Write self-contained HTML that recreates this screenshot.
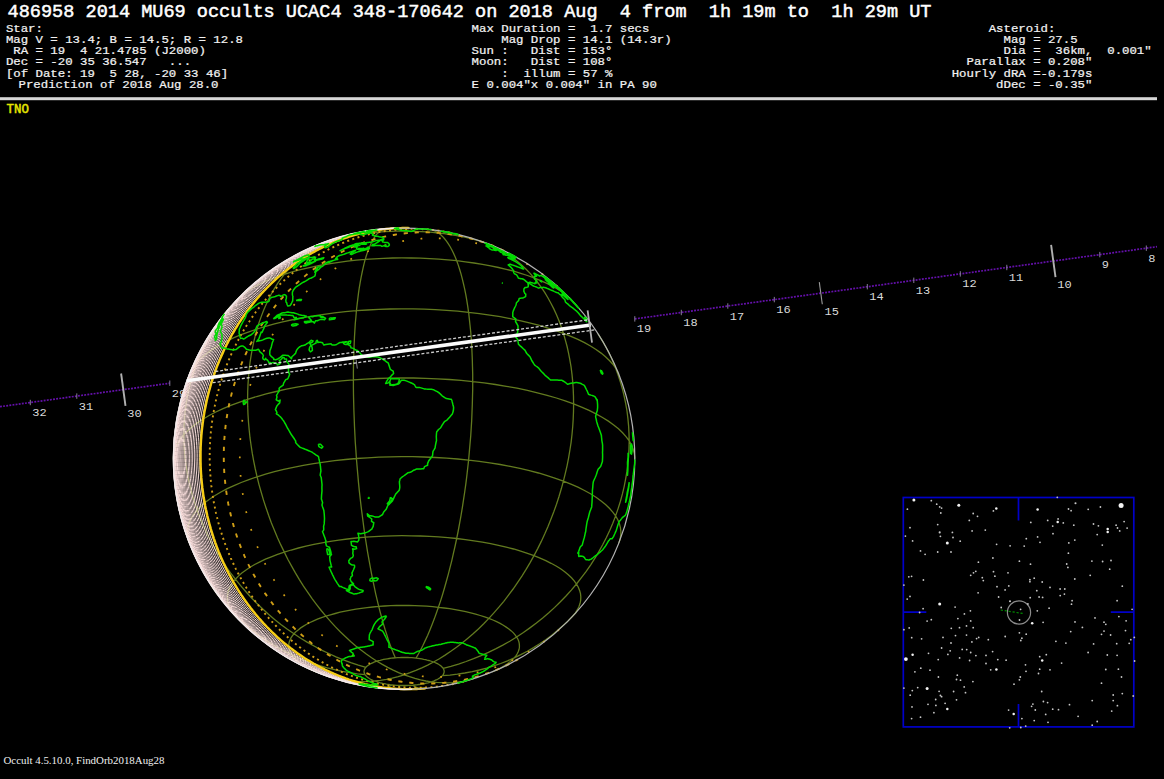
<!DOCTYPE html>
<html><head><meta charset="utf-8"><title>486958 2014 MU69 occults UCAC4 348-170642</title>
<style>
html,body{margin:0;padding:0;background:#000;}
body{width:1164px;height:779px;position:relative;overflow:hidden;color:#fff;}
svg{position:absolute;left:0;top:0;}
</style></head><body>
<svg width="1164" height="779" viewBox="0 0 1164 779">
<g stroke="#6410aa" stroke-width="1.7" stroke-dasharray="1.9 1.25" fill="none">
<path d="M0 406.7 L169.8 383.2"/>
<path d="M634.8 318.9 L1157 246.7"/>
</g>
<g fill="none"><path d="M1146.3 245.5 L1146.3 250.9" stroke="#857d96" stroke-width="1"/><path d="M1099.8 251.9 L1099.8 257.3" stroke="#857d96" stroke-width="1"/><path d="M1051.1 244.9 L1055.5 277.2" stroke="#b0b0b0" stroke-width="1.9"/><path d="M1006.8 264.8 L1006.8 270.2" stroke="#857d96" stroke-width="1"/><path d="M960.3 271.2 L960.3 276.6" stroke="#857d96" stroke-width="1"/><path d="M913.8 277.6 L913.8 283" stroke="#857d96" stroke-width="1"/><path d="M867.3 284 L867.3 289.4" stroke="#857d96" stroke-width="1"/><path d="M819.3 282.1 L822.3 304.3" stroke="#9a9a9a" stroke-width="1.1"/><path d="M774.3 296.9 L774.3 302.3" stroke="#857d96" stroke-width="1"/><path d="M727.8 303.3 L727.8 308.7" stroke="#857d96" stroke-width="1"/><path d="M681.3 309.8 L681.3 315.2" stroke="#857d96" stroke-width="1"/><path d="M634.8 316.2 L634.8 321.6" stroke="#857d96" stroke-width="1"/><path d="M169.8 380.5 L169.8 385.9" stroke="#857d96" stroke-width="1"/><path d="M121.1 373.5 L125.5 405.8" stroke="#b0b0b0" stroke-width="1.9"/><path d="M76.8 393.4 L76.8 398.8" stroke="#857d96" stroke-width="1"/><path d="M30.3 399.8 L30.3 405.2" stroke="#857d96" stroke-width="1"/></g>
<g font-family="'Liberation Mono',monospace" font-size="12px" fill="#dadada"><text transform="translate(1148.2 261.7) scale(1 0.9)">8</text><text transform="translate(1101.7 268.1) scale(1 0.9)">9</text><text transform="translate(1057.3 288.3) scale(1 0.9)">10</text><text transform="translate(1008.7 281) scale(1 0.9)">11</text><text transform="translate(962.2 287.4) scale(1 0.9)">12</text><text transform="translate(915.7 293.8) scale(1 0.9)">13</text><text transform="translate(869.2 300.2) scale(1 0.9)">14</text><text transform="translate(824.6 314.8) scale(1 0.9)">15</text><text transform="translate(776.2 313.1) scale(1 0.9)">16</text><text transform="translate(729.7 319.5) scale(1 0.9)">17</text><text transform="translate(683.2 326) scale(1 0.9)">18</text><text transform="translate(636.7 332.4) scale(1 0.9)">19</text><text transform="translate(171.7 396.7) scale(1 0.9)">29</text><text transform="translate(127.3 416.9) scale(1 0.9)">30</text><text transform="translate(78.7 409.6) scale(1 0.9)">31</text><text transform="translate(32.2 416) scale(1 0.9)">32</text></g>
<path d="M374.7 681 L373.3 680.5 L372 679.9 L370.8 679.3 L369.7 678.7 L368.6 678 L367.7 677.4 L366.9 676.7 L366.2 676 L365.5 675.3 L365 674.6 L364.6 673.9 L364.3 673.1 L364 671.7 L364.2 670.2 L364.8 668.8 L365.3 668 L365.9 667.3 L366.5 666.6 L367.3 666 L368.2 665.3 L369.2 664.6 L370.2 664 L371.4 663.4 L372.7 662.8 L374 662.2 L375.4 661.7 L376.9 661.2 L378.5 660.7 L380.2 660.3 L381.9 659.8 L383.6 659.4 L385.5 659.1 L387.4 658.8 L389.3 658.5 L391.3 658.2 L393.3 658 L395.3 657.8 L397.4 657.7 L399.4 657.6 L401.5 657.5 L403.6 657.5 L405.7 657.5 L407.8 657.5 L409.9 657.6 L411.9 657.7 L414 657.9 L416 658.1 L418 658.3 L419.9 658.6 L421.8 658.9 L423.7 659.3 L425.5 659.6 L427.2 660.1 L428.9 660.5 L430.5 661 L432.1 661.5 L433.5 662 L434.9 662.5 L436.2 663.1 L437.4 663.7 L438.5 664.3 L439.6 665 L440.5 665.6 L441.3 666.3 L442 667 L442.7 667.7 L443.2 668.4 L443.6 669.1 L443.9 669.9 L444.2 671.3 L444 672.8 L443.4 674.3 L442.9 675 L442.3 675.7 L441.7 676.4 L440.9 677.1 L440 677.7 L439 678.4 L438 679 L436.8 679.6 L435.5 680.2 L434.2 680.8 L432.8 681.3 L431.3 681.8 L429.7 682.3 L428 682.8 L426.3 683.2 L424.6 683.6 L422.7 683.9 L420.8 684.3 L418.9 684.5 L416.9 684.8 L414.9 685 L412.9 685.2 L410.8 685.3 L408.8 685.4 L406.7 685.5 L404.6 685.5 L402.5 685.5 L400.4 685.5 L398.3 685.4 L396.3 685.3 L394.2 685.1 L392.2 684.9 L390.2 684.7 L388.3 684.4 L386.4 684.1 L384.5 683.7 L382.7 683.4 L381 683 L379.3 682.5 L377.7 682 L376.1 681.5 L374.7 681M316.2 672 L315.3 671.6 L311.6 670 L308.1 668.3 L304.9 666.5 L302 664.6 L299.3 662.7 L296.9 660.8 L294.8 658.8 L293.1 656.8 L291.6 654.7 L290.4 652.6 L289.5 650.6 L289 648.4 L288.8 646.3 L288.8 644.2 L289.2 642.1 L290 640 L291 637.9 L292.3 635.9 L294 633.8 L295.9 631.8 L298.2 629.9 L300.7 627.9 L303.5 626.1 L306.6 624.3 L310 622.5 L313.6 620.8 L317.4 619.2 L321.5 617.6 L325.9 616.2 L330.4 614.8 L335.2 613.5 L340.1 612.2 L345.2 611.1 L350.5 610.1 L355.9 609.1 L361.4 608.3 L367.1 607.6 L372.9 607 L378.7 606.4 L384.7 606 L390.6 605.7 L396.7 605.5 L402.7 605.4 L408.7 605.5 L414.8 605.6 L420.8 605.9 L426.7 606.2 L432.6 606.7 L438.4 607.3 L444.1 608 L449.7 608.7 L455.2 609.6 L460.6 610.6 L465.7 611.7 L470.8 612.9 L475.6 614.1 L480.2 615.5 L484.7 616.9 L488.9 618.4 L492.9 620 L496.6 621.7 L500.1 623.4 L503.3 625.2 L506.2 627.1 L508.9 629 L511.3 630.9 L513.4 632.9 L515.1 634.9 L516.6 637 L517.8 639 L518.7 641.1 L519.2 643.2 L519.4 645.3 L519.4 647.5 L519 649.6 L518.2 651.7 L517.2 653.8 L515.9 655.8 L514.2 657.9 L512.3 659.9 L510 661.8 L507.5 663.7 L504.7 665.6 L501.6 667.4 L498.2 669.2 L494.6 670.9 L492 672M236.3 617 L234 614.3 L231.7 611.2 L229.9 608 L228.6 604.8 L227.7 601.6 L227.4 598.4 L227.5 595.1 L228.1 591.9 L229.2 588.7 L230.8 585.5 L232.8 582.3 L235.4 579.2 L238.4 576.1 L241.8 573.1 L245.7 570.2 L250 567.3 L254.7 564.5 L259.9 561.8 L265.4 559.2 L271.3 556.8 L277.6 554.4 L284.3 552.1 L291.2 550 L298.5 548 L306 546.1 L313.9 544.4 L322 542.8 L330.3 541.4 L338.8 540.1 L347.4 539 L356.3 538 L365.2 537.2 L374.3 536.6 L383.5 536.1 L392.7 535.8 L401.9 535.7 L411.2 535.8 L420.4 536 L429.6 536.4 L438.7 536.9 L447.8 537.6 L456.7 538.5 L465.4 539.6 L474 540.8 L482.4 542.1 L490.6 543.6 L498.5 545.3 L506.2 547.1 L513.6 549 L520.7 551.1 L527.5 553.3 L534 555.6 L540.1 558.1 L545.8 560.6 L551.1 563.3 L556.1 566 L560.6 568.8 L564.7 571.7 L568.3 574.7 L571.5 577.8 L574.2 580.9 L576.5 584 L578.3 587.2 L579.6 590.4 L580.5 593.6 L580.8 596.8 L580.7 600.1 L580.1 603.3 L579 606.5 L577.4 609.7 L575.4 612.9 L572.8 616 L571.8 617M189.4 542.9 L188.8 541.5 L187.8 537.5 L187.3 533.5 L187.5 529.6 L188.2 525.6 L189.6 521.6 L191.5 517.7 L194 513.9 L197.1 510 L200.8 506.3 L205 502.6 L209.8 499 L215 495.5 L220.9 492 L227.2 488.7 L234 485.6 L241.2 482.5 L248.9 479.6 L257.1 476.8 L265.6 474.2 L274.5 471.7 L283.8 469.4 L293.4 467.3 L303.3 465.4 L313.5 463.6 L323.9 462.1 L334.6 460.7 L345.4 459.5 L356.4 458.5 L367.6 457.8 L378.8 457.2 L390.1 456.8 L401.5 456.7 L412.8 456.7 L424.1 457 L435.4 457.5 L446.6 458.2 L457.6 459 L468.6 460.1 L479.3 461.4 L489.8 462.9 L500.2 464.5 L510.2 466.4 L519.9 468.4 L529.4 470.6 L538.5 473 L547.2 475.6 L555.5 478.3 L563.4 481.1 L570.9 484.1 L577.9 487.2 L584.5 490.5 L590.5 493.8 L596 497.3 L601.1 500.9 L605.5 504.5 L609.4 508.3 L612.8 512.1 L615.6 515.9 L617.8 519.8 L619.4 523.7 L620.4 527.7 L620.9 531.7 L620.7 535.7 L620 539.6 L618.8 542.9M173.5 458.7 L173.6 455.5 L174.4 451.2 L175.8 447 L177.9 442.9 L180.5 438.7 L183.8 434.7 L187.7 430.7 L192.2 426.7 L197.3 422.9 L202.9 419.2 L209.1 415.5 L215.8 412 L223.1 408.6 L230.8 405.4 L239 402.3 L247.6 399.3 L256.7 396.5 L266.2 393.9 L276.1 391.5 L286.3 389.2 L296.9 387.2 L307.7 385.3 L318.8 383.6 L330.1 382.2 L341.7 380.9 L353.4 379.9 L365.2 379.1 L377.2 378.5 L389.2 378.1 L401.3 377.9 L413.4 378 L425.4 378.3 L437.4 378.8 L449.3 379.5 L461.1 380.4 L472.7 381.6 L484.1 382.9 L495.4 384.5 L506.3 386.3 L517 388.2 L527.4 390.4 L537.4 392.8 L547.1 395.3 L556.4 398 L565.2 400.9 L573.6 403.9 L581.6 407.1 L589.1 410.4 L596 413.9 L602.5 417.5 L608.4 421.1 L613.7 424.9 L618.5 428.8 L622.6 432.8 L626.2 436.8 L629.2 440.9 L631.5 445.1 L633.2 449.3 L634.3 453.5 L634.8 457.7 L634.7 458.7M189.4 374.5 L191.5 369.9 L194 366 L197.1 362.2 L200.8 358.5 L205 354.8 L209.8 351.2 L215 347.6 L220.9 344.2 L227.2 340.9 L234 337.7 L241.2 334.7 L248.9 331.8 L257.1 329 L265.6 326.4 L274.5 323.9 L283.8 321.6 L293.4 319.5 L303.3 317.6 L313.5 315.8 L323.9 314.3 L334.6 312.9 L345.4 311.7 L356.4 310.7 L367.6 310 L378.8 309.4 L390.1 309 L401.5 308.9 L412.8 308.9 L424.1 309.2 L435.4 309.7 L446.6 310.3 L457.6 311.2 L468.6 312.3 L479.3 313.6 L489.8 315.1 L500.2 316.7 L510.2 318.6 L519.9 320.6 L529.4 322.8 L538.5 325.2 L547.2 327.8 L555.5 330.5 L563.4 333.3 L570.9 336.3 L577.9 339.4 L584.5 342.7 L590.5 346 L596 349.5 L601.1 353.1 L605.5 356.7 L609.4 360.5 L612.8 364.2 L615.6 368.1 L617.8 372 L618.8 374.5M236.4 300.4 L238.4 298.3 L241.8 295.3 L245.7 292.4 L250 289.5 L254.7 286.7 L259.9 284 L265.4 281.4 L271.3 279 L277.6 276.6 L284.3 274.3 L291.2 272.2 L298.5 270.2 L306 268.3 L313.9 266.6 L322 265 L330.3 263.6 L338.8 262.3 L347.4 261.2 L356.3 260.2 L365.2 259.4 L374.3 258.8 L383.5 258.3 L392.7 258 L401.9 257.9 L411.2 258 L420.4 258.2 L429.6 258.6 L438.7 259.1 L447.8 259.8 L456.7 260.7 L465.4 261.8 L474 263 L482.4 264.3 L490.6 265.8 L498.5 267.5 L506.2 269.3 L513.6 271.2 L520.7 273.3 L527.5 275.5 L534 277.8 L540.1 280.3 L545.8 282.8 L551.1 285.5 L556.1 288.2 L560.6 291 L564.7 293.9 L568.3 296.9 L571.5 300M316.2 245.4 L317.4 244.9 L321.5 243.3 L325.9 241.9 L330.4 240.5 L335.2 239.2 L340.1 238 L345.2 236.8 L350.5 235.8 L355.9 234.9 L361.4 234 L367.1 233.3 L372.9 232.7 L378.7 232.2 L384.7 231.7 L390.6 231.4 L396.7 231.2 L402.7 231.2 L408.7 231.2 L414.8 231.3 L420.8 231.6 L426.7 231.9 L432.6 232.4 L438.4 233 L444.1 233.7 L449.7 234.5 L455.2 235.3 L460.6 236.3 L465.7 237.4 L470.8 238.6 L475.6 239.9 L480.2 241.2 L484.7 242.6 L488.9 244.2 L492 245.4M404.1 674.8 L398.2 676.6 L392.3 678.1 L386.4 679.3 L380.5 680.3 L374.7 681 L368.8 681.5 L363.1 681.6 L357.4 681.5 L351.7 681.1 L346.1 680.5 L340.6 679.6 L335.1 678.4 L329.8 676.9 L324.5 675.2 L322.3 674.4M365 674.6 L357.3 673.8 L349.7 672.7 L342.1 671.3 L334.6 669.7 L327.1 667.8 L319.8 665.7 L312.6 663.3 L305.4 660.7 L298.4 657.8 L291.6 654.7 L284.8 651.4 L278.3 647.8 L271.8 644 L265.5 639.9 L259.4 635.7 L253.5 631.2 L247.8 626.5 L242.2 621.6 L236.9 616.5 L231.7 611.2 L226.8 605.7 L222 600.1 L217.5 594.3 L213.2 588.3 L210.1 583.5M365.9 667.3 L358.3 665.1 L350.8 662.6 L343.4 659.8 L336 656.8 L328.8 653.5 L321.6 650.1 L314.5 646.3 L307.5 642.4 L300.7 638.2 L294 633.8 L287.4 629.2 L280.9 624.4 L274.6 619.4 L268.5 614.2 L262.5 608.8 L256.7 603.2 L251.1 597.5 L245.7 591.5 L240.4 585.4 L235.4 579.2 L230.5 572.8 L225.9 566.3 L221.5 559.6 L217.3 552.8 L213.3 545.9 L209.6 538.9 L206.1 531.8 L202.9 524.6 L199.9 517.4 L197.1 510 L194.6 502.6 L192.4 495.2 L190.4 487.7 L188.6 480.1 L187.2 472.6 L186 465 L185 457.4 L184.4 449.8 L184 442.2 L183.8 434.7 L184 427.1 L184.4 419.7 L185 412.2 L186 404.8 L187.2 397.5 L188.6 390.3 L190.4 383.1 L192.4 376 L194.6 369.1 L197.1 362.2 L199.9 355.5 L202.9 348.9 L206.1 342.4 L209.6 336 L213.3 329.8 L217.3 323.8 L221.5 317.9 L225.9 312.2 L230.5 306.7 L231.7 305.4M404.1 674.8 L398.6 672.6 L393.2 670.1 L387.7 667.4 L382.3 664.4 L376.9 661.2 L371.6 657.7 L366.3 654 L361 650.1 L355.8 645.9 L350.6 641.5 L345.5 636.8 L340.5 632 L335.5 626.9 L330.7 621.6 L325.9 616.2 L321.2 610.5 L316.6 604.6 L312.1 598.6 L307.8 592.4 L303.5 586.1 L299.4 579.6 L295.4 572.9 L291.6 566.1 L287.8 559.2 L284.3 552.1 L280.8 544.9 L277.5 537.7 L274.4 530.3 L271.4 522.9 L268.6 515.3 L266 507.7 L263.5 500.1 L261.2 492.3 L259 484.6 L257.1 476.8 L255.3 469 L253.7 461.2 L252.3 453.4 L251.1 445.5 L250 437.7 L249.2 430 L248.5 422.2 L248 414.5 L247.7 406.9 L247.6 399.3 L247.7 391.8 L248 384.4 L248.5 377.1 L249.2 369.8 L250 362.7 L251.1 355.7 L252.3 348.8 L253.7 342.1 L255.3 335.5 L257.1 329 L259 322.7 L261.2 316.6 L263.5 310.6 L266 304.8 L268.6 299.2 L271.4 293.8 L274.4 288.6 L277.5 283.6 L280.8 278.9 L284.3 274.3 L287.8 270 L291.6 265.9 L295.4 262 L299.4 258.4 L303.5 255 L307.8 251.9 L312.1 249 L316.6 246.4 L321.2 244 L325.9 241.9 L330.7 240 L333.2 239.2M395.3 657.8 L393.6 653.7 L391.8 649.3 L390.1 644.7 L388.4 639.9 L386.8 634.8 L385.1 629.5 L383.5 624.1 L381.9 618.4 L380.3 612.5 L378.7 606.4 L377.2 600.2 L375.7 593.8 L374.3 587.2 L372.9 580.5 L371.5 573.6 L370.2 566.5 L368.9 559.4 L367.6 552.1 L366.4 544.7 L365.2 537.2 L364.1 529.6 L363.1 522 L362.1 514.2 L361.1 506.4 L360.2 498.5 L359.3 490.6 L358.5 482.6 L357.8 474.6 L357.1 466.6 L356.4 458.5 L355.9 450.5 L355.3 442.5 L354.9 434.5 L354.5 426.5 L354.2 418.6 L353.9 410.7 L353.7 402.9 L353.5 395.1 L353.4 387.5 L353.4 379.9 L353.4 372.4 L353.5 365 L353.7 357.7 L353.9 350.6 L354.2 343.6 L354.5 336.7 L354.9 329.9 L355.3 323.4 L355.9 317 L356.4 310.7 L357.1 304.7 L357.8 298.8 L358.5 293.1 L359.3 287.7 L360.2 282.4 L361.1 277.3 L362.1 272.5 L363.1 267.9 L364.1 263.6 L365.2 259.4 L366.4 255.5 L367.6 251.9 L368.9 248.5 L370.2 245.4 L371.5 242.5 L372.9 239.9 L374.3 237.6 L375.7 235.5 L377.2 233.7 L378.7 232.2 L380.3 230.9 L381.9 229.9 L383.5 229.2 L385.1 228.8M416 658.1 L418.4 654 L420.7 649.7 L423 645.2 L425.3 640.4 L427.6 635.4 L429.8 630.2 L432 624.7 L434.2 619.1 L436.3 613.3 L438.4 607.3 L440.5 601.1 L442.5 594.7 L444.4 588.2 L446.3 581.5 L448.2 574.7 L450 567.7 L451.8 560.6 L453.4 553.3 L455.1 546 L456.7 538.5 L458.2 531 L459.6 523.3 L461 515.6 L462.3 507.8 L463.5 499.9 L464.7 492 L465.8 484.1 L466.8 476.1 L467.7 468.1 L468.6 460.1 L469.3 452.1 L470 444.1 L470.7 436.1 L471.2 428.2 L471.7 420.3 L472 412.4 L472.3 404.6 L472.5 396.8 L472.7 389.2 L472.7 381.6 L472.7 374.1 L472.5 366.7 L472.3 359.4 L472 352.2 L471.7 345.2 L471.2 338.3 L470.7 331.6 L470 325 L469.3 318.6 L468.6 312.3 L467.7 306.2 L466.8 300.3 L465.8 294.6 L464.7 289.1 L463.5 283.9 L462.3 278.8 L461 273.9 L459.6 269.3 L458.2 264.9 L456.7 260.7 L455.1 256.8 L453.4 253.1 L451.8 249.7 L450 246.5 L448.2 243.6 L446.3 240.9 L444.4 238.5 L442.5 236.4 L440.5 234.6 L438.4 233 L436.3 231.7 L434.2 230.7 L432 229.9 L429.8 229.4M404.1 674.8 L410 672.7 L415.9 670.4 L421.8 667.9 L427.7 665.1 L433.5 662 L439.4 658.7 L445.1 655.1 L450.8 651.3 L456.5 647.3 L462.1 643 L467.6 638.5 L473.1 633.8 L478.4 628.9 L483.7 623.8 L488.9 618.4 L493.9 612.9 L498.9 607.2 L503.8 601.3 L508.5 595.2 L513.1 589 L517.5 582.6 L521.9 576.1 L526.1 569.4 L530.1 562.6 L534 555.6 L537.7 548.6 L541.3 541.4 L544.7 534.1 L547.9 526.7 L550.9 519.3 L553.8 511.8 L556.5 504.2 L559 496.5 L561.3 488.8 L563.4 481.1 L565.3 473.4 L567.1 465.6 L568.6 457.8 L569.9 450 L571.1 442.3 L572 434.5 L572.7 426.8 L573.2 419.1 L573.5 411.5 L573.6 403.9 L573.5 396.4 L573.2 389 L572.7 381.6 L572 374.4 L571.1 367.2 L569.9 360.2 L568.6 353.3 L567.1 346.5 L565.3 339.8 L563.4 333.3 L561.3 327 L559 320.8 L556.5 314.7 L553.8 308.9 L550.9 303.2 L547.9 297.7 L544.7 292.4 L541.3 287.4 L537.7 282.5 L534 277.8 L530.1 273.4 L526.1 269.2 L521.9 265.2 L517.5 261.5 L513.1 257.9 L508.5 254.7 L503.8 251.7 L498.9 248.9 L493.9 246.4 L488.9 244.2 L485.9 243M443.2 668.4 L450.9 666.4 L458.5 664.1 L466.1 661.5 L473.6 658.7 L481.1 655.7 L488.4 652.4 L495.6 648.9 L502.8 645.1 L509.8 641.2 L516.6 637 L523.4 632.5 L529.9 627.9 L536.4 623.1 L542.7 618 L548.8 612.8 L554.7 607.4 L560.4 601.8 L566 596 L571.3 590.1 L576.5 584 L581.4 577.7 L586.2 571.3 L590.7 564.8 L595 558.1 L599 551.4 L602.8 544.5 L606.4 537.5 L609.7 530.4 L612.8 523.2 L615.6 515.9 L618.1 508.6 L620.4 501.2 L622.5 493.7 L624.2 486.3 L625.7 478.7 L627 471.2 L627.9 463.6 L628.6 456.1 L629 448.5 L629.2 440.9 L629 433.4 L628.6 425.9 L627.9 418.4 L627 411 L625.7 403.7 L624.2 396.4 L622.5 389.2 L620.4 382.1 L618.1 375 L615.6 368.1 L612.8 361.3 L609.7 354.6 L606.4 348 L602.8 341.6 L599 335.3 L598.1 333.9M442.3 675.7 L449.9 675.1 L457.4 674.2 L464.8 673 L472.2 671.6 L479.4 670 L486.6 668.1 L493.7 665.9 L500.7 663.5 L507.5 660.8 L514.2 657.9 L520.8 654.7 L527.3 651.3 L533.6 647.6 L539.7 643.8 L545.7 639.7 L551.5 635.4 L557.1 630.8 L562.5 626.1 L567.8 621.1 L572.8 616 L576.5 612M404.1 674.8 L409.6 676.7 L415 678.4 L420.5 679.8 L425.9 681 L431.3 681.8 L436.6 682.4 L441.9 682.7 L447.2 682.8 L452.4 682.6 L457.6 682.1 L462.7 681.3 L467.7 680.3 L472.7 678.9 L475 678.2M412.9 685.2 L414.6 686.5 L416.4 687.4 L418.1 688.1 L419.8 688.6 L421.4 688.7M392.2 684.9 L389.8 686.1 L387.5 687 L385.2 687.7 L382.9 688.1 L380.6 688.1 L379.1 688" fill="none" stroke="#627a1f" stroke-width="1.3"/>
<g fill="none" stroke="#ffe4e1" stroke-width="0.95">
<path d="M405 228 L401.5 228 L397.9 228.1 L394.3 228.3 L390.7 228.5 L387.1 228.8 L383.5 229.2 L379.9 229.6 L376.3 230.1 L372.8 230.7 L369.2 231.4 L365.7 232.1 L362.2 232.9 L358.7 233.7 L355.2 234.6 L351.7 235.6 L348.2 236.7 L344.8 237.8 L341.3 239 L337.9 240.3 L334.5 241.6 L331.2 243 L327.8 244.5 L324.5 246 L321.2 247.6 L318 249.3 L314.7 251 L311.5 252.8 L308.3 254.6 L305.2 256.5 L302 258.5 L298.9 260.5 L295.9 262.6 L292.8 264.7 L289.8 267 L286.9 269.2 L284 271.5 L281.1 273.9 L278.2 276.4 L275.4 278.9 L272.7 281.4 L269.9 284 L267.2 286.7 L264.6 289.4 L262 292.1 L259.4 295 L256.9 297.8 L254.5 300.7 L252 303.7 L249.7 306.7 L247.3 309.7 L245.1 312.8 L242.8 316 L240.6 319.2 L238.5 322.4 L236.4 325.7 L234.4 329 L232.4 332.3 L230.5 335.7 L228.6 339.1 L226.8 342.6 L225.1 346.1 L223.4 349.6 L221.7 353.2 L220.1 356.8 L218.6 360.4 L217.1 364.1 L215.7 367.7 L214.3 371.5 L213 375.2 L211.8 379 L210.6 382.7 L209.5 386.6 L208.4 390.4 L207.4 394.2 L206.4 398.1 L205.5 402 L204.7 405.9 L204 409.9 L203.2 413.8 L202.6 417.7 L202 421.7 L201.5 425.7 L201.1 429.7 L200.7 433.7 L200.3 437.7 L200.1 441.7 L199.9 445.7 L199.7 449.7 L199.6 453.8 L199.6 457.8 L199.7 461.8 L199.8 465.8 L199.9 469.9 L200.2 473.9 L200.5 477.9 L200.8 481.9 L201.3 485.9 L201.7 489.9 L202.3 493.9 L202.9 497.8 L203.6 501.8 L204.3 505.8 L205.1 509.7 L206 513.6 L206.9 517.5 L207.8 521.4 L208.9 525.3 L210 529.1 L211.1 532.9 L212.4 536.7 L213.6 540.5 L215 544.2 L216.4 548 L217.8 551.7 L219.3 555.3 L220.9 559 L222.5 562.6 L224.2 566.2 L225.9 569.7 L227.7 573.2 L229.5 576.7 L231.4 580.1 L233.4 583.5 L235.4 586.9 L237.4 590.2 L239.5 593.5 L241.7 596.8 L243.9 600 L246.1 603.1 L248.4 606.2 L250.8 609.3 L253.2 612.3 L255.6 615.3 L258.1 618.2 L260.6 621.1 L263.2 624 L265.8 626.7 L268.5 629.5 L271.2 632.1 L274 634.8 L276.7 637.3 L279.6 639.9 L282.4 642.3 L285.3 644.7 L288.3 647.1 L291.3 649.4 L294.3 651.6 L297.3 653.8 L300.4 655.9 L303.5 657.9 L306.6 659.9 L309.8 661.9 L313 663.7 L316.2 665.6 L319.5 667.3 L322.8 669 L326.1 670.6 L329.4 672.2 L332.8 673.6 L336.2 675.1 L339.5 676.4 L343 677.7 L346.4 678.9 L349.9 680.1 L353.3 681.2 L356.8 682.2 L360.3 683.2 L363.8 684.1 L367.4 684.9 L370.9 685.6 L374.5 686.3 L378 686.9 L381.6 687.4 L385.2 687.9 L388.8 688.3 L392.4 688.7 L396 688.9 L399.6 689.1 L403.2 689.2 L406.8 689.3 L410.4 689.3 L414 689.2 L417.5 689 L421.1 688.8M396 228.1 L392.5 228.3 L388.9 228.5 L385.3 228.8 L381.7 229.2 L378.1 229.6 L374.5 230.2 L371 230.7 L367.4 231.4 L363.9 232.1 L360.4 232.9 L356.9 233.8 L353.4 234.7 L349.9 235.7 L346.4 236.7 L343 237.9 L339.5 239.1 L336.1 240.3 L332.7 241.6 L329.4 243 L326 244.5 L322.7 246 L319.4 247.6 L316.1 249.3 L312.9 251 L309.7 252.8 L306.5 254.6 L303.3 256.5 L300.2 258.5 L297.1 260.5 L294 262.6 L291 264.8 L288 267 L285.1 269.3 L282.1 271.6 L279.3 274 L276.4 276.4 L273.6 278.9 L270.8 281.4 L268.1 284.1 L265.4 286.7 L262.8 289.4 L260.2 292.2 L257.6 295 L255.1 297.9 L252.6 300.8 L250.2 303.7 L247.8 306.7 L245.5 309.8 L243.2 312.9 L241 316 L238.8 319.2 L236.7 322.4 L234.6 325.7 L232.6 329 L230.6 332.4 L228.7 335.7 L226.8 339.2 L225 342.6 L223.2 346.1 L221.5 349.7 L219.9 353.2 L218.3 356.8 L216.8 360.4 L215.3 364.1 L213.9 367.8 L212.5 371.5 L211.2 375.2 L209.9 379 L208.8 382.8 L207.6 386.6 L206.6 390.4 L205.5 394.3 L204.6 398.2 L203.7 402.1 L202.9 406 L202.1 409.9 L201.4 413.9 L200.8 417.8 L200.2 421.8 L199.7 425.8 L199.2 429.7 L198.8 433.7 L198.5 437.7 L198.2 441.8 L198 445.8 L197.9 449.8 L197.8 453.8 L197.8 457.8 L197.8 461.9 L197.9 465.9 L198.1 469.9 L198.4 473.9 L198.6 478 L199 482 L199.4 486 L199.9 490 L200.5 493.9 L201.1 497.9 L201.7 501.9 L202.5 505.8 L203.3 509.8 L204.1 513.7 L205 517.6 L206 521.5 L207.1 525.3 L208.1 529.2 L209.3 533 L210.5 536.8 L211.8 540.6 L213.1 544.3 L214.5 548 L216 551.7 L217.5 555.4 L219 559.1 L220.7 562.7 L222.3 566.2 L224.1 569.8 L225.9 573.3 L227.7 576.8 L229.6 580.2 L231.5 583.6 L233.5 587 L235.6 590.3 L237.7 593.6 L239.8 596.8 L242 600 L244.3 603.2 L246.6 606.3 L249 609.4 L251.4 612.4 L253.8 615.4 L256.3 618.3 L258.8 621.2 L261.4 624 L264 626.8 L266.7 629.6 L269.4 632.2 L272.1 634.9 L274.9 637.4 L277.8 639.9 L280.6 642.4 L283.5 644.8 L286.5 647.2 L289.4 649.5 L292.4 651.7 L295.5 653.9 L298.6 656 L301.7 658 L304.8 660 L308 662 L311.2 663.8 L314.4 665.7 L317.7 667.4 L321 669.1 L324.3 670.7 L327.6 672.3 L331 673.7 L334.3 675.2 L337.7 676.5 L341.2 677.8 L344.6 679 L348.1 680.2 L351.5 681.3 L355 682.3 L358.5 683.3 L362 684.2 L365.6 685 L369.1 685.7 L372.7 686.4 L376.2 687 L379.8 687.5 L383.4 688 L387 688.4 L390.6 688.7 L394.2 689 L397.8 689.2 L401.4 689.3 L405 689.4 L408.6 689.3 L412.2 689.3M387.1 228.6 L383.5 228.9 L379.9 229.3 L376.3 229.7 L372.7 230.3 L369.2 230.8 L365.6 231.5 L362.1 232.2 L358.6 233 L355.1 233.8 L351.6 234.8 L348.1 235.8 L344.6 236.8 L341.2 238 L337.7 239.2 L334.3 240.4 L330.9 241.7 L327.6 243.1 L324.2 244.6 L320.9 246.1 L317.6 247.7 L314.3 249.4 L311.1 251.1 L307.9 252.9 L304.7 254.7 L301.5 256.6 L298.4 258.6 L295.3 260.6 L292.3 262.7 L289.2 264.9 L286.2 267.1 L283.3 269.3 L280.4 271.7 L277.5 274.1 L274.6 276.5 L271.8 279 L269.1 281.5 L266.3 284.1 L263.6 286.8 L261 289.5 L258.4 292.3 L255.8 295.1 L253.3 297.9 L250.9 300.8 L248.4 303.8 L246.1 306.8 L243.7 309.9 L241.5 313 L239.2 316.1 L237 319.3 L234.9 322.5 L232.8 325.8 L230.8 329.1 L228.8 332.4 L226.9 335.8 L225 339.2 L223.2 342.7 L221.5 346.2 L219.8 349.7 L218.1 353.3 L216.5 356.9 L215 360.5 L213.5 364.2 L212.1 367.9 L210.7 371.6 L209.4 375.3 L208.2 379.1 L207 382.9 L205.9 386.7 L204.8 390.5 L203.8 394.4 L202.8 398.2 L201.9 402.1 L201.1 406.1 L200.3 410 L199.6 413.9 L199 417.9 L198.4 421.8 L197.9 425.8 L197.5 429.8 L197.1 433.8 L196.7 437.8 L196.5 441.8 L196.3 445.8 L196.1 449.9 L196 453.9 L196 457.9 L196.1 461.9 L196.2 466 L196.3 470 L196.6 474 L196.9 478 L197.2 482 L197.7 486 L198.1 490 L198.7 494 L199.3 498 L200 501.9 L200.7 505.9 L201.5 509.8 L202.4 513.7 L203.3 517.6 L204.2 521.5 L205.3 525.4 L206.4 529.2 L207.5 533 L208.8 536.8 L210 540.6 L211.4 544.4 L212.7 548.1 L214.2 551.8 L215.7 555.5 L217.3 559.1 L218.9 562.7 L220.6 566.3 L222.3 569.8 L224.1 573.3 L225.9 576.8 L227.8 580.3 L229.8 583.7 L231.8 587 L233.8 590.4 L235.9 593.6 L238.1 596.9 L240.3 600.1 L242.5 603.2 L244.8 606.4 L247.2 609.4 L249.6 612.5 L252 615.4 L254.5 618.4 L257 621.2 L259.6 624.1 L262.2 626.9 L264.9 629.6 L267.6 632.3 L270.4 634.9 L273.1 637.5 L276 640 L278.8 642.4 L281.7 644.9 L284.7 647.2 L287.7 649.5 L290.7 651.7 L293.7 653.9 L296.8 656 L299.9 658.1 L303 660.1 L306.2 662 L309.4 663.9 L312.6 665.7 L315.9 667.4 L319.2 669.1 L322.5 670.7 L325.8 672.3 L329.2 673.8 L332.5 675.2 L335.9 676.6 L339.4 677.8 L342.8 679.1 L346.3 680.2 L349.7 681.3 L353.2 682.3 L356.7 683.3 L360.2 684.2 L363.8 685 L367.3 685.7 L370.9 686.4 L374.4 687 L378 687.6 L381.6 688 L385.2 688.4 L388.8 688.8 L392.4 689 L396 689.2 L399.5 689.3 L403.1 689.4M378.1 229.5 L374.5 229.9 L371 230.4 L367.4 231 L363.9 231.7 L360.3 232.4 L356.8 233.2 L353.3 234 L349.8 234.9 L346.3 235.9 L342.8 237 L339.4 238.1 L336 239.3 L332.6 240.6 L329.2 241.9 L325.8 243.3 L322.5 244.8 L319.2 246.3 L315.9 247.9 L312.6 249.5 L309.3 251.3 L306.1 253 L302.9 254.9 L299.8 256.8 L296.7 258.8 L293.6 260.8 L290.5 262.9 L287.5 265 L284.5 267.2 L281.5 269.5 L278.6 271.8 L275.7 274.2 L272.9 276.6 L270.1 279.1 L267.3 281.7 L264.6 284.3 L261.9 286.9 L259.3 289.6 L256.7 292.4 L254.1 295.2 L251.6 298.1 L249.1 301 L246.7 303.9 L244.3 306.9 L242 310 L239.7 313.1 L237.5 316.2 L235.3 319.4 L233.2 322.6 L231.1 325.9 L229.1 329.2 L227.1 332.6 L225.2 335.9 L223.3 339.4 L221.5 342.8 L219.8 346.3 L218 349.8 L216.4 353.4 L214.8 357 L213.3 360.6 L211.8 364.3 L210.4 368 L209 371.7 L207.7 375.4 L206.5 379.2 L205.3 383 L204.1 386.8 L203.1 390.6 L202.1 394.5 L201.1 398.3 L200.2 402.2 L199.4 406.1 L198.6 410.1 L197.9 414 L197.3 418 L196.7 421.9 L196.2 425.9 L195.7 429.9 L195.4 433.9 L195 437.9 L194.8 441.9 L194.5 445.9 L194.4 449.9 L194.3 454 L194.3 458 L194.4 462 L194.5 466 L194.6 470 L194.9 474.1 L195.2 478.1 L195.5 482.1 L196 486.1 L196.4 490.1 L197 494 L197.6 498 L198.3 502 L199 505.9 L199.8 509.9 L200.6 513.8 L201.6 517.7 L202.5 521.6 L203.6 525.4 L204.7 529.3 L205.8 533.1 L207 536.9 L208.3 540.6 L209.6 544.4 L211 548.1 L212.5 551.8 L214 555.5 L215.6 559.1 L217.2 562.7 L218.8 566.3 L220.6 569.8 L222.4 573.4 L224.2 576.8 L226.1 580.3 L228 583.7 L230 587 L232.1 590.4 L234.2 593.6 L236.3 596.9 L238.5 600.1 L240.8 603.2 L243.1 606.4 L245.4 609.4 L247.8 612.4 L250.3 615.4 L252.8 618.4 L255.3 621.2 L257.9 624.1 L260.5 626.8 L263.2 629.6 L265.9 632.3 L268.6 634.9 L271.4 637.4 L274.2 640 L277.1 642.4 L280 644.8 L282.9 647.2 L285.9 649.5 L288.9 651.7 L292 653.9 L295 656 L298.1 658 L301.3 660 L304.5 662 L307.6 663.8 L310.9 665.7 L314.1 667.4 L317.4 669.1 L320.7 670.7 L324 672.3 L327.4 673.7 L330.8 675.2 L334.2 676.5 L337.6 677.8 L341 679 L344.5 680.2 L348 681.3 L351.4 682.3 L354.9 683.3 L358.5 684.1 L362 685 L365.5 685.7 L369.1 686.4 L372.6 687 L376.2 687.5 L379.8 688 L383.4 688.4 L387 688.7 L390.6 689 L394.2 689.2M369.2 230.7 L365.6 231.2 L362.1 231.9 L358.6 232.6 L355 233.4 L351.5 234.2 L348 235.2 L344.6 236.2 L341.1 237.2 L337.6 238.4 L334.2 239.5 L330.8 240.8 L327.4 242.1 L324.1 243.5 L320.7 245 L317.4 246.5 L314.1 248.1 L310.9 249.8 L307.6 251.5 L304.4 253.3 L301.2 255.1 L298.1 257 L294.9 259 L291.9 261 L288.8 263.1 L285.8 265.2 L282.8 267.4 L279.8 269.7 L276.9 272 L274 274.4 L271.2 276.8 L268.4 279.3 L265.6 281.9 L262.9 284.5 L260.2 287.1 L257.6 289.8 L255 292.6 L252.4 295.4 L249.9 298.3 L247.4 301.2 L245 304.1 L242.6 307.1 L240.3 310.2 L238 313.3 L235.8 316.4 L233.6 319.6 L231.5 322.8 L229.4 326.1 L227.4 329.4 L225.4 332.7 L223.5 336.1 L221.7 339.5 L219.8 343 L218.1 346.5 L216.4 350 L214.7 353.6 L213.1 357.1 L211.6 360.8 L210.1 364.4 L208.7 368.1 L207.4 371.8 L206 375.5 L204.8 379.3 L203.6 383.1 L202.5 386.9 L201.4 390.7 L200.4 394.6 L199.5 398.4 L198.6 402.3 L197.8 406.2 L197 410.2 L196.3 414.1 L195.7 418.1 L195.1 422 L194.6 426 L194.1 430 L193.7 434 L193.4 438 L193.1 442 L192.9 446 L192.8 450 L192.7 454 L192.7 458 L192.7 462.1 L192.8 466.1 L193 470.1 L193.2 474.1 L193.5 478.1 L193.9 482.1 L194.3 486.1 L194.8 490.1 L195.3 494.1 L195.9 498.1 L196.6 502 L197.3 506 L198.1 509.9 L199 513.8 L199.9 517.7 L200.9 521.6 L201.9 525.4 L203 529.3 L204.2 533.1 L205.4 536.9 L206.7 540.6 L208 544.4 L209.4 548.1 L210.8 551.8 L212.3 555.5 L213.9 559.1 L215.5 562.7 L217.2 566.3 L218.9 569.8 L220.7 573.3 L222.5 576.8 L224.4 580.2 L226.4 583.6 L228.4 587 L230.4 590.3 L232.5 593.6 L234.7 596.8 L236.9 600 L239.1 603.2 L241.4 606.3 L243.8 609.4 L246.2 612.4 L248.6 615.4 L251.1 618.3 L253.6 621.2 L256.2 624 L258.8 626.8 L261.5 629.5 L264.2 632.2 L266.9 634.8 L269.7 637.4 L272.5 639.9 L275.4 642.3 L278.3 644.7 L281.2 647.1 L284.2 649.4 L287.2 651.6 L290.2 653.8 L293.3 655.9 L296.4 658 L299.6 659.9 L302.7 661.9 L305.9 663.7 L309.1 665.6 L312.4 667.3 L315.7 669 L319 670.6 L322.3 672.2 L325.7 673.6 L329 675.1 L332.4 676.4 L335.8 677.7 L339.3 678.9 L342.7 680.1 L346.2 681.2 L349.7 682.2 L353.2 683.1 L356.7 684 L360.2 684.8 L363.8 685.6 L367.3 686.3 L370.9 686.9 L374.4 687.4 L378 687.9 L381.6 688.3 L385.1 688.6M360.2 232.2 L356.8 232.9 L353.3 233.7 L349.8 234.5 L346.3 235.5 L342.8 236.5 L339.4 237.5 L335.9 238.6 L332.5 239.8 L329.1 241.1 L325.7 242.4 L322.4 243.8 L319 245.3 L315.7 246.8 L312.4 248.4 L309.2 250 L305.9 251.8 L302.7 253.5 L299.5 255.4 L296.4 257.3 L293.3 259.2 L290.2 261.3 L287.1 263.4 L284.1 265.5 L281.1 267.7 L278.2 270 L275.2 272.3 L272.4 274.7 L269.5 277.1 L266.7 279.6 L264 282.1 L261.2 284.7 L258.6 287.4 L255.9 290.1 L253.3 292.8 L250.8 295.6 L248.3 298.5 L245.8 301.4 L243.4 304.3 L241 307.3 L238.7 310.4 L236.4 313.5 L234.2 316.6 L232 319.8 L229.9 323 L227.8 326.3 L225.8 329.6 L223.8 332.9 L221.9 336.3 L220 339.7 L218.2 343.2 L216.5 346.6 L214.8 350.2 L213.1 353.7 L211.5 357.3 L210 360.9 L208.5 364.6 L207.1 368.3 L205.8 372 L204.5 375.7 L203.2 379.5 L202 383.2 L200.9 387 L199.8 390.9 L198.8 394.7 L197.9 398.6 L197 402.5 L196.2 406.4 L195.4 410.3 L194.7 414.2 L194.1 418.2 L193.5 422.1 L193 426.1 L192.5 430.1 L192.1 434.1 L191.8 438 L191.5 442.1 L191.3 446.1 L191.2 450.1 L191.1 454.1 L191.1 458.1 L191.1 462.1 L191.2 466.1 L191.4 470.1 L191.7 474.2 L191.9 478.2 L192.3 482.2 L192.7 486.2 L193.2 490.1 L193.8 494.1 L194.4 498.1 L195 502 L195.8 506 L196.6 509.9 L197.4 513.8 L198.3 517.7 L199.3 521.6 L200.3 525.4 L201.4 529.3 L202.6 533.1 L203.8 536.9 L205.1 540.6 L206.4 544.4 L207.8 548.1 L209.2 551.8 L210.7 555.4 L212.3 559.1 L213.9 562.7 L215.6 566.2 L217.3 569.8 L219.1 573.3 L220.9 576.7 L222.8 580.2 L224.8 583.6 L226.8 586.9 L228.8 590.2 L230.9 593.5 L233 596.8 L235.2 600 L237.5 603.1 L239.8 606.2 L242.1 609.3 L244.5 612.3 L247 615.3 L249.4 618.2 L252 621.1 L254.5 623.9 L257.2 626.7 L259.8 629.4 L262.5 632.1 L265.3 634.7 L268 637.2 L270.9 639.8 L273.7 642.2 L276.6 644.6 L279.5 647 L282.5 649.2 L285.5 651.5 L288.6 653.6 L291.6 655.8 L294.7 657.8 L297.9 659.8 L301 661.7 L304.2 663.6 L307.4 665.4 L310.7 667.1 L314 668.8 L317.3 670.4 L320.6 672 L323.9 673.5 L327.3 674.9 L330.7 676.2 L334.1 677.5 L337.5 678.8 L341 679.9 L344.5 681 L347.9 682 L351.4 683 L354.9 683.9 L358.5 684.7 L362 685.4 L365.5 686.1 L369.1 686.7 L372.7 687.2 L376.1 687.7M351.3 234.1 L348 234.9 L344.6 235.8 L341.1 236.8 L337.6 237.9 L334.2 239 L330.8 240.2 L327.4 241.5 L324 242.8 L320.7 244.2 L317.3 245.6 L314 247.2 L310.7 248.7 L307.5 250.4 L304.2 252.1 L301 253.9 L297.9 255.7 L294.7 257.6 L291.6 259.6 L288.5 261.6 L285.5 263.7 L282.5 265.8 L279.5 268 L276.5 270.3 L273.6 272.6 L270.7 275 L267.9 277.4 L265.1 279.9 L262.3 282.4 L259.6 285 L256.9 287.7 L254.3 290.4 L251.7 293.1 L249.2 295.9 L246.7 298.8 L244.2 301.7 L241.8 304.6 L239.4 307.6 L237.1 310.7 L234.8 313.7 L232.6 316.9 L230.5 320 L228.3 323.3 L226.3 326.5 L224.2 329.8 L222.3 333.1 L220.4 336.5 L218.5 339.9 L216.7 343.4 L214.9 346.9 L213.2 350.4 L211.6 353.9 L210 357.5 L208.5 361.1 L207 364.8 L205.6 368.4 L204.2 372.1 L202.9 375.9 L201.7 379.6 L200.5 383.4 L199.4 387.2 L198.3 391 L197.3 394.9 L196.4 398.7 L195.5 402.6 L194.7 406.5 L193.9 410.4 L193.2 414.3 L192.6 418.3 L192 422.2 L191.5 426.2 L191 430.2 L190.6 434.2 L190.3 438.1 L190 442.1 L189.8 446.1 L189.7 450.1 L189.6 454.2 L189.6 458.2 L189.6 462.2 L189.7 466.2 L189.9 470.2 L190.1 474.2 L190.4 478.2 L190.8 482.2 L191.2 486.2 L191.7 490.2 L192.2 494.1 L192.8 498.1 L193.5 502 L194.2 506 L195 509.9 L195.9 513.8 L196.8 517.7 L197.8 521.5 L198.8 525.4 L199.9 529.2 L201 533 L202.3 536.8 L203.5 540.6 L204.9 544.3 L206.2 548 L207.7 551.7 L209.2 555.4 L210.7 559 L212.4 562.6 L214 566.1 L215.8 569.7 L217.5 573.2 L219.4 576.6 L221.3 580.1 L223.2 583.5 L225.2 586.8 L227.2 590.1 L229.3 593.4 L231.5 596.6 L233.7 599.8 L235.9 603 L238.2 606.1 L240.5 609.1 L242.9 612.1 L245.4 615.1 L247.8 618 L250.4 620.9 L252.9 623.7 L255.6 626.5 L258.2 629.2 L260.9 631.9 L263.6 634.5 L266.4 637.1 L269.2 639.6 L272.1 642 L275 644.4 L277.9 646.8 L280.9 649 L283.9 651.3 L286.9 653.4 L290 655.5 L293.1 657.6 L296.2 659.6 L299.4 661.5 L302.6 663.4 L305.8 665.2 L309 666.9 L312.3 668.6 L315.6 670.2 L318.9 671.8 L322.2 673.2 L325.6 674.7 L329 676 L332.4 677.3 L335.8 678.5 L339.3 679.7 L342.7 680.8 L346.2 681.8 L349.7 682.7 L353.2 683.6 L356.7 684.4 L360.2 685.2 L363.8 685.8 L367.1 686.4M342.4 236.4 L339.4 237.3 L335.9 238.3 L332.5 239.4 L329.1 240.6 L325.7 241.9 L322.3 243.2 L319 244.6 L315.7 246.1 L312.4 247.6 L309.1 249.2 L305.8 250.8 L302.6 252.5 L299.4 254.3 L296.2 256.1 L293.1 258 L290 260 L286.9 262 L283.9 264.1 L280.8 266.2 L277.9 268.4 L274.9 270.7 L272 273 L269.2 275.4 L266.3 277.8 L263.5 280.3 L260.8 282.8 L258.1 285.4 L255.4 288 L252.8 290.7 L250.2 293.5 L247.6 296.3 L245.1 299.1 L242.7 302 L240.3 304.9 L237.9 307.9 L235.6 311 L233.3 314 L231.1 317.2 L228.9 320.3 L226.8 323.5 L224.7 326.8 L222.7 330.1 L220.8 333.4 L218.9 336.8 L217 340.2 L215.2 343.6 L213.4 347.1 L211.7 350.6 L210.1 354.2 L208.5 357.8 L207 361.4 L205.5 365 L204.1 368.7 L202.8 372.4 L201.5 376.1 L200.2 379.8 L199 383.6 L197.9 387.4 L196.8 391.2 L195.8 395 L194.9 398.9 L194 402.8 L193.2 406.6 L192.4 410.6 L191.7 414.5 L191.1 418.4 L190.5 422.4 L190 426.3 L189.6 430.3 L189.2 434.3 L188.8 438.2 L188.6 442.2 L188.4 446.2 L188.2 450.2 L188.1 454.2 L188.1 458.2 L188.2 462.2 L188.3 466.2 L188.5 470.2 L188.7 474.2 L189 478.2 L189.3 482.2 L189.8 486.2 L190.2 490.2 L190.8 494.1 L191.4 498.1 L192.1 502 L192.8 505.9 L193.6 509.9 L194.4 513.8 L195.3 517.6 L196.3 521.5 L197.3 525.3 L198.4 529.2 L199.6 533 L200.8 536.7 L202.1 540.5 L203.4 544.2 L204.8 547.9 L206.2 551.6 L207.7 555.3 L209.3 558.9 L210.9 562.5 L212.5 566 L214.3 569.6 L216 573 L217.9 576.5 L219.8 579.9 L221.7 583.3 L223.7 586.7 L225.7 590 L227.8 593.2 L230 596.5 L232.1 599.6 L234.4 602.8 L236.7 605.9 L239 608.9 L241.4 612 L243.8 614.9 L246.3 617.8 L248.8 620.7 L251.4 623.5 L254 626.3 L256.6 629 L259.3 631.7 L262.1 634.3 L264.8 636.8 L267.7 639.3 L270.5 641.8 L273.4 644.2 L276.3 646.5 L279.3 648.8 L282.3 651 L285.3 653.2 L288.4 655.3 L291.5 657.3 L294.6 659.3 L297.7 661.2 L300.9 663.1 L304.1 664.9 L307.4 666.6 L310.6 668.3 L313.9 669.9 L317.2 671.5 L320.6 672.9 L323.9 674.4 L327.3 675.7 L330.7 677 L334.1 678.2 L337.6 679.4 L341 680.4 L344.5 681.5 L348 682.4 L351.5 683.3 L355 684.1 L358.1 684.8M333.6 239 L330.8 239.9 L327.4 241.1 L324.1 242.4 L320.7 243.7 L317.3 245.1 L314 246.5 L310.7 248.1 L307.5 249.6 L304.2 251.3 L301 253 L297.8 254.8 L294.6 256.6 L291.5 258.5 L288.4 260.4 L285.3 262.5 L282.3 264.5 L279.3 266.7 L276.3 268.9 L273.4 271.1 L270.5 273.4 L267.6 275.8 L264.8 278.2 L262 280.7 L259.2 283.2 L256.5 285.8 L253.9 288.4 L251.2 291.1 L248.7 293.9 L246.1 296.6 L243.6 299.5 L241.2 302.4 L238.8 305.3 L236.4 308.3 L234.1 311.3 L231.8 314.4 L229.6 317.5 L227.5 320.7 L225.4 323.9 L223.3 327.1 L221.3 330.4 L219.3 333.7 L217.4 337.1 L215.6 340.5 L213.8 343.9 L212 347.4 L210.3 350.9 L208.7 354.4 L207.1 358 L205.6 361.6 L204.1 365.2 L202.7 368.9 L201.3 372.6 L200 376.3 L198.8 380 L197.6 383.8 L196.5 387.6 L195.4 391.4 L194.4 395.2 L193.5 399.1 L192.6 402.9 L191.8 406.8 L191 410.7 L190.3 414.6 L189.7 418.5 L189.1 422.5 L188.6 426.4 L188.2 430.4 L187.8 434.4 L187.5 438.3 L187.2 442.3 L187 446.3 L186.8 450.3 L186.8 454.3 L186.7 458.3 L186.8 462.3 L186.9 466.3 L187.1 470.3 L187.3 474.3 L187.6 478.3 L188 482.2 L188.4 486.2 L188.9 490.2 L189.4 494.1 L190 498.1 L190.7 502 L191.4 505.9 L192.2 509.8 L193 513.7 L193.9 517.6 L194.9 521.4 L195.9 525.3 L197 529.1 L198.2 532.9 L199.4 536.7 L200.6 540.4 L202 544.1 L203.4 547.8 L204.8 551.5 L206.3 555.1 L207.8 558.7 L209.4 562.3 L211.1 565.9 L212.8 569.4 L214.6 572.9 L216.4 576.3 L218.3 579.7 L220.2 583.1 L222.2 586.5 L224.3 589.8 L226.4 593 L228.5 596.3 L230.7 599.4 L232.9 602.6 L235.2 605.7 L237.5 608.7 L239.9 611.7 L242.3 614.7 L244.8 617.6 L247.3 620.4 L249.9 623.2 L252.5 626 L255.1 628.7 L257.8 631.4 L260.5 634 L263.3 636.5 L266.1 639 L269 641.5 L271.8 643.9 L274.8 646.2 L277.7 648.5 L280.7 650.7 L283.7 652.9 L286.8 655 L289.9 657 L293 659 L296.1 660.9 L299.3 662.8 L302.5 664.5 L305.7 666.3 L309 668 L312.3 669.6 L315.6 671.1 L318.9 672.6 L322.3 674 L325.7 675.3 L329 676.6 L332.5 677.8 L335.9 679 L339.3 680.1 L342.8 681.1 L346.3 682 L349.1 682.7M324.8 242.1 L322.4 242.9 L319.1 244.3 L315.7 245.6 L312.4 247.1 L309.1 248.6 L305.9 250.2 L302.6 251.8 L299.4 253.5 L296.2 255.3 L293.1 257.1 L289.9 259 L286.9 261 L283.8 263 L280.8 265 L277.8 267.2 L274.8 269.4 L271.9 271.6 L269 273.9 L266.1 276.3 L263.3 278.7 L260.5 281.2 L257.8 283.7 L255.1 286.3 L252.4 288.9 L249.8 291.6 L247.2 294.3 L244.7 297.1 L242.2 299.9 L239.7 302.8 L237.3 305.7 L235 308.7 L232.7 311.7 L230.4 314.8 L228.2 317.9 L226.1 321.1 L224 324.3 L221.9 327.5 L219.9 330.8 L217.9 334.1 L216 337.4 L214.2 340.8 L212.4 344.3 L210.6 347.7 L208.9 351.2 L207.3 354.7 L205.7 358.3 L204.2 361.9 L202.7 365.5 L201.3 369.2 L200 372.9 L198.7 376.6 L197.5 380.3 L196.3 384 L195.2 387.8 L194.1 391.6 L193.1 395.4 L192.2 399.3 L191.3 403.1 L190.5 407 L189.7 410.9 L189 414.8 L188.4 418.7 L187.8 422.6 L187.3 426.6 L186.8 430.5 L186.5 434.5 L186.1 438.5 L185.9 442.4 L185.7 446.4 L185.5 450.4 L185.4 454.4 L185.4 458.4 L185.5 462.3 L185.6 466.3 L185.8 470.3 L186 474.3 L186.3 478.3 L186.6 482.2 L187.1 486.2 L187.5 490.2 L188.1 494.1 L188.7 498 L189.3 502 L190.1 505.9 L190.9 509.8 L191.7 513.6 L192.6 517.5 L193.6 521.4 L194.6 525.2 L195.7 529 L196.8 532.8 L198 536.5 L199.3 540.3 L200.6 544 L202 547.7 L203.4 551.3 L204.9 555 L206.5 558.6 L208.1 562.2 L209.7 565.7 L211.5 569.2 L213.2 572.7 L215 576.1 L216.9 579.5 L218.8 582.9 L220.8 586.2 L222.9 589.5 L224.9 592.8 L227.1 596 L229.3 599.2 L231.5 602.3 L233.8 605.4 L236.1 608.4 L238.5 611.4 L240.9 614.4 L243.4 617.3 L245.9 620.1 L248.4 622.9 L251 625.7 L253.7 628.4 L256.3 631 L259.1 633.6 L261.8 636.2 L264.6 638.7 L267.5 641.1 L270.3 643.5 L273.2 645.8 L276.2 648.1 L279.2 650.3 L282.2 652.5 L285.2 654.6 L288.3 656.6 L291.4 658.6 L294.6 660.5 L297.7 662.3 L300.9 664.1 L304.2 665.9 L307.4 667.5 L310.7 669.1 L314 670.7 L317.3 672.2 L320.6 673.6 L324 674.9 L327.4 676.2 L330.8 677.4 L334.2 678.5 L337.7 679.6 L340.1 680.3M316 245.5 L314.1 246.3 L310.8 247.7 L307.6 249.2 L304.3 250.8 L301.1 252.4 L297.9 254.1 L294.7 255.9 L291.5 257.7 L288.4 259.6 L285.3 261.5 L282.3 263.5 L279.3 265.6 L276.3 267.7 L273.3 269.9 L270.4 272.2 L267.5 274.5 L264.6 276.8 L261.8 279.2 L259.1 281.7 L256.3 284.2 L253.6 286.8 L251 289.4 L248.4 292.1 L245.8 294.8 L243.3 297.6 L240.8 300.4 L238.3 303.3 L236 306.2 L233.6 309.2 L231.3 312.2 L229.1 315.2 L226.9 318.3 L224.7 321.5 L222.6 324.7 L220.5 327.9 L218.5 331.2 L216.6 334.5 L214.7 337.8 L212.9 341.2 L211.1 344.6 L209.3 348.1 L207.6 351.6 L206 355.1 L204.4 358.6 L202.9 362.2 L201.5 365.8 L200 369.5 L198.7 373.1 L197.4 376.8 L196.2 380.6 L195 384.3 L193.9 388.1 L192.8 391.8 L191.8 395.7 L190.9 399.5 L190 403.3 L189.2 407.2 L188.5 411.1 L187.8 415 L187.1 418.9 L186.6 422.8 L186 426.7 L185.6 430.7 L185.2 434.6 L184.9 438.6 L184.6 442.5 L184.4 446.5 L184.3 450.5 L184.2 454.4 L184.2 458.4 L184.2 462.4 L184.3 466.4 L184.5 470.3 L184.7 474.3 L185 478.3 L185.4 482.2 L185.8 486.2 L186.3 490.1 L186.8 494.1 L187.4 498 L188.1 501.9 L188.8 505.8 L189.6 509.7 L190.4 513.6 L191.3 517.4 L192.3 521.3 L193.3 525.1 L194.4 528.9 L195.6 532.6 L196.8 536.4 L198 540.1 L199.3 543.8 L200.7 547.5 L202.1 551.2 L203.6 554.8 L205.2 558.4 L206.8 561.9 L208.4 565.5 L210.1 569 L211.9 572.5 L213.7 575.9 L215.6 579.3 L217.5 582.6 L219.5 586 L221.5 589.3 L223.6 592.5 L225.7 595.7 L227.9 598.9 L230.1 602 L232.4 605.1 L234.7 608.1 L237.1 611.1 L239.5 614 L242 616.9 L244.5 619.8 L247 622.6 L249.6 625.3 L252.2 628 L254.9 630.7 L257.6 633.3 L260.4 635.8 L263.2 638.3 L266 640.7 L268.9 643.1 L271.8 645.4 L274.7 647.7 L277.7 649.9 L280.7 652 L283.7 654.1 L286.8 656.2 L289.9 658.1 L293 660 L296.2 661.9 L299.4 663.7 L302.6 665.4 L305.8 667.1 L309.1 668.7 L312.4 670.2 L315.7 671.7 L319 673.1 L322.4 674.4 L325.8 675.7 L329.2 676.9 L331.1 677.5M307.3 249.3 L306 249.9 L302.8 251.5 L299.5 253.1 L296.4 254.8 L293.2 256.5 L290 258.4 L286.9 260.2 L283.9 262.2 L280.8 264.2 L277.8 266.2 L274.8 268.4 L271.9 270.5 L268.9 272.8 L266.1 275.1 L263.2 277.4 L260.4 279.8 L257.7 282.3 L254.9 284.8 L252.2 287.3 L249.6 289.9 L247 292.6 L244.4 295.3 L241.9 298.1 L239.4 300.9 L237 303.8 L234.6 306.7 L232.3 309.7 L230 312.7 L227.7 315.7 L225.6 318.8 L223.4 321.9 L221.3 325.1 L219.3 328.3 L217.3 331.6 L215.3 334.9 L213.4 338.2 L211.6 341.6 L209.8 345 L208.1 348.5 L206.4 351.9 L204.8 355.4 L203.2 359 L201.7 362.6 L200.2 366.2 L198.8 369.8 L197.5 373.5 L196.2 377.1 L195 380.8 L193.8 384.6 L192.7 388.3 L191.6 392.1 L190.6 395.9 L189.7 399.7 L188.8 403.6 L188 407.4 L187.3 411.3 L186.6 415.2 L185.9 419.1 L185.4 423 L184.9 426.9 L184.4 430.8 L184 434.7 L183.7 438.7 L183.4 442.6 L183.2 446.6 L183.1 450.6 L183 454.5 L183 458.5 L183 462.5 L183.1 466.4 L183.3 470.4 L183.6 474.3 L183.8 478.3 L184.2 482.2 L184.6 486.2 L185.1 490.1 L185.6 494 L186.2 497.9 L186.9 501.8 L187.6 505.7 L188.4 509.6 L189.2 513.5 L190.1 517.3 L191.1 521.1 L192.1 524.9 L193.2 528.7 L194.3 532.5 L195.5 536.2 L196.8 540 L198.1 543.6 L199.5 547.3 L200.9 551 L202.4 554.6 L203.9 558.2 L205.5 561.7 L207.2 565.2 L208.9 568.7 L210.6 572.2 L212.4 575.6 L214.3 579 L216.2 582.3 L218.2 585.7 L220.2 588.9 L222.3 592.2 L224.4 595.4 L226.6 598.5 L228.8 601.6 L231.1 604.7 L233.4 607.7 L235.7 610.7 L238.2 613.6 L240.6 616.5 L243.1 619.4 L245.6 622.2 L248.2 624.9 L250.8 627.6 L253.5 630.2 L256.2 632.8 L259 635.3 L261.7 637.8 L264.6 640.2 L267.4 642.6 L270.3 644.9 L273.3 647.2 L276.2 649.4 L279.2 651.5 L282.2 653.6 L285.3 655.6 L288.4 657.6 L291.5 659.5 L294.7 661.4 L297.9 663.1 L301.1 664.9 L304.3 666.5 L307.6 668.1 L310.8 669.6 L314.1 671.1 L317.5 672.5 L320.8 673.8 L322.1 674.3M298.6 253.6 L294.9 255.5 L291.7 257.3 L288.6 259.1 L285.5 260.9 L282.4 262.9 L279.4 264.9 L276.4 266.9 L273.4 269 L270.5 271.2 L267.6 273.4 L264.7 275.7 L261.9 278 L259.1 280.4 L256.3 282.9 L253.6 285.4 L250.9 287.9 L248.3 290.6 L245.7 293.2 L243.1 295.9 L240.6 298.7 L238.1 301.5 L235.7 304.4 L233.3 307.3 L231 310.2 L228.7 313.2 L226.5 316.2 L224.3 319.3 L222.2 322.4 L220.1 325.6 L218 328.8 L216 332.1 L214.1 335.4 L212.2 338.7 L210.4 342.1 L208.6 345.4 L206.9 348.9 L205.2 352.3 L203.6 355.8 L202 359.4 L200.5 362.9 L199 366.5 L197.7 370.1 L196.3 373.8 L195 377.5 L193.8 381.2 L192.6 384.9 L191.5 388.6 L190.5 392.4 L189.5 396.2 L188.6 400 L187.7 403.8 L186.9 407.6 L186.1 411.5 L185.4 415.4 L184.8 419.2 L184.2 423.1 L183.7 427 L183.3 431 L182.9 434.9 L182.6 438.8 L182.3 442.8 L182.1 446.7 L182 450.6 L181.9 454.6 L181.9 458.6 L181.9 462.5 L182 466.5 L182.2 470.4 L182.4 474.3 L182.7 478.3 L183.1 482.2 L183.5 486.2 L184 490.1 L184.5 494 L185.1 497.9 L185.8 501.8 L186.5 505.6 L187.3 509.5 L188.1 513.4 L189 517.2 L190 521 L191 524.8 L192.1 528.6 L193.2 532.3 L194.4 536 L195.6 539.8 L196.9 543.4 L198.3 547.1 L199.7 550.7 L201.2 554.3 L202.7 557.9 L204.3 561.4 L206 565 L207.7 568.4 L209.4 571.9 L211.2 575.3 L213.1 578.7 L215 582 L217 585.3 L219 588.6 L221.1 591.8 L223.2 595 L225.3 598.1 L227.5 601.2 L229.8 604.3 L232.1 607.3 L234.5 610.3 L236.9 613.2 L239.3 616.1 L241.8 618.9 L244.3 621.7 L246.9 624.4 L249.5 627.1 L252.2 629.7 L254.9 632.3 L257.6 634.8 L260.4 637.3 L263.2 639.7 L266 642.1 L268.9 644.4 L271.8 646.6 L274.8 648.8 L277.8 651 L280.8 653 L283.9 655.1 L286.9 657 L290.1 658.9 L293.2 660.8 L296.4 662.5 L299.6 664.3 L302.8 665.9 L306 667.5 L309.3 669 L312.6 670.5M289.9 258.2 L287.2 259.8 L284.1 261.7 L281 263.6 L278 265.6 L275 267.7 L272 269.8 L269.1 271.9 L266.2 274.1 L263.3 276.4 L260.5 278.8 L257.7 281.1 L255 283.6 L252.3 286.1 L249.6 288.6 L247 291.2 L244.4 293.9 L241.9 296.6 L239.4 299.3 L236.9 302.1 L234.5 305 L232.1 307.9 L229.8 310.8 L227.5 313.8 L225.3 316.8 L223.1 319.9 L221 323 L218.9 326.2 L216.9 329.4 L214.9 332.6 L212.9 335.9 L211.1 339.2 L209.2 342.5 L207.5 345.9 L205.7 349.3 L204.1 352.8 L202.5 356.3 L200.9 359.8 L199.4 363.3 L197.9 366.9 L196.6 370.5 L195.2 374.2 L193.9 377.8 L192.7 381.5 L191.6 385.2 L190.5 388.9 L189.4 392.7 L188.4 396.5 L187.5 400.2 L186.6 404.1 L185.8 407.9 L185.1 411.7 L184.4 415.6 L183.8 419.4 L183.2 423.3 L182.7 427.2 L182.2 431.1 L181.9 435 L181.5 439 L181.3 442.9 L181.1 446.8 L180.9 450.7 L180.8 454.7 L180.8 458.6 L180.9 462.6 L181 466.5 L181.2 470.4 L181.4 474.4 L181.7 478.3 L182 482.2 L182.4 486.1 L182.9 490 L183.4 493.9 L184 497.8 L184.7 501.7 L185.4 505.5 L186.2 509.4 L187 513.2 L187.9 517 L188.9 520.8 L189.9 524.6 L191 528.4 L192.1 532.1 L193.3 535.8 L194.5 539.5 L195.8 543.2 L197.2 546.8 L198.6 550.5 L200.1 554 L201.6 557.6 L203.2 561.1 L204.8 564.6 L206.5 568.1 L208.3 571.5 L210.1 574.9 L211.9 578.3 L213.8 581.6 L215.8 584.9 L217.8 588.2 L219.9 591.4 L222 594.6 L224.1 597.7 L226.3 600.8 L228.6 603.8 L230.9 606.8 L233.2 609.8 L235.6 612.7 L238.1 615.6 L240.5 618.4 L243.1 621.2 L245.6 623.9 L248.2 626.6 L250.9 629.2 L253.6 631.8 L256.3 634.3 L259.1 636.7 L261.9 639.1 L264.7 641.5 L267.6 643.8 L270.5 646 L273.4 648.2 L276.4 650.4 L279.4 652.4 L282.5 654.4 L285.5 656.4 L288.6 658.3 L291.8 660.1 L294.9 661.9 L298.1 663.6 L301.3 665.2 L304.2 666.6M281.3 263.4 L279.6 264.4 L276.6 266.4 L273.6 268.5 L270.7 270.6 L267.8 272.7 L264.9 274.9 L262 277.2 L259.2 279.5 L256.5 281.9 L253.7 284.3 L251 286.8 L248.4 289.3 L245.7 291.9 L243.2 294.6 L240.6 297.3 L238.1 300 L235.7 302.8 L233.3 305.6 L230.9 308.5 L228.6 311.4 L226.4 314.4 L224.1 317.4 L222 320.5 L219.8 323.6 L217.8 326.7 L215.7 329.9 L213.8 333.1 L211.8 336.4 L210 339.7 L208.1 343 L206.4 346.4 L204.7 349.8 L203 353.3 L201.4 356.7 L199.8 360.2 L198.3 363.8 L196.9 367.3 L195.5 370.9 L194.2 374.5 L192.9 378.2 L191.7 381.9 L190.5 385.6 L189.4 389.3 L188.4 393 L187.4 396.8 L186.5 400.5 L185.6 404.3 L184.8 408.1 L184.1 412 L183.4 415.8 L182.8 419.7 L182.2 423.5 L181.7 427.4 L181.3 431.3 L180.9 435.2 L180.5 439.1 L180.3 443 L180.1 446.9 L179.9 450.8 L179.9 454.8 L179.9 458.7 L179.9 462.6 L180 466.5 L180.2 470.4 L180.4 474.4 L180.7 478.3 L181 482.2 L181.5 486.1 L181.9 490 L182.5 493.9 L183.1 497.7 L183.7 501.6 L184.4 505.4 L185.2 509.3 L186 513.1 L186.9 516.9 L187.9 520.7 L188.9 524.4 L189.9 528.2 L191.1 531.9 L192.3 535.6 L193.5 539.3 L194.8 542.9 L196.2 546.6 L197.6 550.2 L199 553.7 L200.6 557.3 L202.1 560.8 L203.8 564.3 L205.5 567.8 L207.2 571.2 L209 574.6 L210.8 577.9 L212.7 581.2 L214.7 584.5 L216.7 587.7 L218.7 590.9 L220.8 594.1 L223 597.2 L225.2 600.3 L227.4 603.3 L229.7 606.3 L232 609.3 L234.4 612.2 L236.8 615 L239.3 617.9 L241.8 620.6 L244.4 623.3 L247 626 L249.6 628.6 L252.3 631.2 L255 633.7 L257.8 636.1 L260.6 638.5 L263.4 640.9 L266.3 643.1 L269.2 645.4 L272.1 647.6 L275.1 649.7 L278.1 651.7 L281.1 653.7 L284.1 655.7 L287.2 657.6 L290.4 659.4 L293.5 661.2 L295.2 662.1M272.8 269 L269.4 271.4 L266.5 273.6 L263.6 275.8 L260.8 278 L258 280.3 L255.2 282.7 L252.5 285.1 L249.8 287.6 L247.2 290.1 L244.6 292.7 L242 295.3 L239.5 298 L237 300.7 L234.6 303.5 L232.2 306.3 L229.8 309.2 L227.5 312.1 L225.2 315.1 L223 318.1 L220.9 321.1 L218.8 324.2 L216.7 327.3 L214.7 330.5 L212.7 333.7 L210.8 337 L208.9 340.3 L207.1 343.6 L205.3 346.9 L203.6 350.3 L202 353.8 L200.4 357.2 L198.8 360.7 L197.3 364.2 L195.9 367.8 L194.5 371.4 L193.2 375 L191.9 378.6 L190.7 382.2 L189.6 385.9 L188.5 389.6 L187.4 393.3 L186.5 397.1 L185.5 400.8 L184.7 404.6 L183.9 408.4 L183.1 412.2 L182.5 416.1 L181.8 419.9 L181.3 423.7 L180.8 427.6 L180.3 431.5 L180 435.4 L179.6 439.2 L179.4 443.1 L179.2 447 L179 450.9 L179 454.8 L178.9 458.7 L179 462.7 L179.1 466.6 L179.3 470.5 L179.5 474.4 L179.8 478.3 L180.1 482.1 L180.5 486 L181 489.9 L181.5 493.8 L182.1 497.6 L182.8 501.5 L183.5 505.3 L184.3 509.1 L185.1 512.9 L186 516.7 L186.9 520.5 L187.9 524.2 L189 527.9 L190.1 531.7 L191.3 535.3 L192.5 539 L193.8 542.6 L195.2 546.3 L196.6 549.9 L198 553.4 L199.6 556.9 L201.1 560.4 L202.8 563.9 L204.4 567.4 L206.2 570.8 L208 574.1 L209.8 577.5 L211.7 580.8 L213.6 584 L215.6 587.3 L217.7 590.5 L219.7 593.6 L221.9 596.7 L224.1 599.8 L226.3 602.8 L228.6 605.8 L230.9 608.7 L233.3 611.6 L235.7 614.5 L238.2 617.3 L240.7 620 L243.2 622.7 L245.8 625.3 L248.4 627.9 L251.1 630.5 L253.8 633 L256.5 635.4 L259.3 637.8 L262.1 640.2 L265 642.4 L267.9 644.7 L270.8 646.8 L273.7 648.9 L276.7 651 L279.7 653 L282.8 654.9 L285.9 656.8M264.3 275.2 L262.4 276.6 L259.6 278.9 L256.8 281.2 L254 283.5 L251.3 286 L248.7 288.4 L246 290.9 L243.4 293.5 L240.9 296.1 L238.4 298.8 L235.9 301.5 L233.5 304.3 L231.1 307.1 L228.7 309.9 L226.4 312.8 L224.2 315.8 L222 318.8 L219.8 321.8 L217.7 324.9 L215.7 328 L213.7 331.2 L211.7 334.4 L209.8 337.6 L207.9 340.9 L206.1 344.2 L204.4 347.5 L202.7 350.9 L201 354.3 L199.4 357.7 L197.9 361.2 L196.4 364.7 L195 368.3 L193.6 371.8 L192.3 375.4 L191 379 L189.8 382.7 L188.7 386.3 L187.6 390 L186.6 393.7 L185.6 397.4 L184.7 401.2 L183.8 404.9 L183 408.7 L182.3 412.5 L181.6 416.3 L181 420.1 L180.4 424 L179.9 427.8 L179.5 431.7 L179.1 435.5 L178.8 439.4 L178.5 443.3 L178.3 447.2 L178.2 451 L178.1 454.9 L178.1 458.8 L178.1 462.7 L178.2 466.6 L178.4 470.5 L178.6 474.4 L178.9 478.2 L179.3 482.1 L179.7 486 L180.2 489.8 L180.7 493.7 L181.3 497.5 L181.9 501.3 L182.6 505.2 L183.4 509 L184.2 512.7 L185.1 516.5 L186 520.3 L187 524 L188.1 527.7 L189.2 531.4 L190.4 535.1 L191.6 538.7 L192.9 542.3 L194.3 545.9 L195.7 549.5 L197.1 553.1 L198.6 556.6 L200.2 560.1 L201.8 563.5 L203.5 566.9 L205.2 570.3 L207 573.7 L208.8 577 L210.7 580.3 L212.6 583.5 L214.6 586.8 L216.6 589.9 L218.7 593.1 L220.9 596.2 L223 599.2 L225.3 602.2 L227.5 605.2 L229.8 608.1 L232.2 611 L234.6 613.8 L237 616.6 L239.5 619.3 L242.1 622 L244.6 624.7 L247.3 627.3 L249.9 629.8 L252.6 632.3 L255.3 634.7 L258.1 637.1 L260.9 639.4 L263.8 641.7 L266.6 643.9 L269.5 646 L272.5 648.2 L275.4 650.2 L277.4 651.5M255.8 282 L252.9 284.5 L250.2 286.9 L247.5 289.3 L244.9 291.8 L242.3 294.4 L239.8 297 L237.3 299.6 L234.8 302.3 L232.4 305.1 L230 307.9 L227.7 310.7 L225.4 313.6 L223.2 316.5 L221 319.5 L218.9 322.5 L216.8 325.6 L214.7 328.7 L212.7 331.8 L210.8 335 L208.9 338.2 L207 341.5 L205.2 344.8 L203.5 348.1 L201.8 351.5 L200.2 354.9 L198.6 358.3 L197 361.8 L195.6 365.2 L194.1 368.8 L192.8 372.3 L191.5 375.9 L190.2 379.5 L189 383.1 L187.9 386.7 L186.8 390.4 L185.8 394.1 L184.8 397.8 L183.9 401.5 L183 405.3 L182.2 409 L181.5 412.8 L180.8 416.6 L180.2 420.4 L179.6 424.2 L179.1 428 L178.7 431.9 L178.3 435.7 L178 439.6 L177.8 443.4 L177.6 447.3 L177.4 451.1 L177.3 455 L177.3 458.9 L177.4 462.7 L177.5 466.6 L177.6 470.5 L177.9 474.3 L178.2 478.2 L178.5 482.1 L178.9 485.9 L179.4 489.7 L179.9 493.6 L180.5 497.4 L181.1 501.2 L181.8 505 L182.6 508.8 L183.4 512.5 L184.3 516.3 L185.2 520 L186.2 523.7 L187.3 527.4 L188.4 531.1 L189.6 534.8 L190.8 538.4 L192.1 542 L193.4 545.6 L194.8 549.1 L196.3 552.7 L197.8 556.2 L199.3 559.6 L200.9 563.1 L202.6 566.5 L204.3 569.9 L206.1 573.2 L207.9 576.5 L209.8 579.8 L211.7 583 L213.7 586.2 L215.7 589.4 L217.8 592.5 L219.9 595.6 L222 598.6 L224.2 601.6 L226.5 604.5 L228.8 607.5 L231.2 610.3 L233.6 613.1 L236 615.9 L238.5 618.6 L241 621.3 L243.6 623.9 L246.2 626.5 L248.8 629 L251.5 631.5 L254.2 633.9 L256.9 636.3 L259.7 638.6 L262.6 640.9 L265.4 643.1 L268.3 645.2M247.5 289.3 L246.5 290.2 L243.9 292.7 L241.3 295.3 L238.8 297.9 L236.3 300.5 L233.8 303.2 L231.4 305.9 L229.1 308.7 L226.8 311.5 L224.5 314.4 L222.3 317.3 L220.1 320.3 L217.9 323.3 L215.9 326.3 L213.8 329.4 L211.8 332.6 L209.9 335.7 L208 338.9 L206.2 342.2 L204.4 345.4 L202.6 348.8 L201 352.1 L199.3 355.5 L197.8 358.9 L196.2 362.3 L194.8 365.8 L193.3 369.3 L192 372.8 L190.7 376.4 L189.4 379.9 L188.2 383.5 L187.1 387.2 L186 390.8 L185 394.5 L184 398.2 L183.1 401.9 L182.3 405.6 L181.5 409.3 L180.8 413.1 L180.1 416.9 L179.5 420.6 L178.9 424.4 L178.4 428.2 L178 432.1 L177.6 435.9 L177.3 439.7 L177 443.6 L176.8 447.4 L176.7 451.2 L176.6 455.1 L176.6 458.9 L176.7 462.8 L176.8 466.6 L176.9 470.5 L177.2 474.3 L177.4 478.2 L177.8 482 L178.2 485.8 L178.7 489.6 L179.2 493.5 L179.8 497.3 L180.4 501 L181.1 504.8 L181.9 508.6 L182.7 512.3 L183.6 516.1 L184.5 519.8 L185.5 523.5 L186.5 527.1 L187.6 530.8 L188.8 534.4 L190 538 L191.3 541.6 L192.6 545.2 L194 548.7 L195.5 552.2 L196.9 555.7 L198.5 559.2 L200.1 562.6 L201.8 566 L203.5 569.3 L205.2 572.7 L207 576 L208.9 579.2 L210.8 582.4 L212.8 585.6 L214.8 588.8 L216.8 591.9 L218.9 594.9 L221.1 597.9 L223.3 600.9 L225.5 603.9 L227.8 606.8 L230.2 609.6 L232.6 612.4 L235 615.2 L237.4 617.9 L240 620.5 L242.5 623.1 L245.1 625.7 L247.7 628.2 L250.4 630.7 L253.1 633.1 L255.8 635.4 L258.6 637.7 L259.6 638.6M239.2 297.4 L237.8 298.8 L235.3 301.4 L232.9 304.1 L230.5 306.8 L228.1 309.6 L225.8 312.4 L223.6 315.3 L221.4 318.2 L219.2 321.1 L217.1 324.1 L215 327.1 L213 330.2 L211 333.3 L209.1 336.5 L207.2 339.7 L205.4 342.9 L203.6 346.1 L201.9 349.4 L200.2 352.7 L198.6 356.1 L197 359.5 L195.5 362.9 L194 366.4 L192.6 369.8 L191.3 373.3 L190 376.9 L188.7 380.4 L187.5 384 L186.4 387.6 L185.3 391.3 L184.3 394.9 L183.4 398.6 L182.5 402.3 L181.6 406 L180.8 409.7 L180.1 413.4 L179.4 417.2 L178.8 420.9 L178.3 424.7 L177.8 428.5 L177.3 432.3 L177 436.1 L176.7 439.9 L176.4 443.7 L176.2 447.5 L176.1 451.3 L176 455.2 L176 459 L176 462.8 L176.1 466.7 L176.3 470.5 L176.5 474.3 L176.8 478.1 L177.1 481.9 L177.5 485.7 L178 489.5 L178.5 493.3 L179.1 497.1 L179.7 500.9 L180.4 504.6 L181.2 508.4 L182 512.1 L182.9 515.8 L183.8 519.5 L184.8 523.2 L185.8 526.8 L186.9 530.5 L188.1 534.1 L189.3 537.7 L190.6 541.2 L191.9 544.8 L193.3 548.3 L194.7 551.8 L196.2 555.3 L197.7 558.7 L199.3 562.1 L201 565.5 L202.7 568.8 L204.4 572.1 L206.2 575.4 L208.1 578.6 L210 581.8 L211.9 585 L213.9 588.1 L216 591.2 L218.1 594.2 L220.2 597.2 L222.4 600.2 L224.6 603.1 L226.9 606 L229.2 608.8 L231.6 611.6 L234 614.4 L236.5 617.1 L239 619.7 L241.5 622.3 L244.1 624.9 L246.7 627.3 L249.3 629.8 L250.8 631.1M230.9 306.3 L229.6 307.8 L227.3 310.5 L225 313.3 L222.7 316.2 L220.5 319.1 L218.4 322 L216.3 325 L214.2 328 L212.2 331 L210.2 334.1 L208.3 337.2 L206.5 340.4 L204.6 343.6 L202.9 346.9 L201.2 350.1 L199.5 353.4 L197.9 356.8 L196.3 360.1 L194.8 363.5 L193.4 367 L192 370.4 L190.6 373.9 L189.3 377.4 L188.1 381 L186.9 384.5 L185.8 388.1 L184.7 391.7 L183.7 395.3 L182.8 399 L181.9 402.6 L181 406.3 L180.2 410 L179.5 413.7 L178.8 417.5 L178.2 421.2 L177.7 425 L177.2 428.7 L176.8 432.5 L176.4 436.3 L176.1 440.1 L175.8 443.9 L175.6 447.7 L175.5 451.5 L175.4 455.3 L175.4 459.1 L175.5 462.9 L175.6 466.7 L175.7 470.5 L176 474.3 L176.2 478.1 L176.6 481.9 L177 485.7 L177.4 489.4 L177.9 493.2 L178.5 497 L179.2 500.7 L179.8 504.4 L180.6 508.2 L181.4 511.9 L182.3 515.5 L183.2 519.2 L184.2 522.9 L185.2 526.5 L186.3 530.1 L187.5 533.7 L188.7 537.3 L189.9 540.8 L191.2 544.4 L192.6 547.8 L194 551.3 L195.5 554.8 L197 558.2 L198.6 561.6 L200.3 564.9 L202 568.2 L203.7 571.5 L205.5 574.8 L207.3 578 L209.2 581.2 L211.2 584.3 L213.1 587.4 L215.2 590.5 L217.3 593.5 L219.4 596.5 L221.6 599.5 L223.8 602.4 L226.1 605.2 L228.4 608 L230.7 610.8 L233.1 613.5 L235.6 616.2 L238 618.8 L240.6 621.4 L242 622.8M222.8 316.1 L222 317.1 L219.8 320 L217.6 322.9 L215.5 325.9 L213.5 328.8 L211.5 331.9 L209.5 334.9 L207.6 338.1 L205.8 341.2 L204 344.4 L202.2 347.6 L200.5 350.9 L198.8 354.1 L197.2 357.5 L195.7 360.8 L194.2 364.2 L192.7 367.6 L191.4 371 L190 374.5 L188.7 378 L187.5 381.5 L186.3 385 L185.2 388.6 L184.2 392.2 L183.2 395.8 L182.2 399.4 L181.3 403.1 L180.5 406.7 L179.7 410.4 L179 414.1 L178.3 417.8 L177.7 421.5 L177.2 425.2 L176.7 429 L176.3 432.7 L175.9 436.5 L175.6 440.2 L175.3 444 L175.1 447.8 L175 451.6 L174.9 455.3 L174.9 459.1 L175 462.9 L175.1 466.7 L175.2 470.5 L175.5 474.3 L175.7 478 L176.1 481.8 L176.5 485.6 L176.9 489.3 L177.4 493.1 L178 496.8 L178.6 500.5 L179.3 504.2 L180.1 507.9 L180.9 511.6 L181.7 515.3 L182.7 518.9 L183.6 522.5 L184.7 526.2 L185.7 529.7 L186.9 533.3 L188.1 536.9 L189.3 540.4 L190.6 543.9 L192 547.4 L193.4 550.8 L194.9 554.2 L196.4 557.6 L198 561 L199.6 564.3 L201.3 567.6 L203 570.9 L204.8 574.1 L206.6 577.3 L208.5 580.5 L210.4 583.6 L212.4 586.7 L214.4 589.7 L216.5 592.8 L218.6 595.7 L220.8 598.7 L223 601.5 L225.3 604.4 L227.6 607.2 L229.9 609.9 L232.3 612.6 L233.2 613.6M214.7 326.9 L212.8 329.8 L210.8 332.8 L208.9 335.8 L207 338.9 L205.1 342 L203.3 345.2 L201.6 348.4 L199.9 351.6 L198.3 354.9 L196.7 358.2 L195.1 361.5 L193.6 364.9 L192.2 368.3 L190.8 371.7 L189.5 375.1 L188.2 378.6 L187 382.1 L185.8 385.6 L184.7 389.1 L183.7 392.7 L182.7 396.3 L181.7 399.9 L180.9 403.5 L180 407.1 L179.3 410.8 L178.5 414.4 L177.9 418.1 L177.3 421.8 L176.7 425.5 L176.3 429.2 L175.8 433 L175.5 436.7 L175.2 440.4 L174.9 444.2 L174.7 447.9 L174.6 451.7 L174.5 455.4 L174.5 459.2 L174.5 463 L174.6 466.7 L174.8 470.5 L175 474.2 L175.3 478 L175.6 481.7 L176 485.4 L176.5 489.2 L177 492.9 L177.6 496.6 L178.2 500.3 L178.9 504 L179.6 507.7 L180.4 511.3 L181.3 515 L182.2 518.6 L183.1 522.2 L184.2 525.8 L185.2 529.4 L186.4 532.9 L187.6 536.4 L188.8 539.9 L190.1 543.4 L191.5 546.9 L192.9 550.3 L194.3 553.7 L195.8 557 L197.4 560.4 L199 563.7 L200.7 567 L202.4 570.2 L204.2 573.4 L206 576.6 L207.9 579.8 L209.8 582.9 L211.7 585.9 L213.8 589 L215.8 591.9 L217.9 594.9 L220.1 597.8 L222.3 600.7 L224.4 603.4M206.8 339.2 L204.6 342.9 L202.8 346 L201.1 349.2 L199.4 352.4 L197.7 355.7 L196.2 358.9 L194.6 362.3 L193.2 365.6 L191.7 368.9 L190.4 372.3 L189 375.8 L187.8 379.2 L186.6 382.7 L185.4 386.2 L184.3 389.7 L183.3 393.2 L182.3 396.8 L181.3 400.3 L180.5 403.9 L179.6 407.5 L178.9 411.2 L178.2 414.8 L177.5 418.5 L176.9 422.1 L176.4 425.8 L175.9 429.5 L175.5 433.2 L175.1 436.9 L174.8 440.6 L174.5 444.3 L174.4 448.1 L174.2 451.8 L174.2 455.5 L174.1 459.3 L174.2 463 L174.3 466.7 L174.4 470.5 L174.7 474.2 L174.9 477.9 L175.3 481.6 L175.7 485.3 L176.1 489 L176.6 492.7 L177.2 496.4 L177.8 500.1 L178.5 503.7 L179.2 507.4 L180 511 L180.9 514.6 L181.8 518.2 L182.7 521.8 L183.7 525.4 L184.8 528.9 L185.9 532.5 L187.1 536 L188.4 539.4 L189.7 542.9 L191 546.3 L192.4 549.7 L193.8 553.1 L195.3 556.4 L196.9 559.8 L198.5 563 L200.2 566.3 L201.9 569.5 L203.6 572.7 L205.4 575.9 L207.3 579 L209.2 582.1 L211.1 585.1 L213.1 588.1 L215.2 591.1M199 353.1 L197.3 356.5 L195.7 359.7 L194.2 363 L192.7 366.3 L191.3 369.7 L190 373 L188.6 376.4 L187.4 379.8 L186.2 383.3 L185 386.7 L183.9 390.2 L182.9 393.7 L181.9 397.3 L181 400.8 L180.1 404.4 L179.3 408 L178.5 411.6 L177.8 415.2 L177.2 418.8 L176.6 422.5 L176.1 426.1 L175.6 429.8 L175.2 433.5 L174.8 437.1 L174.5 440.8 L174.3 444.5 L174.1 448.2 L173.9 451.9 L173.9 455.6 L173.9 459.3 L173.9 463 L174 466.7 L174.2 470.4 L174.4 474.1 L174.6 477.8 L175 481.5 L175.4 485.2 L175.8 488.9 L176.3 492.6 L176.9 496.2 L177.5 499.9 L178.2 503.5 L178.9 507.1 L179.7 510.7 L180.5 514.3 L181.4 517.9 L182.4 521.4 L183.4 525 L184.5 528.5 L185.6 532 L186.7 535.5 L188 538.9 L189.3 542.4 L190.6 545.8 L192 549.1 L193.4 552.5 L194.9 555.8 L196.4 559.1 L198 562.4 L199.7 565.6 L201.4 568.8 L203.1 572 L204.9 575.1 L206.8 578.2M191.3 369.6 L189.6 373.7 L188.3 377.1 L187.1 380.5 L185.9 383.9 L184.7 387.4 L183.7 390.8 L182.6 394.3 L181.6 397.8 L180.7 401.3 L179.9 404.9 L179 408.4 L178.3 412 L177.6 415.6 L177 419.2 L176.4 422.8 L175.8 426.4 L175.4 430.1 L174.9 433.7 L174.6 437.4 L174.3 441 L174 444.7 L173.9 448.4 L173.7 452 L173.7 455.7 L173.6 459.4 L173.7 463.1 L173.8 466.7 L173.9 470.4 L174.1 474.1 L174.4 477.8 L174.7 481.4 L175.1 485.1 L175.6 488.7 L176.1 492.4 L176.6 496 L177.2 499.6 L177.9 503.2 L178.6 506.8 L179.4 510.4 L180.3 514 L181.2 517.5 L182.1 521 L183.1 524.5 L184.2 528 L185.3 531.5 L186.4 535 L187.7 538.4 L188.9 541.8 L190.2 545.2 L191.6 548.5 L193.1 551.8 L194.5 555.1 L196.1 558.4 L197.6 561.6M183.8 390.1 L183.4 391.4 L182.4 394.9 L181.4 398.4 L180.5 401.9 L179.7 405.4 L178.9 408.9 L178.1 412.4 L177.4 416 L176.8 419.6 L176.2 423.2 L175.7 426.8 L175.2 430.4 L174.8 434 L174.4 437.6 L174.1 441.2 L173.9 444.9 L173.7 448.5 L173.6 452.2 L173.5 455.8 L173.5 459.5 L173.5 463.1 L173.6 466.7 L173.8 470.4 L174 474 L174.3 477.7 L174.6 481.3 L175 484.9 L175.4 488.6 L175.9 492.2 L176.5 495.8 L177.1 499.4 L177.7 502.9 L178.5 506.5 L179.2 510.1 L180.1 513.6 L180.9 517.1 L181.9 520.6 L182.9 524.1 L183.9 527.6 L185 531 L186.2 534.4 L187.4 537.8 L188.7 541.2 L189.1 542.4M176.7 419.6 L176.1 423.5 L175.6 427.1 L175.1 430.7 L174.7 434.3 L174.3 437.8 L174.1 441.4 L173.8 445.1 L173.6 448.7 L173.5 452.3 L173.4 455.9 L173.4 459.5 L173.5 463.1 L173.6 466.8 L173.7 470.4 L173.9 474 L174.2 477.6 L174.5 481.2 L174.9 484.8 L175.3 488.4 L175.8 492 L176.4 495.5 L177 499.1 L177.6 502.6 L178.3 506.2 L179.1 509.7 L179.9 513.2"/>
</g>
<path d="M450.1 232.6 L447.9 232.2 L446.2 231.9 L444.4 231.6 L442.6 231.3 L440.8 231 L439.1 230.7 L437.3 230.5 L435.5 230.3 L433.7 230.1 L431.9 229.9 L430.1 229.7 L428.4 229.5 L426.6 229.4 L424.8 229.3 L423 229.2 L421.2 229.1 L419.4 229 L417.6 229 L415.8 228.9 L414 228.9 L412.3 228.9 L410.5 228.9 L408.7 229 L406.9 229 L405.1 229.1 L403.3 229.2 L401.5 229.3 L399.7 229.4 L397.9 229.6 L396.2 229.7 L394.4 229.9 L392.6 230.1 L390.8 230.3 L389 230.5 L387.3 230.8 L385.5 231 L383.7 231.3 L382 231.6 L380.2 231.9 L378.4 232.3 L376.7 232.6 L374.9 233 L373.2 233.4 L371.4 233.8 L369.7 234.2 L367.9 234.6 L366.2 235.1 L364.4 235.5 L362.7 236 L361 236.5 L359.2 237 L357.5 237.6 L355.8 238.1 L354.1 238.7 L352.4 239.3 L350.7 239.9 L349 240.5 L347.3 241.1 L345.6 241.8 L343.9 242.5 L342.2 243.1 L340.6 243.9 L338.9 244.6 L337.2 245.3 L335.6 246.1 L333.9 246.8 L332.3 247.6 L330.7 248.4 L329 249.2 L327.4 250.1 L325.8 250.9 L324.2 251.8 L322.6 252.6 L321 253.5 L319.4 254.4 L317.8 255.4 L316.2 256.3 L314.7 257.3 L313.1 258.2 L311.6 259.2 L310 260.2 L308.5 261.2 L307 262.3 L305.4 263.3 L303.9 264.4 L302.4 265.5 L300.9 266.6 L299.5 267.7 L298 268.8 L296.5 269.9 L295.1 271.1 L293.6 272.2 L292.2 273.4 L290.7 274.6 L289.3 275.8 L287.9 277 L286.5 278.3 L285.1 279.5 L283.7 280.8 L282.4 282 L281 283.3 L279.6 284.6 L278.3 285.9 L277 287.3 L275.6 288.6 L274.3 290 L273 291.3 L271.8 292.7 L270.5 294.1 L269.2 295.5 L268 296.9 L266.7 298.4 L265.5 299.8 L264.3 301.2 L263 302.7 L261.8 304.2 L260.7 305.7 L259.5 307.2 L258.3 308.7 L257.2 310.2 L256 311.7 L254.9 313.3 L253.8 314.9 L252.7 316.4 L251.6 318 L250.5 319.6 L249.5 321.2 L248.4 322.8 L247.4 324.4 L246.3 326 L245.3 327.7 L244.3 329.3 L243.3 331 L242.4 332.7 L241.4 334.3 L240.4 336 L239.5 337.7 L238.6 339.4 L237.7 341.2 L236.8 342.9 L235.9 344.6 L235 346.4 L234.2 348.1 L233.3 349.9 L232.5 351.6 L231.7 353.4 L230.9 355.2 L230.1 357 L229.3 358.8 L228.6 360.6 L227.8 362.4 L227.1 364.2 L226.4 366.1 L225.7 367.9 L225 369.8 L224.3 371.6 L223.7 373.5 L223 375.3 L222.4 377.2 L221.8 379.1 L221.2 380.9 L220.6 382.8 L220 384.7 L219.5 386.6 L219 388.5 L218.4 390.4 L217.9 392.4 L217.4 394.3 L216.9 396.2 L216.5 398.1 L216 400.1 L215.6 402 L215.2 403.9 L214.8 405.9 L214.4 407.8 L214 409.8 L213.7 411.8 L213.3 413.7 L213 415.7 L212.7 417.7 L212.4 419.6 L212.1 421.6 L211.8 423.6 L211.6 425.6 L211.4 427.5 L211.1 429.5 L210.9 431.5 L210.7 433.5 L210.6 435.5 L210.4 437.5 L210.3 439.5 L210.2 441.5 L210 443.5 L209.9 445.5 L209.9 447.5 L209.8 449.5 L209.8 451.5 L209.7 453.5 L209.7 455.5 L209.7 457.5 L209.7 459.5 L209.8 461.5 L209.8 463.5 L209.9 465.5 L209.9 467.5 L210 469.5 L210.1 471.5 L210.3 473.5 L210.4 475.5 L210.6 477.5 L210.7 479.5 L210.9 481.5 L211.1 483.5 L211.3 485.4 L211.6 487.4 L211.8 489.4 L212.1 491.4 L212.4 493.4 L212.7 495.4 L213 497.3 L213.3 499.3 L213.6 501.3 L214 503.2 L214.4 505.2 L214.8 507.1 L215.2 509.1 L215.6 511.1 L216 513 L216.5 514.9 L216.9 516.9 L217.4 518.8 L217.9 520.7 L218.4 522.7 L218.9 524.6 L219.5 526.5 L220 528.4 L220.6 530.3 L221.2 532.2 L221.8 534.1 L222.4 536 L223 537.9 L223.6 539.7 L224.3 541.6 L225 543.5 L225.7 545.3 L226.4 547.2 L227.1 549 L227.8 550.9 L228.5 552.7 L229.3 554.5 L230.1 556.3 L230.8 558.1 L231.6 559.9 L232.5 561.7 L233.3 563.5 L234.1 565.3 L235 567 L235.8 568.8 L236.7 570.6 L237.6 572.3 L238.5 574 L239.5 575.8 L240.4 577.5 L241.3 579.2 L242.3 580.9 L243.3 582.6 L244.3 584.2 L245.3 585.9 L246.3 587.6 L247.3 589.2 L248.3 590.9 L249.4 592.5 L250.5 594.1 L251.5 595.7 L252.6 597.3 L253.7 598.9 L254.8 600.5 L256 602 L257.1 603.6 L258.3 605.1 L259.4 606.7 L260.6 608.2 L261.8 609.7 L263 611.2 L264.2 612.7 L265.4 614.2 L266.6 615.6 L267.9 617.1 L269.1 618.5 L270.4 619.9 L271.7 621.4 L273 622.8 L274.3 624.1 L275.6 625.5 L276.9 626.9 L278.2 628.2 L279.6 629.6 L280.9 630.9 L282.3 632.2 L283.7 633.5 L285 634.8 L286.4 636.1 L287.8 637.3 L289.2 638.6 L290.7 639.8 L292.1 641 L293.5 642.2 L295 643.4 L296.4 644.6 L297.9 645.8 L299.4 646.9 L300.9 648 L302.4 649.2 L303.9 650.3 L305.4 651.3 L306.9 652.4 L308.4 653.5 L309.9 654.5 L311.5 655.6 L313 656.6 L314.6 657.6 L316.2 658.6 L317.7 659.5 L319.3 660.5 L320.9 661.4 L322.5 662.3 L324.1 663.2 L325.7 664.1 L327.3 665 L328.9 665.9 L330.6 666.7 L332.2 667.6 L333.9 668.4 L335.5 669.2 L337.2 669.9 L338.8 670.7 L340.5 671.5 L342.2 672.2 L343.8 672.9 L345.5 673.6 L347.2 674.3 L348.9 675 L350.6 675.6 L352.3 676.2 L354 676.9 L355.7 677.5 L357.4 678 L359.1 678.6 L360.9 679.2 L362.6 679.7 L364.3 680.2 L366.1 680.7 L367.8 681.2 L369.6 681.7 L371.3 682.1 L373.1 682.5 L374.8 683 L376.6 683.4 L378.3 683.7 L380.1 684.1 L381.9 684.4 L383.6 684.8 L385.4 685.1 L387.2 685.4 L388.9 685.7 L390.7 685.9 L392.5 686.2 L394.3 686.4 L396.1 686.6 L397.9 686.8 L399.6 687 L401.4 687.1 L403.2 687.3 L405 687.4 L406.8 687.5 L408.6 687.6 L410.4 687.6 L412.2 687.7 L413.9 687.7 L415.7 687.7 L417.5 687.7 L419.3 687.7 L421.1 687.7 L422.9 687.6 L424.7 687.5 L426.5 687.5 L428.3 687.4 L430 687.2 L431.8 687.1 L433.6 686.9 L435.4 686.8 L437.2 686.6 L439 686.4 L440.7 686.1 L442.5 685.9 L444.3 685.6 L446.1 685.3 L447.8 685 L449.6 684.7 L451.4 684.4 L453.1 684 L454.9 683.7 L456.6 683.3 L458.4 682.9 L460.1 682.5 L461.9 682 L463.6 681.6 L465.4 681.1" fill="none" stroke="#cf9e16" stroke-width="1.9" stroke-dasharray="2 3.4"/>
<path d="M504 250.8 L502 249.8 L500.4 249.1 L498.7 248.3 L497.1 247.6 L495.5 246.9 L493.8 246.2 L492.1 245.5 L490.5 244.9 L488.8 244.2 L487.1 243.6 L485.5 243 L483.8 242.4 L482.1 241.8 L480.4 241.3 L478.7 240.7 L477 240.2 L475.3 239.7 L473.6 239.2 L471.9 238.7 L470.1 238.3 L468.4 237.8 L466.7 237.4 L465 237 L463.3 236.6 L461.5 236.3 L459.8 235.9 L458 235.6 L456.3 235.2 L454.6 234.9 L452.8 234.6 L451.1 234.4 L449.3 234.1 L447.6 233.9 L445.8 233.6 L444.1 233.4 L442.3 233.3 L440.6 233.1 L438.8 232.9 L437.1 232.8 L435.3 232.7 L433.5 232.6 L431.8 232.5 L430 232.4 L428.3 232.4 L426.5 232.3 L424.7 232.3 L423 232.3 L421.2 232.3 L419.4 232.4 L417.7 232.4 L415.9 232.5 L414.2 232.6 L412.4 232.7 L410.7 232.8 L408.9 233 L407.1 233.1 L405.4 233.3 L403.6 233.5 L401.9 233.7 L400.1 233.9 L398.4 234.1 L396.7 234.4 L394.9 234.7 L393.2 235 L391.4 235.3 L389.7 235.6 L388 235.9 L386.2 236.3 L384.5 236.7 L382.8 237.1 L381.1 237.5 L379.4 237.9 L377.6 238.4 L375.9 238.8 L374.2 239.3 L372.5 239.8 L370.8 240.3 L369.1 240.8 L367.4 241.4 L365.8 241.9 L364.1 242.5 L362.4 243.1 L360.7 243.7 L359.1 244.3 L357.4 245 L355.8 245.6 L354.1 246.3 L352.5 247 L350.8 247.7 L349.2 248.4 L347.6 249.2 L345.9 249.9 L344.3 250.7 L342.7 251.5 L341.1 252.3 L339.5 253.1 L337.9 253.9 L336.4 254.8 L334.8 255.7 L333.2 256.5 L331.6 257.4 L330.1 258.3 L328.5 259.3 L327 260.2 L325.5 261.2 L323.9 262.1 L322.4 263.1 L320.9 264.1 L319.4 265.1 L317.9 266.2 L316.4 267.2 L315 268.3 L313.5 269.3 L312 270.4 L310.6 271.5 L309.1 272.6 L307.7 273.8 L306.3 274.9 L304.9 276.1 L303.5 277.3 L302.1 278.4 L300.7 279.6 L299.3 280.9 L297.9 282.1 L296.6 283.3 L295.2 284.6 L293.9 285.8 L292.5 287.1 L291.2 288.4 L289.9 289.7 L288.6 291 L287.3 292.4 L286 293.7 L284.8 295.1 L283.5 296.4 L282.3 297.8 L281 299.2 L279.8 300.6 L278.6 302 L277.4 303.5 L276.2 304.9 L275 306.4 L273.9 307.8 L272.7 309.3 L271.6 310.8 L270.4 312.3 L269.3 313.8 L268.2 315.3 L267.1 316.8 L266 318.4 L265 319.9 L263.9 321.5 L262.8 323.1 L261.8 324.7 L260.8 326.2 L259.8 327.9 L258.8 329.5 L257.8 331.1 L256.8 332.7 L255.9 334.4 L254.9 336 L254 337.7 L253.1 339.3 L252.2 341 L251.3 342.7 L250.4 344.4 L249.5 346.1 L248.7 347.8 L247.8 349.6 L247 351.3 L246.2 353 L245.4 354.8 L244.6 356.5 L243.8 358.3 L243.1 360.1 L242.3 361.8 L241.6 363.6 L240.9 365.4 L240.2 367.2 L239.5 369 L238.8 370.8 L238.1 372.7 L237.5 374.5 L236.9 376.3 L236.2 378.2 L235.6 380 L235.1 381.8 L234.5 383.7 L233.9 385.6 L233.4 387.4 L232.9 389.3 L232.3 391.2 L231.8 393.1 L231.3 395 L230.9 396.9 L230.4 398.7 L230 400.7 L229.6 402.6 L229.1 404.5 L228.7 406.4 L228.4 408.3 L228 410.2 L227.6 412.2 L227.3 414.1 L227 416 L226.7 417.9 L226.4 419.9 L226.1 421.8 L225.9 423.8 L225.6 425.7 L225.4 427.7 L225.2 429.6 L225 431.6 L224.8 433.5 L224.6 435.5 L224.5 437.5 L224.3 439.4 L224.2 441.4 L224.1 443.3 L224 445.3 L223.9 447.3 L223.9 449.2 L223.8 451.2 L223.8 453.2 L223.8 455.1 L223.8 457.1 L223.8 459.1 L223.8 461.1 L223.9 463 L223.9 465 L224 467 L224.1 468.9 L224.2 470.9 L224.3 472.9 L224.4 474.8 L224.6 476.8 L224.8 478.7 L225 480.7 L225.2 482.7 L225.4 484.6 L225.6 486.6 L225.8 488.5 L226.1 490.5 L226.4 492.4 L226.7 494.4 L227 496.3 L227.3 498.2 L227.6 500.2 L228 502.1 L228.3 504 L228.7 506 L229.1 507.9 L229.5 509.8 L230 511.7 L230.4 513.6 L230.9 515.5 L231.3 517.4 L231.8 519.3 L232.3 521.2 L232.8 523.1 L233.4 525 L233.9 526.9 L234.5 528.8 L235 530.6 L235.6 532.5 L236.2 534.3 L236.8 536.2 L237.5 538 L238.1 539.9 L238.8 541.7 L239.4 543.5 L240.1 545.3 L240.8 547.2 L241.5 549 L242.3 550.8 L243 552.6 L243.8 554.3 L244.5 556.1 L245.3 557.9 L246.1 559.6 L246.9 561.4 L247.8 563.1 L248.6 564.9 L249.5 566.6 L250.3 568.3 L251.2 570 L252.1 571.7 L253 573.4 L253.9 575.1 L254.9 576.8 L255.8 578.5 L256.8 580.1 L257.7 581.8 L258.7 583.4 L259.7 585.1 L260.7 586.7 L261.8 588.3 L262.8 589.9 L263.8 591.5 L264.9 593.1 L266 594.6 L267.1 596.2 L268.1 597.8 L269.3 599.3 L270.4 600.8 L271.5 602.3 L272.7 603.9 L273.8 605.3 L275 606.8 L276.2 608.3 L277.3 609.8 L278.5 611.2 L279.8 612.7 L281 614.1 L282.2 615.5 L283.5 616.9 L284.7 618.3 L286 619.7 L287.3 621 L288.5 622.4 L289.8 623.7 L291.2 625.1 L292.5 626.4 L293.8 627.7 L295.1 629 L296.5 630.3 L297.8 631.5 L299.2 632.8 L300.6 634 L302 635.2 L303.4 636.4 L304.8 637.6 L306.2 638.8 L307.6 640 L309.1 641.2 L310.5 642.3 L311.9 643.4 L313.4 644.5 L314.9 645.6 L316.4 646.7 L317.8 647.8 L319.3 648.9 L320.8 649.9 L322.3 650.9 L323.9 651.9 L325.4 652.9 L326.9 653.9 L328.5 654.9 L330 655.8 L331.6 656.8 L333.1 657.7 L334.7 658.6 L336.3 659.5 L337.8 660.4 L339.4 661.2 L341 662.1 L342.6 662.9 L344.2 663.7 L345.9 664.5 L347.5 665.3 L349.1 666.1 L350.7 666.8 L352.4 667.6 L354 668.3 L355.7 669 L357.3 669.7 L359 670.4 L360.7 671 L362.3 671.7 L364 672.3 L365.7 672.9 L367.4 673.5 L369 674.1 L370.7 674.6 L372.4 675.2 L374.1 675.7 L375.8 676.2 L377.6 676.7 L379.3 677.2 L381 677.6 L382.7 678.1 L384.4 678.5 L386.1 678.9 L387.9 679.3 L389.6 679.7 L391.3 680 L393.1 680.3 L394.8 680.7 L396.6 681 L398.3 681.3 L400 681.5 L401.8 681.8 L403.5 682 L405.3 682.3 L407.1 682.5 L408.8 682.6 L410.6 682.8 L412.3 683 L414.1 683.1 L415.8 683.2 L417.6 683.3 L419.4 683.4 L421.1 683.5 L422.9 683.5 L424.6 683.6 L426.4 683.6 L428.2 683.6 L429.9 683.6 L431.7 683.5 L433.4 683.5 L435.2 683.4 L437 683.3 L438.7 683.2 L440.5 683.1 L442.2 682.9 L444 682.8 L445.7 682.6 L447.5 682.4 L449.2 682.2 L451 682 L452.7 681.8 L454.5 681.5 L456.2 681.2 L458 680.9 L459.7 680.6 L461.4 680.3 L463.2 680 L464.9 679.6 L466.6 679.2 L468.3 678.8 L470.1 678.4 L471.8 678 L473.5 677.5 L475.2 677.1 L476.9 676.6 L478.6 676.1 L480.3 675.6 L482 675.1 L483.7 674.5 L485.4 674 L487 673.4 L488.7 672.8 L490.4 672.2 L492.1 671.6 L493.7 670.9 L495.4 670.3 L497 669.6 L498.7 668.9 L500.3 668.2 L501.9 667.5 L503.6 666.7 L505.2 666 L506.8 665.2 L508.4 664.4 L510 663.6 L511.6 662.8 L513.2 662 L514.8 661.1 L516.4 660.2 L517.9 659.4" fill="none" stroke="#cf9e16" stroke-width="1.9" stroke-dasharray="4.2 6.8"/>
<path d="M557.4 286.3 L556.2 285.2 L554.8 284 L553.4 282.9 L552.1 281.7 L550.7 280.6 L549.3 279.5 L547.9 278.3 L546.5 277.2 L545.1 276.2 L543.6 275.1 L542.2 274 L540.7 273 L539.3 272 L537.8 271 L536.4 270 L534.9 269 L533.4 268 L531.9 267 L530.4 266.1 L528.9 265.2 L527.4 264.3 L525.9 263.4 L524.4 262.5 L522.8 261.6 L521.3 260.8 L519.7 259.9 L518.2 259.1 L516.6 258.3 L515.1 257.5 L513.5 256.7 L511.9 256 L510.3 255.2 L508.8 254.5 L507.2 253.8 L505.6 253.1 L504 252.4 L502.3 251.7 L500.7 251.1 L499.1 250.4 L497.5 249.8 L495.9 249.2 L494.2 248.6 L492.6 248 L491 247.5 L489.3 246.9 L487.7 246.4 L486 245.9 L484.3 245.4 L482.7 244.9 L481 244.5 L479.4 244 L477.7 243.6 L476 243.2 L474.3 242.8 L472.6 242.4 L471 242 L469.3 241.7 L467.6 241.3 L465.9 241 L464.2 240.7 L462.5 240.5 L460.8 240.2 L459.1 239.9 L457.4 239.7 L455.7 239.5 L454 239.3 L452.3 239.1 L450.6 238.9 L448.9 238.8 L447.2 238.7 L445.5 238.5 L443.8 238.4 L442 238.4 L440.3 238.3 L438.6 238.3 L436.9 238.2 L435.2 238.2 L433.5 238.2 L431.8 238.2 L430.1 238.3 L428.3 238.3 L426.6 238.4 L424.9 238.5 L423.2 238.6 L421.5 238.7 L419.8 238.8 L418.1 239 L416.4 239.1 L414.7 239.3 L413 239.5 L411.3 239.7 L409.6 240 L407.9 240.2 L406.2 240.5 L404.5 240.8 L402.8 241.1 L401.1 241.4 L399.4 241.7 L397.8 242.1 L396.1 242.4 L394.4 242.8 L392.7 243.2 L391.1 243.6 L389.4 244.1 L387.7 244.5 L386.1 245 L384.4 245.5 L382.8 246 L381.1 246.5 L379.5 247 L377.9 247.6 L376.2 248.1 L374.6 248.7 L373 249.3 L371.4 249.9 L369.7 250.5 L368.1 251.2 L366.5 251.8 L364.9 252.5 L363.3 253.2 L361.7 253.9 L360.2 254.6 L358.6 255.3 L357 256.1 L355.5 256.8 L353.9 257.6 L352.3 258.4 L350.8 259.2 L349.3 260.1 L347.7 260.9 L346.2 261.7 L344.7 262.6 L343.2 263.5 L341.7 264.4 L340.2 265.3 L338.7 266.2 L337.2 267.2 L335.7 268.2 L334.2 269.1 L332.8 270.1 L331.3 271.1 L329.9 272.1 L328.5 273.2 L327 274.2 L325.6 275.3 L324.2 276.3 L322.8 277.4 L321.4 278.5 L320 279.6 L318.6 280.8 L317.3 281.9 L315.9 283 L314.6 284.2 L313.2 285.4 L311.9 286.6 L310.6 287.8 L309.3 289 L308 290.2 L306.7 291.5 L305.4 292.7 L304.1 294 L302.8 295.3 L301.6 296.6 L300.3 297.9 L299.1 299.2 L297.9 300.5 L296.7 301.9 L295.5 303.2 L294.3 304.6 L293.1 306 L291.9 307.4 L290.8 308.8 L289.6 310.2 L288.5 311.6 L287.4 313 L286.3 314.5 L285.2 316 L284.1 317.4 L283 318.9 L281.9 320.4 L280.9 321.9 L279.8 323.4 L278.8 324.9 L277.8 326.4 L276.8 328 L275.8 329.5 L274.8 331.1 L273.8 332.7 L272.9 334.2 L271.9 335.8 L271 337.4 L270.1 339 L269.2 340.6 L268.3 342.3 L267.4 343.9 L266.5 345.5 L265.7 347.2 L264.8 348.9 L264 350.5 L263.2 352.2 L262.4 353.9 L261.6 355.6 L260.8 357.3 L260 359 L259.3 360.7 L258.6 362.4 L257.8 364.1 L257.1 365.9 L256.4 367.6 L255.7 369.4 L255.1 371.1 L254.4 372.9 L253.8 374.7 L253.1 376.4 L252.5 378.2 L251.9 380 L251.3 381.8 L250.8 383.6 L250.2 385.4 L249.7 387.2 L249.1 389 L248.6 390.8 L248.1 392.7 L247.6 394.5 L247.2 396.3 L246.7 398.2 L246.3 400 L245.8 401.9 L245.4 403.7 L245 405.6 L244.6 407.4 L244.3 409.3 L243.9 411.2 L243.6 413.1 L243.2 414.9 L242.9 416.8 L242.6 418.7 L242.3 420.6 L242.1 422.5 L241.8 424.4 L241.6 426.3 L241.4 428.1 L241.2 430 L241 431.9 L240.8 433.8 L240.6 435.8 L240.5 437.7 L240.3 439.6 L240.2 441.5 L240.1 443.4 L240 445.3 L239.9 447.2 L239.9 449.1 L239.8 451 L239.8 452.9 L239.8 454.9 L239.8 456.8 L239.8 458.7 L239.8 460.6 L239.9 462.5 L239.9 464.4 L240 466.3 L240.1 468.3 L240.2 470.2 L240.3 472.1 L240.5 474 L240.6 475.9 L240.8 477.8 L240.9 479.7 L241.1 481.6 L241.3 483.5 L241.6 485.4 L241.8 487.3 L242.1 489.2 L242.3 491.1 L242.6 493 L242.9 494.9 L243.2 496.8 L243.5 498.7 L243.9 500.5 L244.2 502.4 L244.6 504.3 L245 506.1 L245.4 508 L245.8 509.9 L246.2 511.7 L246.7 513.6 L247.1 515.4 L247.6 517.3 L248.1 519.1 L248.6 521 L249.1 522.8 L249.6 524.6 L250.2 526.4 L250.7 528.2 L251.3 530.1 L251.9 531.9 L252.5 533.7 L253.1 535.4 L253.7 537.2 L254.4 539 L255 540.8 L255.7 542.6 L256.4 544.3 L257.1 546.1 L257.8 547.8 L258.5 549.6 L259.3 551.3 L260 553 L260.8 554.7 L261.5 556.5 L262.3 558.2 L263.1 559.9 L264 561.6 L264.8 563.2 L265.6 564.9 L266.5 566.6 L267.3 568.2 L268.2 569.9 L269.1 571.5 L270 573.2 L271 574.8 L271.9 576.4 L272.8 578 L273.8 579.6 L274.8 581.2 L275.7 582.8 L276.7 584.3 L277.7 585.9 L278.8 587.4 L279.8 589 L280.8 590.5 L281.9 592 L282.9 593.5 L284 595 L285.1 596.5 L286.2 598 L287.3 599.4 L288.4 600.9 L289.6 602.3 L290.7 603.8 L291.9 605.2 L293.1 606.6 L294.2 608 L295.4 609.4 L296.6 610.8 L297.8 612.1 L299.1 613.5 L300.3 614.8 L301.5 616.2 L302.8 617.5 L304 618.8 L305.3 620.1 L306.6 621.4 L307.9 622.6 L309.2 623.9 L310.5 625.1 L311.8 626.4 L313.1 627.6 L314.5 628.8 L315.8 630 L317.2 631.1 L318.6 632.3 L319.9 633.5 L321.3 634.6 L322.7 635.7 L324.1 636.8 L325.5 637.9 L327 639 L328.4 640.1 L329.8 641.1 L331.3 642.2 L332.7 643.2 L334.2 644.2 L335.6 645.2 L337.1 646.2 L338.6 647.2 L340.1 648.1 L341.6 649.1 L343.1 650 L344.6 650.9 L346.1 651.8 L347.6 652.7 L349.2 653.6 L350.7 654.4 L352.3 655.2 L353.8 656.1 L355.4 656.9 L356.9 657.7 L358.5 658.4 L360.1 659.2 L361.7 660 L363.2 660.7 L364.8 661.4 L366.4 662.1 L368 662.8 L369.7 663.5 L371.3 664.1 L372.9 664.8 L374.5 665.4 L376.1 666 L377.8 666.6 L379.4 667.1 L381.1 667.7 L382.7 668.2 L384.3 668.8 L386 669.3 L387.7 669.8 L389.3 670.3 L391 670.7 L392.7 671.2 L394.3 671.6 L396 672 L397.7 672.4 L399.4 672.8 L401 673.1 L402.7 673.5 L404.4 673.8 L406.1 674.1 L407.8 674.4 L409.5 674.7 L411.2 675 L412.9 675.2 L414.6 675.5 L416.3 675.7 L418 675.9 L419.7 676.1 L421.4 676.2 L423.1 676.4 L424.8 676.5 L426.5 676.6 L428.3 676.7 L430 676.8 L431.7 676.9 L433.4 676.9 L435.1 677 L436.8 677 L438.5 677 L440.2 676.9 L441.9 676.9 L443.7 676.9 L445.4 676.8 L447.1 676.7 L448.8 676.6 L450.5 676.5 L452.2 676.4 L453.9 676.2 L455.6 676 L457.3 675.8 L459 675.6 L460.7 675.4 L462.4 675.2 L464.1 674.9 L465.8 674.7 L467.5 674.4 L469.2 674.1 L470.9 673.8 L472.6 673.4 L474.2 673.1 L475.9 672.7 L477.6 672.3 L479.3 671.9 L480.9 671.5 L482.6 671.1 L484.3 670.6 L485.9 670.2 L487.6 669.7 L489.2 669.2 L490.9 668.7 L492.5 668.2 L494.1 667.6 L495.8 667.1 L497.4 666.5 L499 665.9 L500.6 665.3 L502.3 664.7 L503.9 664 L505.5 663.4 L507.1 662.7 L508.7 662 L510.3 661.3 L511.8 660.6 L513.4 659.8 L515 659.1 L516.5 658.3 L518.1 657.5 L519.7 656.8 L521.2 655.9 L522.7 655.1 L524.3 654.3 L525.8 653.4 L527.3 652.6 L528.8 651.7 L530.3 650.8 L531.8 649.9 L533.3 648.9 L534.8 648 L536.3 647 L537.8 646 L539.2 645.1 L540.7 644.1 L542.1 643 L543.5 642 L545 641 L546.4 639.9 L547.8 638.8 L549.2 637.8 L550.6 636.7 L552 635.5 L553.4 634.4 L554.7 633.3 L556.1 632.1 L557.4 631 L558.8 629.8 L560.1 628.6 L561.4 627.4 L562.7 626.2 L564 624.9 L565.3 623.7 L566.6 622.4 L567.9 621.2 L569 620" fill="none" stroke="#cf9e16" stroke-width="1.7" stroke-dasharray="1.8 16.6"/>
<path d="M409.5 228.1 L407.8 228 L406 228 L404.2 228 L402.4 228 L400.6 228.1 L398.8 228.1 L397 228.2 L395.2 228.3 L393.4 228.4 L391.6 228.5 L389.8 228.7 L388 228.8 L386.2 229 L384.4 229.2 L382.6 229.4 L380.8 229.6 L379 229.9 L377.3 230.1 L375.5 230.4 L373.7 230.7 L371.9 231 L370.2 231.4 L368.4 231.7 L366.6 232.1 L364.9 232.5 L363.1 232.9 L361.3 233.3 L359.6 233.7 L357.8 234.2 L356.1 234.7 L354.3 235.1 L352.6 235.7 L350.9 236.2 L349.1 236.7 L347.4 237.3 L345.7 237.8 L344 238.4 L342.3 239 L340.6 239.7 L338.9 240.3 L337.2 241 L335.5 241.6 L333.8 242.3 L332.1 243 L330.4 243.7 L328.8 244.5 L327.1 245.2 L325.4 246 L323.8 246.8 L322.1 247.6 L320.5 248.4 L318.9 249.3 L317.2 250.1 L315.6 251 L314 251.9 L312.4 252.8 L310.8 253.7 L309.2 254.6 L307.6 255.6 L306.1 256.5 L304.5 257.5 L302.9 258.5 L301.4 259.5 L299.9 260.5 L298.3 261.5 L296.8 262.6 L295.3 263.7 L293.8 264.8 L292.3 265.8 L290.8 267 L289.3 268.1 L287.8 269.2 L286.3 270.4 L284.9 271.6 L283.4 272.7 L282 273.9 L280.6 275.1 L279.2 276.4 L277.7 277.6 L276.3 278.9 L275 280.1 L273.6 281.4 L272.2 282.7 L270.9 284 L269.5 285.3 L268.2 286.7 L266.8 288 L265.5 289.4 L264.2 290.8 L262.9 292.1 L261.6 293.5 L260.4 295 L259.1 296.4 L257.9 297.8 L256.6 299.3 L255.4 300.7 L254.2 302.2 L253 303.7 L251.8 305.2 L250.6 306.7 L249.4 308.2 L248.3 309.7 L247.1 311.3 L246 312.8 L244.9 314.4 L243.8 316 L242.7 317.6 L241.6 319.2 L240.5 320.8 L239.4 322.4 L238.4 324 L237.4 325.6 L236.4 327.3 L235.3 329 L234.4 330.6 L233.4 332.3 L232.4 334 L231.4 335.7 L230.5 337.4 L229.6 339.1 L228.7 340.8 L227.8 342.6 L226.9 344.3 L226 346.1 L225.1 347.8 L224.3 349.6 L223.5 351.4 L222.7 353.2 L221.9 355 L221.1 356.8 L220.3 358.6 L219.5 360.4 L218.8 362.2 L218 364 L217.3 365.9 L216.6 367.7 L215.9 369.6 L215.3 371.4 L214.6 373.3 L214 375.2 L213.3 377.1 L212.7 378.9 L212.1 380.8 L211.5 382.7 L210.9 384.6 L210.4 386.5 L209.9 388.5 L209.3 390.4 L208.8 392.3 L208.3 394.2 L207.8 396.2 L207.4 398.1 L206.9 400 L206.5 402 L206.1 403.9 L205.7 405.9 L205.3 407.9 L204.9 409.8 L204.5 411.8 L204.2 413.8 L203.9 415.7 L203.5 417.7 L203.2 419.7 L203 421.7 L202.7 423.7 L202.5 425.7 L202.2 427.7 L202 429.7 L201.8 431.7 L201.6 433.7 L201.4 435.7 L201.3 437.7 L201.1 439.7 L201 441.7 L200.9 443.7 L200.8 445.7 L200.7 447.7 L200.7 449.7 L200.6 451.7 L200.6 453.7 L200.6 455.7 L200.6 457.8 L200.6 459.8 L200.6 461.8 L200.7 463.8 L200.7 465.8 L200.8 467.8 L200.9 469.8 L201 471.8 L201.1 473.8 L201.3 475.8 L201.4 477.9 L201.6 479.9 L201.8 481.9 L202 483.9 L202.2 485.9 L202.4 487.9 L202.7 489.9 L203 491.8 L203.2 493.8 L203.5 495.8 L203.8 497.8 L204.2 499.8 L204.5 501.8 L204.9 503.7 L205.2 505.7 L205.6 507.7 L206 509.6 L206.5 511.6 L206.9 513.6 L207.3 515.5 L207.8 517.5 L208.3 519.4 L208.8 521.3 L209.3 523.3 L209.8 525.2 L210.4 527.1 L210.9 529.1 L211.5 531 L212.1 532.9 L212.7 534.8 L213.3 536.7 L213.9 538.6 L214.6 540.4 L215.2 542.3 L215.9 544.2 L216.6 546.1 L217.3 547.9 L218 549.8 L218.7 551.6 L219.5 553.5 L220.2 555.3 L221 557.1 L221.8 558.9 L222.6 560.7 L223.4 562.5 L224.3 564.3 L225.1 566.1 L226 567.9 L226.8 569.7 L227.7 571.4 L228.6 573.2 L229.5 574.9 L230.5 576.6 L231.4 578.4 L232.4 580.1 L233.3 581.8 L234.3 583.5 L235.3 585.2 L236.3 586.8 L237.3 588.5 L238.3 590.2 L239.4 591.8 L240.5 593.5 L241.5 595.1 L242.6 596.7 L243.7 598.3 L244.8 599.9 L245.9 601.5 L247.1 603.1 L248.2 604.6 L249.4 606.2 L250.5 607.7 L251.7 609.2 L252.9 610.8 L254.1 612.3 L255.3 613.8 L256.5 615.2 L257.8 616.7 L259 618.2 L260.3 619.6 L261.6 621.1 L262.9 622.5 L264.1 623.9 L265.5 625.3 L266.8 626.7 L268.1 628 L269.4 629.4 L270.8 630.7 L272.1 632.1 L273.5 633.4 L274.9 634.7 L276.3 636 L277.7 637.3 L279.1 638.5 L280.5 639.8 L281.9 641 L283.4 642.3 L284.8 643.5 L286.3 644.7 L287.7 645.8 L289.2 647 L290.7 648.2 L292.2 649.3 L293.7 650.4 L295.2 651.5 L296.7 652.6 L298.2 653.7 L299.8 654.8 L301.3 655.8 L302.9 656.9 L304.4 657.9 L306 658.9 L307.6 659.9 L309.1 660.8 L310.7 661.8 L312.3 662.7 L313.9 663.7 L315.5 664.6 L317.2 665.5 L318.8 666.4 L320.4 667.2 L322.1 668.1 L323.7 668.9 L325.3 669.7 L327 670.5 L328.7 671.3 L330.3 672.1 L332 672.8 L333.7 673.6 L335.4 674.3 L337.1 675 L338.8 675.7 L340.5 676.4 L342.2 677 L343.9 677.6 L345.6 678.3 L347.3 678.9 L349 679.5 L350.8 680 L352.5 680.6 L354.2 681.1 L356 681.6 L357.7 682.1 L359.5 682.6 L361.2 683.1 L363 683.5 L364.8 684 L366.5 684.4 L368.3 684.8 L370.1 685.2 L371.8 685.5 L373.6 685.9 L375.4 686.2 L377.2 686.5 L378.9 686.8 L380.7 687.1 L382.5 687.4 L384.3 687.6 L386.1 687.8 L387.9 688.1 L389.7 688.2 L391.5 688.4 L393.3 688.6 L395.1 688.7 L396.9 688.8 L398.7 688.9 L400.5 689 L402.3 689.1 L404.1 689.1 L405.9 689.2 L407.7 689.2 L409.5 689.2 L411.3 689.2 L413.1 689.1 L414.9 689.1 L416.6 689 L418.4 688.9 L420.2 688.8 L422 688.7 L423.8 688.6 L425.6 688.4" fill="none" stroke="#f5cc14" stroke-width="2.3"/>
<circle cx="404.1" cy="458.7" r="230.7" fill="none" stroke="#b2b2b2" stroke-width="1.25"/>
<path d="M396 228.1 A230.7 230.7 0 0 0 412.2 689.3" fill="none" stroke="#f6ecec" stroke-width="1.5"/>
<path d="M289.9 357 L290.7 357.9 L291.4 358.8 L291.7 357.8 L291.9 356.8 L293.6 355.3 L295.5 353.4 L296 352.1 L296.4 350.8 L296.9 349.7 L298.1 348.3 L299.4 347 L300.6 346.3 L301.7 345.7 L303.3 345.4 L304.9 345.1 L306.4 344 L307.8 343.2 L309.1 342.3 L310.1 341.2 L311.2 340.2 L312.2 340.6 L313.1 341 L312.1 342.3 L311 342.8 L309.8 343.3 L310.4 344.3 L310.9 345.4 L309.7 347.1 L309.4 348.5 L309.1 349.9 L309.7 350.9 L310.4 351.8 L311.4 351.1 L312.4 350.4 L312.3 348.9 L312.1 347.4 L311.7 346.3 L311.3 345.3 L312.4 344.9 L313.5 344.4 L314.8 343.7 L316.1 343 L316.1 342.1 L316.1 341.2 L317.1 340.2 L317.7 341.1 L317.8 342.4 L319.1 342.3 L320.5 342.2 L321.6 342.5 L322.6 342.8 L323.3 344.1 L323.9 345 L325.8 344.6 L327.7 344.2 L329.3 344 L331 343.8 L332.1 345 L333.4 345 L334.7 345.1 L336.6 344.5 L338.1 343.5 L339.7 342.6 L341.2 342.4 L342.8 342.1 L344.2 341.9 L345.6 341.8 L347 341.7 L345.4 342.4 L344.2 342.6 L343.1 342.8 L344.2 344.1 L345.7 344.6 L346.8 344.5 L348 344.4 L349.3 345.3 L350.6 346.1 L350.9 347.7 L352.4 348.1 L353.9 348.6 L354.7 349.5 L356 350 L357.4 350.5 L358.5 351.6 L359.7 352.6 L361 354.3 L362.2 355.1 L363.5 356 L365 357.1 L366.5 357.1 L367.9 357.2 L369.4 357.2 L371 357 L372.6 356.7 L374.1 356.8 L375.7 356.8 L377.3 356.9 L378.7 357.3 L380.1 357.8 L382.1 358.9 L384.1 360.1 L385.3 360.9 L386.5 361.8 L388.4 363.2 L388.8 364.7 L389.2 366.1 L389.8 367.8 L390.4 369.4 L391.8 370.3 L393.2 371.2 L393.4 372.4 L393.6 373.5 L391.6 375.4 L390 377.3 L388.4 378.5 L387.6 379.8 L386.8 381.2 L386.2 382.3 L385.6 383.5 L386.8 383.2 L388 383 L389.6 381.5 L389.8 383.4 L390 385.3 L391.6 385.3 L393.2 385.4 L394.8 385 L396.5 384.6 L398.5 384 L399.3 383.4 L400.1 382.1 L400.9 380.8 L401.7 380.2 L402.9 380.2 L404.1 380.2 L405.5 380.6 L406.9 381.1 L408.1 381.6 L409.3 382.1 L410.7 382.7 L412.1 383.3 L413.4 384 L414.6 384.8 L415.2 386 L415.8 387.1 L416.6 387.5 L418 387.5 L419.4 387.4 L421 387.9 L422.6 388.4 L424.2 388.9 L426.2 389.1 L427.9 389.2 L429.7 389.2 L431.4 389.3 L432.6 389.6 L433.8 389.8 L435.6 390.8 L437.3 391.7 L439.3 393 L440.7 394.4 L442.1 395.8 L444 397.1 L445.2 397.9 L446.4 398.6 L447.8 398.8 L449.1 399 L450.2 399.2 L451.3 399.3 L452 400.8 L452.2 401.9 L452.6 403.3 L452.9 404.7 L453.3 406 L453.6 407.3 L453.5 409.1 L453.3 410.8 L452.8 412.5 L452.3 414.1 L451 415.5 L449.8 417 L448.4 418.5 L447 420.1 L445.7 420.9 L444.4 421.7 L443.7 422.7 L443 423.8 L442.1 425.2 L441.3 426.6 L440.5 428 L438.5 429.5 L437.6 430.7 L436.7 431.8 L436.5 433.4 L436.4 435 L436.3 436.6 L436.4 438.6 L436.5 440.6 L436.2 441.8 L435.9 443 L435.6 444.6 L435.3 446.2 L435.1 447.8 L434.1 449.6 L433 451.3 L432.8 452.8 L432.7 454.3 L432.5 455.7 L431.5 457.1 L430.5 458.5 L429.5 459.8 L428.5 461.2 L428.1 462.4 L427.6 463.6 L427.6 465.2 L426.1 465.9 L424.5 466.7 L423.7 468.7 L422.2 468.8 L420.8 468.9 L419.3 469 L417.8 469 L416.3 469.1 L415 469.7 L413.7 470.2 L412.4 471.1 L411.1 472 L409.4 472.4 L407.8 472.8 L406.5 473.8 L405.2 474.8 L403.6 476 L401.9 477.2 L400.1 478.8 L399.8 480.2 L399.4 481.6 L399.5 483.5 L399.7 485.4 L399.8 487.2 L399.6 488.6 L399.3 490 L398.8 490.8 L397.2 492.4 L395.7 494.1 L395 495.5 L394.3 496.9 L393.4 498.9 L392.4 500.9 L390.9 502.5 L389.4 504.1 L387.8 505.5 L387 507.4 L386.2 509.3 L385 510.6 L383.7 512 L383.1 513.3 L382.6 514.5 L381.3 515.3 L380.1 516.1 L378.9 516.9 L377.6 516.9 L376.2 516.9 L374.8 516.9 L373.5 516.4 L372.1 515.9 L370.7 515.7 L369.3 515.5 L368.3 514.7 L367.3 513.8 L367.5 515 L367.7 516.1 L369.3 517 L370.5 518 L371.8 519 L371.6 520.2 L371.5 521.4 L372.6 522 L373.8 522.6 L373.5 524.4 L373.2 526.3 L372.5 527.7 L371.8 529.1 L370.6 529.9 L369.4 530.8 L368.3 531.6 L367.1 532.1 L365.8 532.6 L364.6 533.1 L363.3 533.3 L362 533.5 L360.7 533.8 L359.3 533.5 L357.9 533.3 L358.5 535.1 L358.7 536.4 L359 537.8 L358.9 538.9 L358.8 540.1 L357.6 541.9 L356.4 541.7 L355.1 541.5 L353.9 541.3 L352.5 541.5 L351 541.6 L351.3 543.5 L351.5 545.4 L352.7 546 L353.8 546.6 L355 546.7 L356.2 546.8 L356.6 548.6 L355.4 548.9 L354.1 549.3 L352.6 548.7 L352.8 549.8 L353.1 550.9 L352.9 552.2 L352.8 553.5 L353.1 554.6 L353.3 555.7 L352.6 557.3 L351.6 557.8 L350.6 558.3 L349.7 559.5 L348.8 560.7 L348.9 561.8 L349 562.9 L350.3 563.9 L351.6 564.8 L352.6 564.9 L353.5 565.1 L354.5 565.2 L354.6 566.2 L354.6 567.2 L354 568.4 L353.5 569.7 L352.7 571.4 L351.9 573.1 L352.2 574.3 L352.4 575.6 L351.7 576.2 L351 576.8 L350.6 578 L350.1 579.1 L350.6 580.3 L351.2 581.6 L352.3 582.6 L353.5 583.7 L352.6 584 L351.8 584.3 L351 584.6 L350.1 585.1 L349.3 585.6 L349.1 586.6 L348.9 587.7 L349.3 589.4 L348.8 589.8 L347.5 589.3 L346.1 588.9 L344.7 588.2 L343.2 587.6 L342.2 587.1 L341.1 586.5 L340.3 586.5 L339.5 586.5 L338.4 584.9 L337.3 583.3 L336.3 581.7 L335.3 580.1 L334.3 578.4 L333.5 576.7 L332.7 575.1 L331.9 573.4 L331.1 571.7 L330.3 569.9 L329.5 568.2 L329.1 567.2 L330.4 567.1 L331.7 567.1 L331.2 565.5 L330.8 563.9 L330.4 562.2 L330 560.6 L329.9 559.2 L329.8 557.9 L329.7 556.5 L330.6 555.6 L331.5 554.6 L331.1 553.2 L330.8 551.7 L330.4 550.2 L329.9 548.8 L329.4 547.3 L327.9 546.6 L326.4 545.9 L326 544 L325.5 542.2 L326.1 541.3 L325.5 539.7 L325 538.1 L324.4 536.5 L323.8 534.9 L323.2 533.3 L322.5 531.7 L323.1 530.8 L323.7 529.9 L323.7 528.1 L323.6 526.3 L323.9 525.1 L324.2 523.9 L324.3 522.1 L324.4 520.4 L324.5 518.6 L324.4 516.7 L324.3 514.7 L324.1 512.7 L323.9 510.7 L323.3 508.8 L322.6 506.9 L322 505 L322.3 503.8 L322.6 502.7 L322 500.8 L321.4 499 L321.5 497 L321.6 494.9 L321.8 492.9 L322 490.8 L321.9 488.8 L321.9 486.8 L322 485.5 L322 484.3 L321.8 482.5 L321.6 480.7 L321.4 479 L321.2 477.3 L320.7 476.3 L320.2 475.2 L320.5 473.1 L320.9 471 L320.8 469.6 L320.6 468.1 L320.5 466.6 L320.2 465 L320 463.4 L319.6 461.9 L319.3 460.3 L318.9 458.7 L318.7 457.7 L318.5 456.7 L317.2 455.7 L315.8 454.8 L314.5 453.9 L313.2 453 L312 452.1 L310.3 451.4 L308.7 450.7 L307.1 450 L305.2 449.3 L303.3 448.5 L301.7 447.9 L300 447.2 L298.7 445.9 L297.3 444.5 L296 443.1 L295.5 442 L295.8 441.2 L294.9 439.8 L294.1 438.5 L293.2 437.2 L292.5 436.2 L291.8 435.3 L291 434 L290.3 432.8 L289.5 431.5 L288.5 429.7 L287.4 428 L286.6 426.3 L285.8 424.7 L284.8 423 L283.9 421.3 L282.8 419.9 L281.8 418.5 L280.7 417.1 L279.4 416 L278.2 414.9 L277.2 414.3 L276.3 413.8 L277 412.8 L276.3 411 L275.4 409.6 L276.1 407.9 L276.7 406.3 L278.2 404.4 L279.7 402.9 L279.9 401.5 L280.1 400.1 L278.6 401.2 L277.4 400.5 L276.2 399.8 L276.6 398.4 L277 397 L276.5 395.4 L277.3 394 L278.1 392.5 L279.3 390.5 L279.2 389.4 L279.1 388.3 L280.7 386.8 L282 386 L283.2 385.2 L283.4 384.1 L283.6 383.1 L284.7 381.3 L285.7 379.6 L286.8 379.2 L287.8 378.8 L288.5 377.3 L289.1 375.8 L289.7 374.2 L288.7 372.8 L288.6 371.4 L288.5 369.9 L288.4 368.5 L288.8 367.2 L289.3 365.8 L288.8 364.1 L288.2 363.3 L287.6 362.4 L286.7 361.4 L286.6 360.2 L286.5 359 L285.5 359 L284.5 359.1 L284 357.4 L282.7 357.5 L281.5 359 L280.5 359.8 L279.4 360.5 L280 361.5 L280.3 362.3 L280.5 363.2 L279.1 364.3 L277.4 364.9 L276.9 363.6 L275.9 363.3 L275 363 L274.1 362.7 L273.1 362.4 L272.1 362.9 L271.1 363.5 L270.3 362.4 L268.7 362.8 L268.6 361.8 L268 360.9 L267.4 360 L265.9 359.4 L265.8 358.2 L264.7 359.9 L263.8 359.4 L263 358.8 L262.7 357.5 L263.4 355.7 L262.7 354.2 L261.8 353.4 L260.9 352.7 L259.6 351.4 L259 350 L258.3 349.2 L257.2 349.7 L256.2 350.2 L254.9 350.2 L253.7 350.3 L252.5 350.3 L251.5 350.2 L250.4 350.2 L249.4 350.1 L248.4 349.8 L247.4 349.5 L246.4 349.2 L245.6 348.2 L244.8 347.3 L243.8 346.6 L242.7 345.9 L241.7 346.1 L240.7 346.3 L239.7 346.6 L238.4 347.6 L237.2 348.6 L235.9 349.6 L234.9 349.7 L233.9 349.8 L232.9 349.9 L232.1 349.7 L231.3 349.6 L230.4 349.4 L229.5 349.3 L228.7 349.1 L228 349 L227.3 348.9 L226.6 348.8 L225.9 348.5 L225.2 348.2 L224.5 347.9 L223.7 348 L222.9 348.1 L222.1 348.2 L221.6 347.4 L221.2 346.6 L220.8 345.6 L220.3 344.7 L219.9 343.7 L221.1 342.4 L221.4 341.1 L221.7 339.9 L221.8 338.8 L221.9 337.7 L222 336.5 L222.2 335.4 L221.9 334.6 L221.6 333.7 L221.4 332.9 L221.1 332.5 L220.8 332.1 L220.5 331.6 L220.2 331.2 L220.8 330.1 L221.4 329 L222 327.8 L221.9 327.1 L221.9 326.3 L222 325.5 L221.7 325.2 L221.5 324.9 L221.2 324.3 L221.7 323.1 L222.2 321.9 L222.8 320.8 L223.4 319.6 L223.1 319.1 L223 318.6 L222.1 319.8 L221.3 321.1 L221 322 L220.7 322.8 L220.4 323.7 L220.1 324.6 L219.8 325.5 L219.4 326.5 L219 327.6 L218.6 328.7 L218.3 329.8 L218 330.8 L217.7 331.8 L217.4 332.8 L217.2 333.7 L217 334.7 L216.8 335.7 L216.6 336.7 L216.6 337.7 L216.7 338.8 L216 339.7 L215.3 340.5 L215.2 339.4 L215.2 338.3 L214.9 337.9 L214.7 337.4 L214.5 336.9 L215.1 335.7 L215.7 334.4 L216.3 333.2 L215.8 332.7 L215.3 332.3 L215.3 331.5 L215.4 330.7 L216.6 329.1 L217.8 327.6 L217.8 327 L217.9 326.4 L218 325.8 L218.2 325.2 L218.6 324.2 L219.1 323.2 L219.6 322.2 L220.2 321.3 L220.8 320.2 L221.5 319.1 L221.9 318.3 L222.3 317.5 L222.7 316.7 L222.4 316.9 L222 317.2 L222.7 316.3 L223.4 315.3 L224.1 314.4 L224.5 313.9M289.9 357 L289 356.2 L288.2 355.5 L286.7 355.4 L285.2 355.3 L283.9 355.3 L282.6 355.3 L281.5 356.4 L279.9 357.6 L278.3 358.7 L277 359.2 L275.6 359.7 L274.7 359.6 L273.7 359.4 L273.7 358.3 L272.7 357.6 L271.5 356.6 L270.1 355.2 L269.7 353.8 L269.8 352.7 L269.8 351.6 L270 350.2 L270.7 348.6 L271.3 346.9 L271.6 345.6 L271.9 344.4 L272.2 343.1 L272.9 341.3 L273.6 339.5 L272.7 339.3 L271.7 339 L270.7 338.4 L269.6 337.9 L268.5 337.9 L266.9 338.3 L265.4 338.7 L264.2 339.3 L262.9 339.9 L261.9 340.2 L260.8 340.5 L259.5 340.7 L258.6 340.9 L257.7 341.1 L256.8 341.4 L257.8 340.1 L258.8 338.9 L259.4 337.2 L260 335.5 L260.6 333.8 L261.1 332.1 L262 332.5 L262.6 331.1 L263.2 329.7 L263.9 328.4 L264.2 327.2 L264.5 326.1 L265.9 324.3 L267.4 322.5 L266.8 321.4 L265.7 321.8 L264.7 322.2 L263.6 322.5 L262.1 323.2 L260.6 323.9 L259.2 324.6 L258 325.4 L256.9 326.2 L256.4 327.4 L255.9 328.7 L255.4 330 L254.5 331.4 L253.5 332.8 L252.2 333.9 L250.9 335 L249.6 335.5 L248.4 336 L247.1 336.9 L245.9 337.7 L244.6 338.6 L243.5 339.1 L242.9 338.7 L242.4 338.2 L241.5 338.3 L240.5 338.4 L240.2 337.4 L239.9 336.1 L239.7 335.1 L239.4 334.2 L239.1 333.3 L239.1 332.8 L239.2 331.4 L239.3 330 L239.3 329.3 L239.9 328 L240.4 326.7 L241 325.4 L241.9 323.7 L242.8 322 L243.7 320.4 L244.6 318.8 L245.5 317.3 L245.8 316.3 L246.1 315.4 L246.4 314.4 L247.2 313.1 L248 311.9 L249.4 310.6 L250.7 309.4 L251.8 308.5 L253 307.7 L254.1 306.8 L255.8 305.3 L257.2 304.4 L258.6 303.4 L259.7 302.9 L260.8 302.5 L261.8 302.3 L262.9 302.2 L263.6 302.2 L264.3 302.3 L265.2 302.2 L266.1 302.1 L267 301.9 L267.9 301.7 L268.8 301.5 L269.2 300.4 L269.6 299.4 L269.9 298.4 L270.9 297.8 L272 297.2 L273.1 297.1 L274.1 296.9 L275.3 296.5 L276.4 296 L277.6 295.6 L278.9 295.2 L279.5 295.4 L280.1 295.5 L280.5 296.5 L281.7 295.9 L283 295.2 L284.2 294.6 L284.8 294.8 L285.5 295.1 L286 295.7 L286.5 296.3 L286.4 297.2 L286.4 298 L286.1 299 L285.8 299.9 L285.9 301 L286.1 302.2 L286.9 303 L286.8 303.8 L287.3 305 L287.9 306.1 L289 305.8 L290.1 305.5 L290.8 304.5 L291.4 303.5 L292 302.2 L292.7 300.9 L292.7 299.7 L292.8 298.6 L292.8 297.5 L292.9 296.4 L292.6 295.5 L292.4 294.6 L292.4 293.7 L292.4 292.7 L292.5 291.8 L293.1 290.6 L293.8 289.5 L294.8 288.3 L295.8 287.1 L297.7 285.8 L299.6 284.6 L301 283.6 L302.5 282.7 L303.8 282 L305.1 281.3 L306.4 280.6 L307.9 279.6 L309.3 278.6 L310.3 278.3 L311.3 278 L312.5 277.3 L313.8 276.6 L315 275.9 L315.2 274.8 L315.4 273.8 L315.5 273.1 L315.6 272.4 L314.8 272.2 L315.2 271.1 L315.7 270 L316.2 269.2 L316.7 268.3 L317.2 267.4 L318.5 266.8 L317.9 267.6 L317.2 268.4 L316.6 269.3 L316.4 270.1 L316.2 270.9 L315.9 271.7 L317.1 270.7 L318.4 269.7 L319.2 269 L320 268.3 L320.2 267.6 L320 267.1 L319.9 266.5 L320.4 266.8 L321 267.2 L322.8 266.1 L323.6 265.2 L324.4 264.4 L325.2 263.6 L325.5 263.1 L327.2 262.3 L328.8 261.6 L330.2 261.3 L331.7 260.9 L333.1 260.6 L334.4 260.1 L335.8 259.8 L336.7 259.6 L337.6 259.4 L337.4 258.7 L337.7 259.1 L336.3 259.3 L335.6 258.5 L337 257.7 L336.8 257.1 L337.9 256.4 L339 255.7 L340.3 255.3 L341.5 255 L342.7 254.6 L344 254.2 L345.2 253.8 L346.4 253.3 L347.7 252.9 L348.9 252.5 L350.5 251.9 L352 251.4 L353.2 251 L354.4 250.6 L355.6 250.2 L355 250.9 L353.5 251.7 L352 252.4 L351.1 253.2 L350.2 254 L350.8 254.2 L351.5 254.5 L352.9 253.8 L354.4 253.1 L355.8 252.5 L356.9 252.1 L358 251.8 L359.2 251.4 L360.5 251.1 L361.7 250.8 L363 250.5 L364.2 250.2 L365.7 249.8 L367.3 249.2 L368.8 248.7 L369.4 248.5 L368.9 247.7 L368.4 247 L367.2 247.7 L366 248.3 L364.7 249 L363.6 249.2 L362.5 249.4 L361.4 249.6 L360.4 249.5 L359.5 249.5 L358.6 249.4 L357.8 249.3 L356.9 249.2 L356.8 248.6 L356.6 248 L356.9 247.4 L357.2 246.9 L356.4 246.9 L355.5 246.9 L354.6 246.9 L355.9 246.5 L357.3 246 L358.6 245.6 L359.9 245.2 L359.1 245 L358.3 244.8 L357 244.9 L355.8 245.1 L354.5 245.3 L353 245.8 L351.6 246.2 L350.2 246.6 L348.6 247.2 L347.1 247.8 L345.5 248.4 L344.2 248.9 L342.8 249.5 L341.5 250 L340.1 250.6 L341.5 250 L342.8 249.3 L344.2 248.7 L345.4 247.9 L347.1 247.2 L348.7 246.5 L350.3 245.8 L351.5 245.4 L352.7 245 L353.9 244.6 L354.8 244.2 L355.8 243.8 L357 243.6 L358.2 243.5 L359.4 243.3 L360.6 243.2 L361.8 243 L362.8 242.9 L363.9 242.8 L365 242.8 L366 242.7 L367.1 242.6 L368.3 242.5 L369.4 242.3 L370.6 242.2 L371.7 242.1 L373.2 241.6 L374.6 241.1 L376 240.6 L377.2 240.5 L378.4 240.3 L379.6 240.2 L381 239.7 L382.3 239.3 L383.7 239 L383.7 238 L382.9 237.4 L382.1 237.2 L381.3 237.1 L380.2 236.9 L379.2 236.7 L378.3 236.4 L377.2 236.3 L376.2 236.3 L375.2 236.2 L374.5 235.8 L373.7 235.5 L373.1 235.4 L372.4 235.3 L372.7 234.9 L373 234.6 L373.2 234.3 L372.8 234 L372.3 233.7 L372 233.5 L371.6 233.3 L371.3 233.1 L371 232.9 L370.6 232.7 L369.7 232.9 L368.8 233.1 L367.9 233.3 L366.4 233.8 L364.9 234.2 L363.5 234.7 L362.7 234.7 L361.9 234.8 L361.1 234.8 L360.8 234.6 L360.2 234.3 L360.7 233.8 L360.3 233.6 L359.7 233.6 L359.1 233.6 L358.5 233.6 L357.8 233.7 L357.1 233.7 L356.4 233.8 L355.6 233.9 L354.9 234 L354.3 234.1 L353.5 234.3 L352.7 234.4 L351.9 234.6 L351.1 234.7 L350.3 234.9 L349.5 235 L348.9 235.3 L348.2 235.6 L347.6 235.9 L347 236.2 L345.8 236.7 L344.6 237.1 L343.4 237.6 L342.2 238.1 L342.5 238.5 L342.3 239.1 L341.9 239.5 L341.5 239.8 L340.1 240.3 L338.7 240.8 L337.2 241.3 L335.8 241.8 L334.4 242.4 L333.4 243 L332.3 243.6 L331.3 244.3 L330.3 245 L329.3 245.6 L328.9 246.2 L328.6 246.8 L327.5 247.1 L326.3 247.5 L325.1 247.8 L324.9 247.4 L324.8 247.1 L324.5 246.4 L325.3 245.8 L326 245.2 L326.8 244.7 L327.6 244.1 L328.4 243.6 L327.6 243.8 L326.8 243.9 L326.1 244.1 L325.3 244.3 L324.5 244.5 L323.8 244.7 L322.8 244.7 L321.9 244.7 L321.1 244.7 L320.4 244.9 L319.6 245.1 L318.9 245.3 L318.3 245.5 L317.6 245.7 L316.9 245.9 L316.2 246.1 L315.6 246.3 L314.9 246.5 L315.3 246.2 L315.6 245.9 L316 245.7 L316.4 245.4M325.4 263.3 L326.8 262.9 L328.3 262.6 L329.4 262.2 L330.5 261.8 L331.7 261.4 L330.7 261.6 L329.7 261.8 L328.6 262 L327.6 262.3 L326.6 262.5 L325.4 263.3M357.8 248.4 L358.9 248.5 L360 248.5 L361 248.6 L362.4 248.4 L363.8 248.2 L362.1 249.1 L361 249 L360 248.9 L358.9 248.8 L357.8 248.4M360.2 243.7 L361.3 243.7 L362.5 243.7 L363.6 243.7 L364.8 243.7 L366 243.8 L366.5 244.1 L365.4 244.2 L364.3 244.2 L363.2 244.2 L362.1 244.3 L361.1 244 L360.2 243.7M388.2 246.4 L388.8 245.7 L389.4 245 L389.2 244.4 L389 243.9 L388.7 243.3 L388.1 242.9 L387.6 242.5 L386.6 242.5 L385.6 242.4 L384.5 242.4 L383.6 242.1 L382.6 241.9 L382.4 241.5 L382.2 241 L383 240.3 L383.8 239.7 L382.5 240 L381.2 240.3 L379.9 240.6 L379 241.3 L378.1 242 L377.1 242.6 L376.1 243.2 L375 243.8 L373.9 244.4 L372.6 244.3 L372.2 245.1 L371.8 245.8 L373 245.7 L374.2 245.7 L375.5 245.6 L376.7 245.5 L378 245.5 L379.3 245.5 L380.5 245.4 L381.2 245.8 L381.9 246.3 L383 246 L384.2 245.6 L385.3 245.3 L386 245 L385.5 245.6 L385.1 246.3 L385.9 246.4 L386.7 246.5 L387.4 246.5 L388.2 246.4M395 228.2 L396 228.1 L396.7 228.1 L397.4 228.1 L398.1 228.1 L398.8 228.1 L398 228.1 L397.2 228.1 L396.4 228.2 L395.6 228.2 L394.8 228.3 L394.4 228.4 L395 228.6 L395.4 228.7 L395.8 228.8 L396.4 229.1 L397.1 229.2 L397.8 229.4 L398.6 229.6 L399.4 229.8 L400.3 230 L401.1 230.2 L401.9 230.4 L402.7 230.5 L403.7 230.6 L404.7 230.7 L405.7 230.7 L406.7 230.8 L407.5 231 L408.3 231.1 L409.2 231.2 L410.1 231.3 L411 231.4 L411.9 231.3 L412.7 231.3 L412.9 230.7 L413.4 230.4 L413.9 230.2 L414.3 230 L414.8 229.8 L415.2 229.6 L415.6 229.4 L415.9 229.2 L416.3 229.1 L417.1 228.9 L417.9 228.9 L418.6 228.9 L419.4 229 L420.2 229 L420.8 229 L421.3 229 L421.9 229 L422.5 229 L423.1 229 L423.7 229 L424.3 229.1 L424.8 229.1 L425.4 229.1 L425.9 229.1 L426.6 229.1 L427.2 229.2 L427.8 229.3 L428.5 229.3 L429.1 229.4 L429.7 229.4 L430.3 229.5 L430.9 229.6 L431.5 229.6M371.3 231.9 L370.6 232 L369.9 232 L369.2 232 L368.5 232.1 L367.8 232.1 L367.1 232.1 L366.5 232.1 L365.8 232.1 L365.2 232.2 L364.5 232.2 L363.8 232.3 L363.2 232.3 L362.5 232.4 L361.9 232.4 L361.4 232.5 L360.9 232.5 L360.4 232.5 L359.9 232.5 L358.7 232.7 L357.9 232.9 L357.1 233 L356.3 233.2 L355.5 233.3 L354.7 233.5 L354 233.7 L354.4 233.5 L354.8 233.4 L355.3 233.3 L356.1 233.1 L356.9 232.9 L357.8 232.7 L358.6 232.6 L359.4 232.4 L360.3 232.2 L361.1 232.1 L361.9 231.9 L363 231.7 L364.1 231.5 L364.8 231.4M366.1 231.2 L367.2 231 L367.9 230.9 L368.6 230.7 L369.3 230.6 L370 230.5 L370.9 230.4 L371.4 230.4 L371.8 230.3 L372.3 230.3 L372.8 230.3 L373.4 230.2 L373.9 230.2 L374.5 230.2 L375.1 230.1 L375.7 230.1 L376.3 230.1 L376.9 230.1 L375.6 230.3 L374.2 230.6 L372.8 231 L372.4 231.2 L372 231.4 L371.7 231.7 L371.3 231.9M292.8 262.1 L294.3 261.2 L295.8 260.4 L297.4 259.6 L298.9 258.8 L300.4 258.1 L301.8 257.3 L303.2 256.6 L304.6 255.9 L305.4 255.7 L306.2 255.5 L307 255.3 L307.9 255.1 L308.7 254.9 L308.9 255.3 L309 255.7 L309.2 256.1 L308.6 256.9 L308.1 257.7 L307 258 L305.9 258.2 L304.8 258.6 L303.7 258.9 L303 258.9 L302.2 258.9 L301.5 258.9 L300.3 259.3 L299.2 259.7 L298.1 260.2 L296.9 260.6 L295.8 261 L294.8 261.4 L293.8 261.7 L292.8 262.1M292.8 268.5 L293.4 268.5 L294.1 268.5 L295.6 267.5 L297.1 266.4 L297.9 265.4 L298.8 264.4 L299.7 263.4 L301.1 262.4 L302.6 261.4 L304.1 260.4 L305.6 259.4 L304.5 259.6 L303.5 259.9 L302.4 260.1 L300.7 261.2 L299 262.3 L297.2 263.4 L296.3 264.4 L295.4 265.4 L294.5 266.4 L293.6 267.4 L292.8 268.5M306.4 259 L307 259.1 L307.7 259.3 L308.3 259.4 L307.7 260.1 L307.1 260.8 L306.6 261.6 L306.7 262.3 L306.8 263 L308.2 262.3 L309.6 261.6 L310.5 260.8 L311.5 259.9 L312.4 259.1 L313.3 259 L314.3 258.9 L315.2 258.7 L315.4 258 L315.6 257.2 L314.9 257.1 L314.2 257 L313.6 256.9 L312.6 257.2 L311.6 257.4 L310.6 257.6 L309.6 257.8 L308.6 258.2 L307.5 258.6 L306.4 259M302.6 266.2 L303.6 266.1 L304.7 265.9 L305.7 265.8 L307.2 265.1 L308.8 264.5 L310.3 263.8 L311.8 263.2 L313 262.5 L314.2 261.9 L315.5 261.3 L314.3 261.6 L313.2 261.9 L312.1 262.2 L310.8 262.7 L309.5 263.2 L308.2 263.7 L306.9 264.1 L305.6 264.6 L304.1 265.4 L302.6 266.2M313.9 260.9 L315 260.6 L316.2 260.4 L317.3 260.1 L318.5 259.8 L319.7 259.5 L320.9 259.2 L322.1 258.9 L323.3 258.6 L323.5 258.1 L323.8 257.6 L322.7 257.9 L321.6 258.2 L320.6 258.5 L319.3 258.8 L318 259.2 L316.7 259.6 L315.4 260 L313.9 260.9M273.3 318.9 L275.1 317.2 L276.9 315.5 L278.5 314.7 L280.2 313.9 L281.2 313.4 L282.1 313 L283.3 312.8 L284.5 312.7 L285.6 312.5 L286.7 312.2 L287.8 312 L289.2 312.3 L290.6 312.5 L292.1 312.7 L293.5 312.8 L294.9 313.2 L296.4 313.6 L297.8 314.1 L299.2 314.7 L300.4 314.9 L301.6 315.2 L303 315.4 L304.4 315.6 L305.4 315.9 L306.4 316.3 L304.8 317.1 L303.3 317.9 L301.9 318 L300.5 318.2 L299.2 318.5 L297.9 318.8 L296.6 319.2 L295.4 319.5 L294.2 319.9 L295.3 318.6 L296.4 317.4 L295.1 317.4 L293.9 317.3 L293.4 316.4 L292.8 315.5 L291.3 315.4 L289.9 315.3 L288.4 315.2 L287 315.1 L286 315 L285 315 L283.8 315 L282.7 314.9 L281.6 314.9 L280.5 314.8 L279.2 315.7 L277.9 316.7 L276.6 317.5 L275.3 318.2 L274.3 318.6 L273.3 318.9M278.9 317.3 L280.4 317.1 L280.1 318.2 L278.8 318.5 L278.9 317.3M291.1 325.1 L292.7 324.2 L294.3 324 L296 323.8 L297 324.1 L298.1 324.3 L297 324.9 L296 325.5 L294.5 325.8 L293 326.1 L292 325.6 L291.1 325.1M304.2 322.4 L304.5 321.5 L306.1 321.4 L307.6 321.3 L309.2 321.3 L310.3 320.9 L311.5 320.6 L310.9 319.8 L310.2 319.1 L309.4 318.2 L308.6 317.4 L309.8 316.9 L311.1 316.4 L312.7 316.7 L314.5 316.1 L316.2 315.9 L317.9 315.7 L319.2 315.8 L320.6 315.8 L320.4 316.9 L321.7 316.7 L323.1 316.5 L321.4 317.5 L322.8 317.5 L324.3 317.4 L325.6 318.3 L324.5 319.7 L323 319.6 L321.5 319.6 L320 319.6 L318.7 320.1 L317.4 320.7 L315.7 320.7 L315 321.9 L314.3 323.1 L313.3 321.8 L312 321.8 L310.8 321.8 L309.3 322.2 L307.7 322.6 L306.2 323 L305.2 322.7 L304.2 322.4M329.5 318.1 L330.9 318 L332.4 317.9 L333.9 317.8 L335.4 317.7 L334.7 319 L332.9 319.3 L331.1 319.6 L329.4 319.8 L329.4 319 L329.5 318.1M347.9 341.7 L349.4 341.3 L350.8 340.9 L350.6 342.2 L350.3 343.5 L348.6 343.8 L346.8 344 L348.4 342.8 L347.9 341.7M296 300.4 L297.6 299.9 L299.2 299.5 L300.3 299.5 L301.5 299.5 L300.9 300.5 L299.7 300.4 L298.4 300.4 L297.2 300.4 L296 300.4M390.8 378.6 L392.8 378.7 L394.8 378.7 L396.4 378.8 L397.9 378.8 L399.5 378.9 L399.2 380.1 L398.9 381.3 L398.3 382.5 L397.7 383.6 L396.1 384.1 L394.4 384.6 L392.8 384.7 L391.2 384.9 L389.8 383 L389.9 381.8 L390 380.7 L390.4 379.7 L390.8 378.6M353.3 584.8 L354.2 585.8 L355.1 586.8 L356.3 587.6 L357.4 588.4 L358.5 589.1 L359.6 589.5 L360.8 589.8 L361.9 590.1 L363.1 590.5 L362.8 591.7 L361.7 592 L360.7 592.4 L359.7 592.7 L358.7 593.1 L357.7 593.4 L356.7 593.8 L355.6 593.8 L354.5 593.9 L353.4 593.9 L352.1 593.3 L350.7 592.7 L349.3 592.2 L347.8 591.4 L346.4 590.6 L347.3 590.6 L348.3 590.7 L349.2 590.8 L349.7 589.7 L350.2 588.6 L350.1 587.5 L350.1 586.5 L350.7 585.7 L351.4 584.9 L352.3 584.9 L353.3 584.8M328.2 548.7 L328.8 550.1 L329.4 551.6 L329.6 553.1 L329.8 554.5 L328.7 554.5 L327.6 554.6 L327.3 552.7 L326.9 550.8 L326.8 548.9 L328.2 548.7M369.5 579.7 L370.6 578.9 L371.7 578.1 L372.6 578.2 L373.5 578.2 L374.4 578.3 L375.5 578 L376.6 577.8 L377.4 578.2 L378.2 578.7 L377.5 579.6 L376.8 580.5 L375.8 580.8 L374.7 581 L373.8 580 L372.7 580.6 L371.6 581.3 L370.8 581 L370 580.7 L369.5 579.7M425.8 586.6 L426.8 586.8 L427.8 587 L428.8 587.2 L429.8 588.1 L430.7 589 L429.9 589.9 L429 589.3 L428.1 588.7 L427.2 588.1 L426.5 587.4 L425.8 586.6M243 402 L244.1 400.1 L245 401.7 L245 402.8 L245 404 L243.6 404.5 L243.3 403.2 L243 402M246.2 401.7 L247.1 401.6 L246.8 402.4 L246.2 401.7M318.3 444.2 L319.4 444.3 L320.5 444.3 L321.7 445.6 L322.9 446.8 L321.6 448.2 L320.2 447.4 L318.9 446.6 L318.6 445.4 L318.3 444.2M587.2 319.4 L586.5 318.6 L585.7 317.8 L584.9 317 L584.6 317.4 L585.3 318.8 L586 320 L586.8 321.2 L586.5 321.6 L585.4 320.5 L584.3 319.3 L583.2 318.2 L582.3 317.3 L581.3 316.4 L579.8 314.7 L578.4 313 L576.9 311.4 L575.8 310.5 L574.8 309.7 L573.8 308.8 L572.7 307.9 L571.9 307.4 L571.2 306.8 L570.4 306.3 L569.6 305.7 L568 304.1 L566.7 303.1 L565.4 302 L565.3 301.3 L565.1 300.6 L564.7 299.5 L563.6 298.5 L562.6 297.5 L561.9 296.6 L561.2 295.8 L561.1 295.3 L560.9 294.7 L560.1 294.6 L559.1 293.7 L558.2 292.8 L557.7 292.7 L557.2 292.7 L556.8 292.6 L556 292.3 L555.3 291.9 L554.5 291.6 L553.7 291.2 L553 290.8 L552.2 290.5 L551.4 290.2 L550.6 289.9 L549.7 289.5 L548.9 289.1 L548 288.7 L547.2 288.4 L546.3 288 L545.6 287.8 L544.8 287.6 L544 287.4 L543.2 287.2 L542.7 287.4 L542.2 287.5 L541.7 287.7 L541 287.6 L540.3 287.6 L539.7 287.7 L539.1 287.9 L538.5 288 L537.6 287.6 L536.6 287.1 L535.7 286.7 L534.6 286.4 L533.5 286 L532.1 285.1 L530.6 284.2 L529.1 283.4 L528.5 283.2 L527.8 283.1 L528.1 284.2 L528.4 285.3 L528.3 286 L528.1 286.8 L527.5 287.1 L526.8 287.3 L525.9 287.5 L525 287.6 L524.5 288.2 L524 288.8 L523.9 289.6 L523.9 290.4 L523.8 291.1 L524.4 292.3 L524.8 293.5 L525.8 294.2 L525.7 295.4 L525.6 296.6 L524.6 297.1 L523.6 297.7 L522.5 297.9 L521.5 298.1 L520.3 298.3 L519.2 298.5 L518.9 299.5 L518.6 300.6 L517.9 301.3 L517.2 302 L516.5 302.7 L516.3 303.6 L516.1 304.5 L515.8 305.5 L515.3 306.5 L514.7 307.6 L514.2 308.7 L513.7 309.9 L513.2 311.1 L512.8 312.4 L512.8 313.8 L512.8 315.3 L512.7 316.7 L514.3 317.9 L515.9 319.2 L515.7 320.3 L515.5 321.5 L516.4 323 L517.2 324.4 L518 325.9 L518 327.2 L517.9 328.5 L517.8 329.8 L517.7 331.1 L517.7 332.4 L516.8 333.6 L515.9 334.7 L515 335.9 L515.9 337.2 L516.9 338.5 L517.9 339.9 L518 340.9 L518.1 341.9 L518.3 343.1 L518.5 344.3 L519.9 345.6 L521.4 346.9 L523.3 348.7 L525.1 350.4 L525.9 352 L526.8 353.5 L528.4 355.1 L530 356.7 L530.9 358.6 L531.7 360.5 L532.7 362 L533.7 363.6 L534.7 365.1 L535.9 366 L537.2 366.9 L538.4 367.8 L539.4 369.1 L540.5 370.4 L542.2 372.2 L543.9 373.9 L545.5 375.7 L546.9 376.8 L548.2 377.9 L549.4 379 L550.7 380.1 L552 380.1 L553.3 380.1 L554.6 380.1 L555.8 380.1 L557.3 380.1 L558.8 380.2 L560.2 380.2 L561.6 380.2 L563.1 381 L564.6 381.9 L566.1 383 L567.5 384.2 L568.7 383.9 L569.9 383.6 L571.1 383.3 L572.3 383.1 L573.5 382.9 L574.7 382.7 L575.9 382.5 L576.9 382.6 L578 382.7 L579 382.9 L580.2 383.3 L581.5 383.8 L582.4 384.3 L583.4 384.8 L584.3 385.3 L585 386.7 L585.7 388.1 L586.4 389.5 L587.1 390.8 L587.8 392.6 L588.5 394.3 L589.7 394.7 L590.9 395.1 L591.9 395.4 L592.9 395.7 L593.9 396.1 L594.5 396.5 L595.2 396.9 L596 398.4 L596.7 399.9 L597.1 399.5 L597.3 400.9 L597.4 402.2 L597.5 403.6 L597.6 404.9 L597.6 406.2 L597.6 407.7 L597.4 409.3 L597.3 410.8 L596.7 412.3 L596.3 413.7 L596 415 L595.6 416.3 L595.9 418 L596.3 419.7 L596.6 421.4 L597.3 423.7 L598 426 L599 428.5 L599.9 431 L600.7 433.2 L601.4 435.4 L601.5 437 L601.7 438.6 L601.8 440.1 L602.1 441.8 L602.4 443.4 L602.6 445.1 L602.6 446.9 L602.6 448.8 L602.6 450.6 L602.5 452.4 L602.6 454.1 L602.6 455.8 L602.6 457.5 L602.5 459.6 L602.4 461.6 L601.8 463.2 L601.2 464.9 L600.6 466.5 L599.3 467.9 L598.1 469.2 L597.5 470.9 L597 472.5 L596.5 474.2 L595.9 475.8 L595.2 477.5 L594.4 479.3 L593.6 481 L593.3 482 L593.1 483.1 L592.9 485 L592.8 486.8 L592.6 488.7 L592.4 490.5 L592.4 492.5 L592.3 494.5 L592.3 496.5 L592.2 498.5 L592.1 500.6 L592 502.7 L591.8 504.8 L591.7 506.9 L591.1 508.5 L590.5 510.1 L589.8 511.7 L589.3 513.7 L588.8 515.7 L588.3 517.7 L587.7 519.7 L587.3 521 L587 522.3 L586.7 524.2 L586.4 526.2 L586.1 528.1 L585.9 529.4 L585.8 530.8 L585.5 532.3 L585.1 533.9 L584.8 535.4 L584.4 537.2 L583.9 538.9 L583.4 540.6 L582.9 542.4 L582.6 543.6 L582.3 544.9 L581.2 546.1 L580.1 547.3 L579.6 548.7 L579.1 550.2 L578.6 551.6 L577.8 553.2 L578.8 552.7 L578.6 554.7 L578.7 555.6 L578.8 556.5 L579.9 556.3 L581 556.1 L581.6 556.2 L582.3 556.3 L583 556.4 L583.5 556.8 L584 557.2 L584.5 557.6 L584.9 558.3 L585.3 558.9 L585.7 559.6 L586.4 559.7 L587.1 559.7 L587.7 559.8 L588.4 559.9 L589 560 L590.1 559.5 L591.2 559.1 L592.2 558.3 L593.3 557.5 L594.4 556.6 L595.7 555.7 L597 554.8 L598 553.9 L599.1 553 L600.1 552.1 L601 551.3 L601.9 550.5 L602.7 549.7 L603.7 548.4 L604.6 547.2 L605.6 545.9 L606.5 544.3 L607.5 542.7 L608.4 541.1 L609.4 539.9 L610.3 538.7 L610.9 538.7 L611.4 538.8 L612 538.8 L612.7 537.7 L613.5 536.6 L614.2 535 L614.9 533.5 L615.6 531.9 L616.3 530.3 L616.8 528.6 L617.3 527 L617.8 525.3 L618.4 523.5 L619.1 521.7 L619.7 520.9 L620.4 520.2 L621 519.4 L621.8 518.4 L622.5 517.3 L623 517.1 L623.4 516.8 L623.8 516.5 L624.2 516.2 L624.6 515.9 L625 515.5 L625.4 515.2 L625.9 514.1 L626.3 513 L626.8 511.9 L627.3 510 L627.8 508.1 L628.3 506.2 L628.7 504.3 L629.2 502.4 L629.6 500.6 L630 498.7 L630.4 496.9 L630.8 495 L630.9 493.4 L631.1 491.8 L631.4 489.8 L631.7 487.7 L631.9 486 L632.1 484.4 L632.4 482.8 L632.6 481.2 L632.8 479.5 L632.9 477.7 L633 475.8 L633.3 474.2 L633.5 472.6 L633.7 471.1 L633.9 469.7 L634 468.5 L634.2 467.3 L634.3 466.1 L634.4 465.5 L634.5 464.8 L634.6 464.1 L634.7 463.4 L634.7 462.2 L634.8 461.1 L634.8 459.9 L634.8 459.4M630.6 444.6 L630.9 444.4 L631.5 444 L631.8 445.2 L632.1 446.5 L632.1 448.4 L632.1 450.3 L631.9 451.6 L631.7 452.9 L631.5 454.2 L631.2 454 L630.9 453.7 L630.6 453.5 L630.5 452 L630.5 450.5 L630.5 448.9 L630.5 447.5 L630.6 446 L630.6 444.6M628.1 452.8 L628.1 454.3 L628.1 455.9 L628.1 457.4 L627.9 458.9 L627.7 460.5 L627.5 462 L627.5 464.2 L627.6 466.4 L627.6 468.6 L627.6 470.6 L627.5 472.6 L627.4 474.7 L627.5 475.3 L627.6 473.2 L627.8 471.1 L627.9 469 L627.9 466.9 L627.9 464.8 L627.9 462.7 L628.1 461 L628.2 459.4 L628.3 457.7 L628.3 456.1 L628.3 454.6 L628.3 453.1M629 482.3 L628.9 483.9 L628.7 485.4 L628.5 487 L628.1 488.7 L627.7 490.4 L627.3 492.1 L627 494 L626.7 495.9 L626.3 497.8 L626 500 L625.6 502.2 L626.1 500.8 L626.5 499.4 L626.8 497.8 L627.1 496.2 L627.4 494.5 L627.7 492.9 L628 491.1 L628.4 489.3 L628.7 487.5 L628.9 485.9 L629 484.3 L629.2 482.7 L629 482.3M632.5 432.3 L632.7 433.9 L632.9 435.4 L633 437.2 L633.2 438.9 L633.3 440.7 L633.1 439.8 L632.9 437.7 L632.7 435.6 L632.6 434 L632.5 432.3M600.1 370 L600.8 370.4 L601.5 370.7 L602.2 372 L602.9 373.4 L602.5 374.3 L601.9 373.6 L601.2 372.9 L600.7 371.5 L600.1 370M501.8 283 L502.3 283.1 L502 283.2M569.5 297.9 L571.1 299.6 L572.4 301 L573.7 302.4 L575 303.8 L576.3 305.2 L577.1 306.2 L577.9 307.3 L578.7 308.3 L577.9 307.4 L577.1 306.6 L576.3 305.8 L575 304.3 L573.7 302.9 L572.4 301.4 L570.8 299.7 L569.1 298 L567.4 296.2 L565.7 294.6 L564.5 293.3 L563.4 292.1 L562.2 290.9 L560.9 289.8 L559.6 288.6 L558.3 287.5 L557 286.4 L555.6 285.2 L554.1 284 L552.6 282.7 L551.1 281.5 L549.5 280.2 L548.2 279.2 L546.9 278.1 L545.5 277.1 L545 276.8 L544.4 276.5 L543.8 276.1 L544.9 277 L546 278 L547 278.9 L548.1 279.8 L549.2 280.6 L550.3 281.5 L551.5 282.5 L552.7 283.5 L553.8 284.5 L554.7 285.2 L555.7 285.9 L556.6 286.7 L557.5 287.4 L558.9 288.6 L560.3 289.8 L561.7 291.1 L563.1 292.3 L564.1 293.2 L565.1 294.2 L563.9 293.3 L563 292.5 L562.2 291.7 L562.8 292.5 L563.4 293.2 L564.6 294.4 L565.9 295.6 L566.2 296.1 L566.5 296.6 L566.8 297.3 L566 296.7 L565.5 296 L565 295.2 L563.9 294.1 L562.9 293 L562.1 292.3 L561.4 291.5 L560.6 290.9 L559.9 290.3 L558.5 289.2 L557.2 288 L556 287.1 L554.8 286.1 L553.6 285.2 L552.4 284.2 L551.3 283.4 L550.3 282.6 L549.2 281.7 L548.2 280.9 L547.1 280.1 L546.3 279.3 L545.4 278.6 L544.4 277.7 L543.3 276.9 L542.2 276.2 L541.1 275.4 L540.5 275.6 L540.1 275.9 L539.6 276.1 L538.6 275.4 L537.6 274.8 L537 274.6 L536.5 274.3 L535.6 273.8 L534.7 273.3 L533.9 273.3 L534.4 273.9 L534.9 274.5 L536 275.3 L536.6 276.1 L536.2 276.3 L535.7 276.4 L535.2 276.4 L534.8 276.3 L534.3 276.3 L534.3 277 L534.3 277.6 L534.4 278.2 L534.4 278.8 L535.6 279.9 L536.8 280.9 L536.4 281.1 L536 281.3 L536.4 282.1 L536.9 282.9 L536.1 282.7 L535.3 282.6 L535.2 283.2 L535 283.7 L534.1 283.4 L533.1 283.1 L532.1 282.8 L531.1 282.5 L530 282.1 L529.3 282.4 L528.6 282.7 L528.3 282.9 L527 282.1 L525.8 281.1 L525.3 280.6 L524.3 279.9 L523.3 279.2 L522 278.7 L521 278.8 L520.1 278.5 L519.2 278.3 L518.3 278 L517.9 277 L517.4 276.1 L516.6 274.9 L515.3 274.1 L514.4 273.7 L514 273 L513.7 272.4 L513.6 271.6 L513.6 270.9 L512.9 269.8 L512.2 268.8 L511.4 267.8 L510.5 266.9 L509.4 265.9 L508.2 265 L508.7 264.7 L509.2 264.5 L509.7 264.2 L510.3 264.3 L511.5 264.7 L512.7 265.1 L513.9 265.5 L515 265.9 L516.1 266.3 L517.2 266.7 L518.3 267.1 L519.4 267.5 L520.5 267.9 L521.5 268.3 L522.6 268.7 L523.7 269.1 L523.2 268.4 L522.8 267.7 L522.4 267 L521.5 266.1 L520.7 265.3 L520 264.7 L519.3 264.1 L517.8 263.1 L516.4 262.2 L515 261.3 L513.9 260.8 L512.9 260.2 L511.8 259.7 L511 259.4 L510.3 259.1 L509.6 258.9 L508.7 258.3 L507.8 257.7 L508.3 257.6 L509.4 257.8 L510.1 257.9 L511.3 258.4 L512.4 258.9 L513.3 259.2 L512.1 258.4 L511 257.5 L511.4 257.6 L512.6 258.3 L513.2 258.5 L513.8 258.7 L514.4 258.9 L515 258.7 L514.5 258.2 L514.1 257.8 L514.7 257.8 L515.3 257.8 L514.9 257.3 L514.3 256.8 L513.6 256.3 L514.1 256.4 L514.5 256.6 L514.9 256.7 L515.3 256.9 L515.7 257 L516.1 257.2 L515.1 256.5 L513.9 255.9 L512.7 255.2 L511.5 254.6 L510.2 253.9 L508.9 253.2 L508.5 253M502.5 254.2 L502.8 253.9 L502.9 253.3 L503.5 253.5 L504 253.6 L504.6 253.7 L503.6 253.3 L502.5 252.9 L501.7 252.6 L500.9 252.3 L500.1 252 L500.7 251.7 L499.6 251.2 L498.6 250.6 L498 250.2 L497.4 249.8 L498.3 250.1 L499.1 250.4 L500 250.7 L499.5 250.3 L499 249.9 L497.8 249.4 L496.7 248.9 L496.5 248.5 L495.9 248.4 L495.2 248.2 L494.6 248 L494 247.9 L493 247.4 L492.7 247.1 L492.3 246.8 L491.8 246.7 L491.2 246.6 L490.4 246.1 L489.6 245.7 L488.8 245.2 L487.8 244.8 L486.7 244.3 L486.1 243.9 L485.5 243.5 L485 243.1 L485.7 243.4 L486.5 243.6 L487.2 243.8 L487.9 244.1 L488.3 244.3 L488.6 244.6 L489.5 244.9 L490.3 245.2 L491.1 245.5 L491.8 245.7 L492.4 246 L493 246.3 L493.7 246.7 L494.3 247.1 L494.7 247.4 L495.5 247.7 L496.3 248 L497.5 248.7 L498.8 249.3 L500.4 250.1 L501.4 250.6 L502.4 251 L503.4 251.5 L504.9 252.3 L505.8 252.9 L506.7 253.4 L507.6 253.7 L508.4 254 L510.2 255 L510.6 255.4 L511 255.8 L511.6 256.3 L512.3 256.6 L512.9 257 L512.2 256.9 L511.1 256.6 L510.3 256.3 L509.5 256 L508.8 255.8 L508.2 255.6 L507.3 255.4 L506.5 255.1 L505.6 254.8 L506.1 255.3 L505.4 255 L504.7 254.7 L503.9 254.8 L503.2 254.5 L502.5 254.2M496.8 250.6 L496.3 250.5 L495.7 250.4 L495.1 250.3 L494.5 250.2 L493.8 250.1 L493.1 250 L492.3 249.9 L491.6 249.8 L490.4 249.1 L489.2 248.5 L489.6 248.2 L488.6 247.5 L487.6 247 L486.8 246.4 L485.9 245.9 L486.5 246.1 L487.2 246.2 L487.8 246.3 L488.5 246.5 L487.3 245.9 L487.1 245.5 L487.8 245.6 L488.4 245.7 L489.2 246 L490 246.3 L490.8 246.6 L491.9 247.1 L493.1 247.6 L493.3 247.9 L493.6 248.2 L494.3 248.7 L494.9 249.1 L495.7 249.6 L496.6 250.2 L496.8 250.6M446.5 232.4 L445.7 232.1 L444.7 231.9 L443.8 231.7 L442.8 231.5 L443.4 231.6 L444 231.7 L444.6 231.7 L445.1 231.8 L444.4 231.7 L443.6 231.6 L442.8 231.4 L442 231.3 L441.2 231.2 L441.8 231.2 L443 231.4 L444 231.6 L444.9 231.7 L445.9 231.9 L446.4 232 L447.3 232.1 L447.9 232.2 L448.5 232.3 L449.1 232.4 L449.7 232.6 L450.2 232.6 L450.7 232.7 L451.1 232.8M453.7 233.4 L454.8 233.6 L456.5 234 L458.2 234.4 L457.6 234.4 L457.1 234.3 L456.6 234.2 L456.1 234.1 L455.6 234 L455 233.9 L454.5 233.8 L453.9 233.8 L453.4 233.7 L452.6 233.5 L451.7 233.3 L450.9 233.2 L450.1 233 L449.2 232.8 L448.6 232.7 L447.9 232.6 L447.2 232.5 L446.5 232.4M561.6 294.1 L562 293.9 L562.7 294.3 L563.4 294.7 L564 295.1 L564.6 295.5 L565.3 295.9 L566 296.9 L566.7 298 L567.4 298.8 L568 299.5 L567.1 298.8 L566.2 298 L565 297 L563.9 296 L562.7 295.1 L561.6 294.1M547.8 282.6 L548.3 282.7 L550.1 283.8 L551.4 285 L552.2 286 L553.1 286.9 L553.9 287.9 L553.3 287.9 L552.5 287.4 L551.8 286.8 L551 286 L550.2 285.1 L549.4 284.2 L548.6 283.4 L547.8 282.6M544.9 279.3 L545.1 278.9 L546.3 280 L547.4 281 L547.9 281.7 L548.4 282.3 L546.9 281.2 L545.9 280.3 L544.9 279.3M539.7 280.7 L540.1 280.6 L540.6 280.5 L541.6 281.3 L541.7 282 L540.7 281.3 L539.7 280.7M386.6 616 L386 617 L385.3 618 L384.7 619 L384 619.8 L383.3 620.5 L382.6 621.2 L382 621.9 L382.3 623 L382.7 624.1 L382 624.6 L381.4 625.1 L380.7 625.6 L380.1 626.1 L379.5 626.7 L379 627.4 L378.5 628.1 L378 628.8 L378.9 629.3 L379.9 629.7 L380.8 630.2 L381.7 630.6 L382.6 631.1 L383.4 632.4 L384.1 633.7 L384.7 635 L385.4 636.2 L386 637.5 L386.6 638.7 L387.2 640 L387.9 641.2 L388.5 642.4 L389.1 643.6 L389 644.8 L389 646 L388.9 647.2 L389.6 647.4 L390.2 647.7 L390.8 647.9 L391.4 648.2 L392 648.4 L392.6 648.7 L393.2 648.9 L393.7 649.2 L394.3 649.3 L394.8 649.5 L395.4 649.7 L395.9 649.9 L396.4 650.1 L396.9 650.3 L397.4 650.5 L397.9 650.6 L398.4 650.8 L398.9 651 L399.4 651.2 L399.9 651.4 L400.4 651.6 L400.8 651.8 L401.3 652 L401.7 652.2 L402.2 652.3 L402.6 652.4 L403.1 652.5 L403.5 652.6 L403.9 652.7 L404.4 652.8 L404.8 652.9 L405.2 653.1 L405.6 653.2 L406 653.3 L406.9 653.3 L407.7 653.3 L408.5 653.3 L409.4 653.4 L410.2 653.4 L411 653.4 L411.9 653.5 L412.7 653.5 L413.5 653.6 L414 653.3 L414.6 652.9 L415.2 652.6 L415.7 652.3 L416.3 652 L416.9 651.6 L417.5 651.5 L418 651.3 L418.6 651.1 L419.1 650.9 L419.7 650.8 L420.2 650.6 L420.8 650.4 L421.4 650.3 L422 650.1 L422.5 649.9 L423.4 649.2 L424.4 648.6 L425.3 647.9 L426 647.7 L426.6 647.5 L427.3 647.3 L427.9 647.1 L428.6 646.9 L429.3 646.7 L430 646.6 L430.6 646.4 L431.3 646.2 L432 646 L432.7 645.8 L433.4 645.7 L434.2 645.5 L434.8 645.4 L435.5 645.2 L436.2 645.1 L436.9 645 L437.6 644.9 L438.3 644.7 L439 644.6 L439.7 644.5 L440.5 644.4 L441.2 644.3 L442 644 L442.8 643.8 L443.7 643.6 L444.5 643.4 L445.3 643.1 L446.2 642.9 L447 642.7 L447.9 642.5 L448.6 642.5 L449.3 642.4 L450 642.3 L450.7 642.3 L451.4 642.3 L452.2 642.2 L452.8 642.3 L453.4 642.3 L454 642.4 L454.6 642.5 L455.2 642.5 L455.8 642.6 L456.4 642.7 L457 642.7 L457.6 642.8 L458.1 642.9 L458.9 642.9 L459.6 642.8 L460.3 642.8 L461 642.8 L461.7 642.8 L462.4 642.8 L462.8 643 L463.2 643.2 L463.7 643.4 L464.1 643.6 L464.5 643.8 L464.9 644 L465.3 644.2 L465.7 644.4 L466.1 644.6 L466.5 644.9 L467 645 L467.5 645.2 L468 645.3 L468.4 645.5 L468.9 645.6 L469.3 645.8 L469.8 645.9 L470.2 646.1 L470.7 646.3 L471.1 646.4 L471.6 646.6 L472 646.8 L472.4 646.9 L472.9 647.1 L473.3 647.3 L473.7 647.4 L474.1 647.6 L474.5 647.8 L474.9 648 L475.3 648.1 L475.6 648.4 L475.8 648.7 L476.1 648.9 L476.5 649.4 L477 650 L477.4 650.5 L477.8 651 L478.2 651.5 L478.5 652 L478.8 652.6 L479.1 653.1 L479.7 653.5 L480.2 653.6 L480.6 653.7 L481.1 653.8 L481.5 653.9 L482 654.1 L482.4 654.2 L482.8 654.3 L483.2 654.4 L483.7 654.6 L484.1 654.7 L484.6 654.8 L485 654.9 L485.5 655 L485.9 655.1 L486.4 655.2 L486.8 655.3 L486.5 655.8 L486.2 656.2 L485.8 656.6 L485.5 657.1 L485.1 657.5 L485 658.1 L484.9 658.7 L484.7 659.3 L486.3 659 L487.8 658.6 L488.2 658.8 L488.6 658.9 L489 659 L489.4 659.1 L489.8 659.2 L490.5 659.5 L491.2 659.7 L491.8 660 L492.2 660.4 L492.6 660.7 L493 661.1 L493.3 661.4 L493.9 661.7 L494.7 661.9 L495.4 662.1 L496.1 662.3 L495.8 662.9 L495.2 663.3 L494.5 663.8 L493.9 664.2 L493.2 664.6 L492.5 665.1 L491.9 665.5 L491.3 665.9 L490.7 666.3 L490 666.7 L489.4 667 L488.7 667.4 L488.5 667.7 L488.2 668 L487.9 668.3 L487.5 668.5 L487.2 668.8 L486.9 669.1 L486.5 669.4 L486.1 669.6 L485.7 669.9 L485.3 670.2 L484.8 670.5 L484.4 670.8 L484 671.1 L483.5 671.3 L482.8 671.7 L482.1 672 L481.4 672.4 L480.7 672.7 L480 673 L479.2 673.3 L478.1 673.8 L476.9 674.2 L475.7 674.6 L474.6 675 L474.2 675.2 L473.9 675.4 L473.5 675.6 L473.1 675.8 L472.8 676 L472.4 676.2 L472.8 676.5 L473.1 676.9 L473.4 677.2 L473.1 677.6 L472.7 677.9 L472.3 678.2 L471.8 678.4 L471.3 678.7 L470.8 678.9 L470.2 679.1 L469.7 679.3 L469.1 679.5 L468.6 679.7 L468 679.9 L467.5 680.1 L467 680.3 L466.5 680.5 L465.9 680.7 L465.4 680.8 L464.9 681 L464.3 681.2 L463.8 681.4 L463.2 681.5 L462.6 681.7 L462.2 681.8 L461.8 682 L461.4 682.1 L461 682.2 L460.6 682.3 L460.2 682.5 L459.7 682.6 L459.3 682.7 L458.6 682.9 L458 683 L457.4 683.2M377.7 687.9 L376.9 687.8 L376.3 687.7 L375.7 687.6 L375.1 687.6 L374.5 687.5 L373.9 687.4 L373.3 687.3 L372.7 687.2 L372.2 687.1 L371.7 687.1 L371.2 687 L370.7 686.9 L370.2 686.8 L369.7 686.7 L369.3 686.6 L368.8 686.5 L368.4 686.4 L367.9 686.3 L367.4 686.2 L366.9 686.1 L366.5 686 L366 685.9 L365.5 685.8 L365.1 685.7 L364.6 685.6 L364.2 685.4 L363.8 685.3 L363.4 685.2 L362.9 685.1 L362.5 685 L362.1 684.9 L361.7 684.8 L361.3 684.6 L360.9 684.5 L360.5 684.4 L360.1 684.3 L359.7 684.2 L359 683.9 L360 684 L361.1 684 L362.2 684.1 L363.2 684.1 L364.3 684.3 L365.3 684.4 L366.3 684.5 L367.4 684.6 L368.4 684.7 L369.4 684.8 L370.3 684.8 L371.3 684.9 L372.6 684.9 L373.9 684.9 L375.1 684.9 L376.3 684.9 L377.5 684.9 L377.2 684.5 L377 684.2 L376.5 684 L375.7 683.8 L374.9 683.7 L374.1 683.6 L373.5 683.3 L373 683.1 L372.5 682.9 L372 682.7 L371.6 682.5 L371.1 682.3 L370.7 682.1 L370.2 681.9 L369.8 681.6 L369.4 681.4 L369 681.2 L368.5 681 L368.1 680.8 L367.7 680.5 L367.2 680.3 L366.8 680.1 L366.5 679.9 L366.1 679.6 L365.7 679.4 L365.4 679.2 L364.9 678.9 L364.3 678.7 L363.8 678.4 L363.3 678.2 L362.9 677.9 L362.4 677.7 L361.9 677.4 L361.5 677.1 L361 676.9 L360.6 676.6 L359.6 676.4 L358.6 676.2 L357.6 676 L356.7 675.8 L356.3 675.6 L356 675.5 L355.6 675.3 L355 674.9 L354.3 674.6 L353.7 674.3 L353.1 673.9 L352.5 673.5 L351.9 673.2 L351.1 672.7 L350.6 672.5 L350.1 672.3 L349.6 672.1 L349.2 671.8 L348.7 671.6 L348.2 671.4 L347.8 671.1 L347.3 670.9 L346.9 670.6 L346.3 670.2 L345.8 669.8 L345.4 669.3 L344.9 668.9 L344.5 668.4 L344 668 L343.6 667.5 L343.2 667 L342.9 666.5 L342.5 666.1 L342.4 665.6 L342.3 665.2 L342.2 664.6 L342.2 664 L341.9 663.5 L341.7 662.9 L341.5 662.4 L341.4 661.9 L341.2 661.4 L341.5 661 L341.7 660.6 L342 660.3 L342.3 659.9 L342.6 659.5 L343.1 659.2 L343.6 658.9 L344.2 658.6 L344.7 658.3 L345.3 658 L345.9 657.7 L346.6 657.4 L347.2 657.2 L347.9 656.9 L348.6 656.7 L349.1 656.6 L349.5 656.6 L350 656.5 L350.4 656.4 L350.9 656.4 L351.4 656.3 L351.8 656.2 L352.3 656.2 L352.8 656.1 L353.2 656.1 L353.7 656 L354.2 655.9 L353.9 655.5 L353.7 655.1 L353.5 654.6 L353.3 654.2 L353 653.7 L352.9 653.2 L351.7 652.3 L350.6 651.4 L349.5 650.5 L349.9 650.3 L350.3 650.2 L350.7 650 L351.1 649.9 L351.5 649.7 L352 649.6 L352.4 649.5 L352.8 649.3 L353.2 649.2 L353.6 649 L354 648.9 L354.5 648.7 L354.9 648.6 L355.3 648.4 L355.7 648.3 L356.1 648.1 L356.5 648 L357 647.9 L357.4 647.7 L357.8 647.6 L358.4 647.5 L358.9 647.5 L359.5 647.4 L360 647.4 L360.6 647.3 L361.1 647.3 L361.7 647.2 L362.2 647.2 L362.8 647.1 L363.3 647.1 L363.8 647 L364.3 646.9 L364.8 646.8 L365.3 646.7 L365.8 646.6 L366.3 646.5 L366.8 646.4 L367.3 646.3 L367.8 646.2 L368.3 646.1 L368.8 646 L369.2 645.9 L369.7 645.8 L370.2 645.6 L370.7 645.5 L371.1 645.4 L371.6 645.3 L372.1 645.1 L372.6 645 L373.1 644.9 L373.1 644.1 L373.1 643.3 L373.1 642.5 L373.2 641.7 L372.2 641.2 L371.2 640.7 L370.2 640.2 L369.2 639.7 L369.2 638.8 L369.2 637.9 L369.3 637 L369.3 636 L369.4 635.1 L369.6 634.1 L369.9 633.5 L370.2 632.8 L370.6 632.2 L371 631.5 L371.3 630.8 L371.8 630.2 L372.2 629.5 L372.5 628.6 L372.8 627.7 L373.2 626.8 L373.6 625.9 L374 625 L374.5 624.2 L375 623.4 L375.5 622.6 L376.1 621.8 L376.7 621.2 L377.3 620.5 L378 619.9 L378.6 619.2 L379.3 618.8 L380.1 618.3 L380.8 617.8 L381.6 617.3 L382.3 616.9 L383.2 616.7 L384 616.5 L384.9 616.3 L385.8 616.1 L386.6 616M390.5 497.3 L392.3 498.9 L391.5 500.5 L390.7 502.1 L389.4 503.3 L388.1 504.5 L387.3 503.8 L388.5 502.3 L389.6 500.9 L389.9 499.7 L390.2 498.5 L390.5 497.3M368.3 497.5 L369 497.5 L369.1 498.3 L368.4 498.3 L368.3 497.5" fill="none" stroke="#00dc00" stroke-width="1.5" stroke-linejoin="round"/>
<path d="M356.1 359.5 L357.3 368.6" stroke="#8a8a8a" stroke-width="1"/>
<path d="M186.9 380.8 L590.9 325" stroke="#fbfbfb" stroke-width="3.6" fill="none"/>
<g stroke="#cfcfcf" stroke-width="1.3" stroke-dasharray="3 1.9" fill="none">
<path d="M215.3 371.5 L589.2 319.7"/>
<path d="M212.7 382.7 L594.7 329.9"/>
</g>
<path d="M587.6 310.4 L592 342.7" stroke="#b0b0b0" stroke-width="1.8"/>
<g stroke="#0000c8" stroke-width="1.7" fill="none">
<rect x="903.3" y="497.5" width="230.5" height="229.4"/>
<path d="M1018.5 497.5 v23 M1018.5 726.9 v-23 M903.3 612.2 h23 M1133.8 612.2 h-23"/>
</g>
<circle cx="1019" cy="612.5" r="11.6" fill="none" stroke="#8c8c8c" stroke-width="1.2"/>
<path d="M1000.7 610 L1022.9 613.5" stroke="#008a00" stroke-width="1.2" stroke-dasharray="2.2 1.8"/>
<g fill="#c6c6c6"><circle cx="931.3" cy="500.7" r="0.9"/><circle cx="936.7" cy="504.2" r="0.9"/><circle cx="939.7" cy="506.9" r="0.9"/><circle cx="941.6" cy="508.1" r="0.9"/><circle cx="993.4" cy="510.9" r="0.9"/><circle cx="907.4" cy="509.2" r="0.9"/><circle cx="940.8" cy="513" r="0.9"/><circle cx="973.2" cy="513.5" r="0.9"/><circle cx="977.5" cy="516.3" r="0.9"/><circle cx="969.3" cy="520.4" r="0.9"/><circle cx="937.7" cy="524.6" r="0.9"/><circle cx="910" cy="527.7" r="0.9"/><circle cx="972.1" cy="530.9" r="0.9"/><circle cx="985.3" cy="530.1" r="0.9"/><circle cx="939.7" cy="532.4" r="1.05"/><circle cx="940.4" cy="536.3" r="0.9"/><circle cx="952.4" cy="532.4" r="0.9"/><circle cx="953" cy="537.5" r="0.9"/><circle cx="905.4" cy="536.1" r="0.9"/><circle cx="912.6" cy="540.9" r="0.9"/><circle cx="960.2" cy="541.2" r="0.9"/><circle cx="996.6" cy="544.3" r="0.9"/><circle cx="1010.1" cy="545.8" r="0.9"/><circle cx="920.5" cy="550.9" r="0.9"/><circle cx="925.1" cy="554.3" r="0.9"/><circle cx="937.7" cy="552" r="0.9"/><circle cx="951" cy="552" r="0.9"/><circle cx="992.9" cy="558" r="0.9"/><circle cx="978.4" cy="562.2" r="0.9"/><circle cx="1019.4" cy="561.2" r="0.9"/><circle cx="975.8" cy="571.3" r="0.9"/><circle cx="973.5" cy="572.8" r="0.9"/><circle cx="970.7" cy="575.3" r="0.9"/><circle cx="993.5" cy="571.7" r="0.9"/><circle cx="1008" cy="572.8" r="0.9"/><circle cx="994.9" cy="576.2" r="0.9"/><circle cx="982.3" cy="577.7" r="0.9"/><circle cx="983.3" cy="580.6" r="0.9"/><circle cx="908.8" cy="576.8" r="0.9"/><circle cx="911.6" cy="576.3" r="0.9"/><circle cx="923.4" cy="580" r="0.9"/><circle cx="903.9" cy="585.1" r="0.9"/><circle cx="997" cy="586.7" r="0.9"/><circle cx="1008.8" cy="585.9" r="0.9"/><circle cx="1005.1" cy="589.9" r="0.9"/><circle cx="978.1" cy="592.8" r="0.9"/><circle cx="998.6" cy="597" r="0.9"/><circle cx="910" cy="596.4" r="0.9"/><circle cx="907.2" cy="599.1" r="0.9"/><circle cx="1010" cy="601.3" r="1.05"/><circle cx="955.1" cy="607.1" r="0.9"/><circle cx="923.1" cy="608.7" r="0.9"/><circle cx="970.4" cy="610.8" r="0.9"/><circle cx="1001.2" cy="607.5" r="0.9"/><circle cx="919.6" cy="612.5" r="0.9"/><circle cx="964.4" cy="613.9" r="0.9"/><circle cx="1075.5" cy="503.2" r="1.05"/><circle cx="1100.4" cy="507" r="0.9"/><circle cx="1068.5" cy="509" r="0.9"/><circle cx="1071.1" cy="510.7" r="0.9"/><circle cx="1088.2" cy="509.3" r="0.9"/><circle cx="1058.1" cy="518.9" r="0.9"/><circle cx="1047.7" cy="520.4" r="0.9"/><circle cx="1030.8" cy="522.4" r="0.9"/><circle cx="1063.3" cy="522.9" r="0.9"/><circle cx="1124.1" cy="521.6" r="0.9"/><circle cx="1093.5" cy="524" r="0.9"/><circle cx="1073.8" cy="525.2" r="0.9"/><circle cx="1052.7" cy="526.1" r="0.9"/><circle cx="1098.4" cy="525.8" r="0.9"/><circle cx="1116.1" cy="525.2" r="0.9"/><circle cx="1117.5" cy="528" r="0.9"/><circle cx="1127.1" cy="528.1" r="0.9"/><circle cx="1119.7" cy="530.9" r="0.9"/><circle cx="1053" cy="533.7" r="0.9"/><circle cx="1097.2" cy="534.6" r="0.9"/><circle cx="1037.6" cy="536.9" r="0.9"/><circle cx="1026.3" cy="538.7" r="0.9"/><circle cx="1074.8" cy="540.1" r="0.9"/><circle cx="1040" cy="542.3" r="0.9"/><circle cx="1068.8" cy="542.9" r="0.9"/><circle cx="1024.2" cy="546.1" r="0.9"/><circle cx="1102.3" cy="545.1" r="0.9"/><circle cx="1068.4" cy="553.2" r="0.9"/><circle cx="1091.9" cy="561.1" r="0.9"/><circle cx="1102.6" cy="561.5" r="0.9"/><circle cx="1111" cy="560.5" r="0.9"/><circle cx="1030.5" cy="564.2" r="0.9"/><circle cx="1066.7" cy="564" r="0.9"/><circle cx="1067.9" cy="567.4" r="0.9"/><circle cx="1109.7" cy="569.2" r="0.9"/><circle cx="1090.2" cy="575.3" r="0.9"/><circle cx="1074.8" cy="579" r="0.9"/><circle cx="1034.2" cy="578.2" r="0.9"/><circle cx="1029.9" cy="579.7" r="0.9"/><circle cx="1029.9" cy="581.7" r="0.9"/><circle cx="1042.2" cy="582" r="0.9"/><circle cx="1122.3" cy="586.2" r="0.9"/><circle cx="1050" cy="587.4" r="0.9"/><circle cx="1060.1" cy="589" r="0.9"/><circle cx="1064.8" cy="589" r="0.9"/><circle cx="1036.8" cy="590.7" r="0.9"/><circle cx="1064.4" cy="594.1" r="0.9"/><circle cx="1060.2" cy="595.6" r="0.9"/><circle cx="1030.2" cy="597.7" r="0.9"/><circle cx="1039.1" cy="597" r="0.9"/><circle cx="1042.6" cy="597.4" r="0.9"/><circle cx="1072.1" cy="600.7" r="0.9"/><circle cx="1117.1" cy="600.7" r="0.9"/><circle cx="1071.5" cy="604.2" r="0.9"/><circle cx="1027.9" cy="603.9" r="0.9"/><circle cx="1049.1" cy="608.2" r="0.9"/><circle cx="1132.1" cy="609.3" r="0.9"/><circle cx="1037.3" cy="610.8" r="0.9"/><circle cx="1020.6" cy="609.3" r="0.9"/><circle cx="1057.3" cy="497.3" r="0.9"/><circle cx="957.9" cy="618.6" r="0.9"/><circle cx="931.3" cy="619.7" r="0.9"/><circle cx="927.1" cy="621.1" r="0.9"/><circle cx="970.7" cy="620.9" r="0.9"/><circle cx="909.2" cy="627.9" r="0.9"/><circle cx="903.9" cy="629.7" r="0.9"/><circle cx="951.3" cy="628.3" r="0.9"/><circle cx="959.5" cy="627.7" r="0.9"/><circle cx="966.5" cy="625.9" r="0.9"/><circle cx="973.2" cy="627.7" r="0.9"/><circle cx="911.7" cy="637.7" r="0.9"/><circle cx="921.6" cy="638.8" r="0.9"/><circle cx="943" cy="637.4" r="0.9"/><circle cx="955.5" cy="635.6" r="0.9"/><circle cx="966.5" cy="635.1" r="0.9"/><circle cx="1005.2" cy="636.5" r="0.9"/><circle cx="978.7" cy="637.4" r="0.9"/><circle cx="976.6" cy="638.6" r="0.9"/><circle cx="988.3" cy="639.7" r="0.9"/><circle cx="971.9" cy="641.9" r="0.9"/><circle cx="951" cy="643" r="0.9"/><circle cx="941.6" cy="648" r="0.9"/><circle cx="962.2" cy="649.4" r="0.9"/><circle cx="966.7" cy="649.6" r="0.9"/><circle cx="950.2" cy="650.8" r="0.9"/><circle cx="970.7" cy="652.5" r="0.9"/><circle cx="992.6" cy="651.6" r="0.9"/><circle cx="928.5" cy="653.3" r="0.9"/><circle cx="947.9" cy="654.4" r="0.9"/><circle cx="975.9" cy="655.6" r="0.9"/><circle cx="986" cy="655.4" r="0.9"/><circle cx="959.6" cy="657.9" r="0.9"/><circle cx="938.2" cy="659.6" r="0.9"/><circle cx="969.6" cy="660.5" r="0.9"/><circle cx="997.8" cy="659.6" r="0.9"/><circle cx="1006.1" cy="660.2" r="0.9"/><circle cx="986" cy="663.5" r="0.9"/><circle cx="920.8" cy="668.2" r="0.9"/><circle cx="930" cy="670.2" r="0.9"/><circle cx="914.9" cy="671.8" r="0.9"/><circle cx="990.7" cy="669.8" r="0.9"/><circle cx="957.3" cy="675.2" r="0.9"/><circle cx="938.4" cy="677" r="0.9"/><circle cx="956.5" cy="679.5" r="0.9"/><circle cx="960.5" cy="680.2" r="0.9"/><circle cx="972.9" cy="681.6" r="0.9"/><circle cx="1014" cy="684.2" r="0.9"/><circle cx="964.2" cy="686.9" r="0.9"/><circle cx="917.7" cy="687.6" r="0.9"/><circle cx="903.9" cy="688.1" r="0.9"/><circle cx="912.3" cy="690.6" r="0.9"/><circle cx="939.1" cy="691.3" r="0.9"/><circle cx="953.6" cy="691.5" r="0.9"/><circle cx="965.5" cy="692.7" r="0.9"/><circle cx="910.2" cy="695.2" r="0.9"/><circle cx="940.4" cy="695.5" r="0.9"/><circle cx="941.6" cy="696.7" r="0.9"/><circle cx="935.7" cy="699.5" r="0.9"/><circle cx="956.5" cy="699.8" r="0.9"/><circle cx="945.1" cy="703.3" r="0.9"/><circle cx="928" cy="704.3" r="0.9"/><circle cx="935.9" cy="705.4" r="0.9"/><circle cx="912" cy="706.9" r="0.9"/><circle cx="1008.6" cy="710.1" r="0.9"/><circle cx="933.9" cy="712.7" r="0.9"/><circle cx="920.5" cy="717.2" r="0.9"/><circle cx="911.6" cy="718.6" r="0.9"/><circle cx="1019.4" cy="632.8" r="0.9"/><circle cx="1019.4" cy="679.8" r="0.9"/><circle cx="1009.7" cy="727.8" r="0.9"/><circle cx="1095" cy="617.9" r="0.9"/><circle cx="1118.9" cy="616.6" r="0.9"/><circle cx="1126.1" cy="620.8" r="0.9"/><circle cx="1075" cy="621.9" r="0.9"/><circle cx="1043.1" cy="622.3" r="0.9"/><circle cx="1104" cy="622.2" r="0.9"/><circle cx="1105.8" cy="624.3" r="0.9"/><circle cx="1082.4" cy="627.4" r="0.9"/><circle cx="1070.7" cy="631.6" r="0.9"/><circle cx="1104" cy="631.1" r="0.9"/><circle cx="1125.5" cy="630.6" r="0.9"/><circle cx="1101.5" cy="634.3" r="0.9"/><circle cx="1110.6" cy="635" r="0.9"/><circle cx="1026.2" cy="634.2" r="0.9"/><circle cx="1021.9" cy="638.2" r="0.9"/><circle cx="1020.8" cy="640.5" r="0.9"/><circle cx="1134.3" cy="637.4" r="0.9"/><circle cx="1130.8" cy="639.7" r="0.9"/><circle cx="1129.2" cy="643.3" r="0.9"/><circle cx="1055.9" cy="641.3" r="0.9"/><circle cx="1065.9" cy="643.1" r="0.9"/><circle cx="1093.6" cy="643.9" r="0.9"/><circle cx="1116.7" cy="643.7" r="0.9"/><circle cx="1088.1" cy="652.5" r="0.9"/><circle cx="1107.3" cy="655" r="0.9"/><circle cx="1117.1" cy="655.3" r="0.9"/><circle cx="1046.3" cy="654.7" r="0.9"/><circle cx="1039.7" cy="656.7" r="0.9"/><circle cx="1134.6" cy="661" r="0.9"/><circle cx="1061.6" cy="663.1" r="0.9"/><circle cx="1025.5" cy="664.8" r="0.9"/><circle cx="1039.7" cy="669.2" r="0.9"/><circle cx="1050" cy="669.8" r="0.9"/><circle cx="1105.8" cy="669.5" r="0.9"/><circle cx="1118.4" cy="669.2" r="0.9"/><circle cx="1026" cy="671.3" r="0.9"/><circle cx="1038.5" cy="673.5" r="0.9"/><circle cx="1121.5" cy="677" r="0.9"/><circle cx="1020.3" cy="677" r="0.9"/><circle cx="1101.5" cy="683.2" r="0.9"/><circle cx="1041.7" cy="691.5" r="0.9"/><circle cx="1122.3" cy="693.6" r="0.9"/><circle cx="1113.2" cy="695" r="0.9"/><circle cx="1133.2" cy="696" r="0.9"/><circle cx="1092.2" cy="700.6" r="0.9"/><circle cx="1113.2" cy="700.6" r="0.9"/><circle cx="1043.4" cy="701.5" r="0.9"/><circle cx="1047.6" cy="702.6" r="0.9"/><circle cx="1032.9" cy="704.1" r="0.9"/><circle cx="1031.6" cy="706.3" r="0.9"/><circle cx="1069.5" cy="704.7" r="0.9"/><circle cx="1117.4" cy="705.7" r="0.9"/><circle cx="1035.3" cy="710" r="0.9"/><circle cx="1052.7" cy="709.2" r="0.9"/><circle cx="1058.5" cy="709.7" r="0.9"/><circle cx="1111.7" cy="711.1" r="0.9"/><circle cx="1045.7" cy="714.4" r="0.9"/><circle cx="1078.1" cy="716.3" r="0.9"/><circle cx="1021.9" cy="718.6" r="0.9"/><circle cx="1034.2" cy="720.6" r="0.9"/><circle cx="1048" cy="722.3" r="0.9"/><circle cx="1097.2" cy="721.5" r="0.9"/><circle cx="1092.2" cy="725.2" r="0.9"/><circle cx="1025.7" cy="726.1" r="0.9"/><circle cx="1020.8" cy="727.5" r="0.9"/><circle cx="1019.5" cy="620" r="0.9"/></g>
<g fill="#f2f2f2"><circle cx="913.9" cy="500.1" r="1.5"/><circle cx="958.8" cy="505.3" r="1.5"/><circle cx="996.3" cy="508.6" r="1.25"/><circle cx="947.3" cy="542.9" r="1.5"/><circle cx="939.7" cy="604.1" r="1.5"/><circle cx="1121.1" cy="505.5" r="2.5"/><circle cx="1037.6" cy="509.6" r="1.25"/><circle cx="1057.7" cy="522.1" r="1.25"/><circle cx="1107.7" cy="528.9" r="1.25"/><circle cx="1107.7" cy="532" r="1.25"/><circle cx="912.6" cy="654.7" r="1.25"/><circle cx="905.9" cy="659.1" r="1.9"/><circle cx="996.4" cy="669.5" r="1.25"/><circle cx="927.1" cy="688.4" r="1.5"/><circle cx="947.3" cy="709" r="1.25"/><circle cx="1013.7" cy="714.1" r="1.25"/><circle cx="1032.2" cy="623.2" r="1.25"/><circle cx="1042.2" cy="660.5" r="1.25"/></g>
<g font-family="'Liberation Mono',monospace" xml:space="preserve" style="white-space:pre"><text transform="translate(7.6 16.80) scale(1 0.94)" font-size="18.56px" fill="#ffffff" stroke="#ffffff" stroke-width="0.5" xml:space="preserve" style="white-space:pre" >486958 2014 MU69 occults UCAC4 348-170642 on 2018 Aug  4 from  1h 19m to  1h 29m UT</text><text transform="translate(5.9 31.90) scale(1 0.885)" font-size="12.36px" fill="#f2f2f2" stroke="#f2f2f2" stroke-width="0.25" xml:space="preserve" style="white-space:pre" >Star:</text><text transform="translate(5.9 43.05) scale(1 0.885)" font-size="12.36px" fill="#f2f2f2" stroke="#f2f2f2" stroke-width="0.25" xml:space="preserve" style="white-space:pre" >Mag V = 13.4; B = 14.5; R = 12.8</text><text transform="translate(5.9 54.20) scale(1 0.885)" font-size="12.36px" fill="#f2f2f2" stroke="#f2f2f2" stroke-width="0.25" xml:space="preserve" style="white-space:pre" > RA = 19  4 21.4785 (J2000)</text><text transform="translate(5.9 65.35) scale(1 0.885)" font-size="12.36px" fill="#f2f2f2" stroke="#f2f2f2" stroke-width="0.25" xml:space="preserve" style="white-space:pre" >Dec = -20 35 36.547   ...</text><text transform="translate(5.9 76.50) scale(1 0.885)" font-size="12.36px" fill="#f2f2f2" stroke="#f2f2f2" stroke-width="0.25" xml:space="preserve" style="white-space:pre" >[of Date: 19  5 28, -20 33 46]</text><text transform="translate(3.7 87.65) scale(1 0.885)" font-size="12.36px" fill="#f2f2f2" stroke="#f2f2f2" stroke-width="0.25" xml:space="preserve" style="white-space:pre" >  Prediction of 2018 Aug 28.0</text><text transform="translate(471.6 31.90) scale(1 0.885)" font-size="12.36px" fill="#f2f2f2" stroke="#f2f2f2" stroke-width="0.25" xml:space="preserve" style="white-space:pre" >Max Duration =  1.7 secs</text><text transform="translate(471.6 43.05) scale(1 0.885)" font-size="12.36px" fill="#f2f2f2" stroke="#f2f2f2" stroke-width="0.25" xml:space="preserve" style="white-space:pre" >    Mag Drop = 14.1 (14.3r)</text><text transform="translate(471.6 54.20) scale(1 0.885)" font-size="12.36px" fill="#f2f2f2" stroke="#f2f2f2" stroke-width="0.25" xml:space="preserve" style="white-space:pre" >Sun :   Dist = 153°</text><text transform="translate(471.6 65.35) scale(1 0.885)" font-size="12.36px" fill="#f2f2f2" stroke="#f2f2f2" stroke-width="0.25" xml:space="preserve" style="white-space:pre" >Moon:   Dist = 108°</text><text transform="translate(471.6 76.50) scale(1 0.885)" font-size="12.36px" fill="#f2f2f2" stroke="#f2f2f2" stroke-width="0.25" xml:space="preserve" style="white-space:pre" >    :  illum = 57 %</text><text transform="translate(471.6 87.65) scale(1 0.885)" font-size="12.36px" fill="#f2f2f2" stroke="#f2f2f2" stroke-width="0.25" xml:space="preserve" style="white-space:pre" >E 0.004&quot;x 0.004&quot; in PA 90</text><text transform="translate(892.4 31.90) scale(1 0.885)" font-size="12.36px" fill="#f2f2f2" stroke="#f2f2f2" stroke-width="0.25" xml:space="preserve" style="white-space:pre" >             Asteroid:</text><text transform="translate(892.4 43.05) scale(1 0.885)" font-size="12.36px" fill="#f2f2f2" stroke="#f2f2f2" stroke-width="0.25" xml:space="preserve" style="white-space:pre" >               Mag = 27.5</text><text transform="translate(892.4 54.20) scale(1 0.885)" font-size="12.36px" fill="#f2f2f2" stroke="#f2f2f2" stroke-width="0.25" xml:space="preserve" style="white-space:pre" >               Dia =  36km,  0.001&quot;</text><text transform="translate(892.4 65.35) scale(1 0.885)" font-size="12.36px" fill="#f2f2f2" stroke="#f2f2f2" stroke-width="0.25" xml:space="preserve" style="white-space:pre" >          Parallax = 0.208&quot;</text><text transform="translate(892.4 76.50) scale(1 0.885)" font-size="12.36px" fill="#f2f2f2" stroke="#f2f2f2" stroke-width="0.25" xml:space="preserve" style="white-space:pre" >        Hourly dRA =-0.179s</text><text transform="translate(892.4 87.65) scale(1 0.885)" font-size="12.36px" fill="#f2f2f2" stroke="#f2f2f2" stroke-width="0.25" xml:space="preserve" style="white-space:pre" >              dDec = -0.35&quot;</text><text transform="translate(6.6 113.20) scale(1 1.0)" font-size="12.36px" fill="#e6e600" stroke="#e6e600" stroke-width="0.5" xml:space="preserve" style="white-space:pre" >TNO</text></g>
<rect x="0" y="97.2" width="1157" height="3" fill="#d6d6d6"/>
<text x="3.5" y="763.6" font-family="'Liberation Serif',serif" font-size="10.9px" fill="#f0f0f0">Occult 4.5.10.0, FindOrb2018Aug28</text>
</svg>

</body></html>
